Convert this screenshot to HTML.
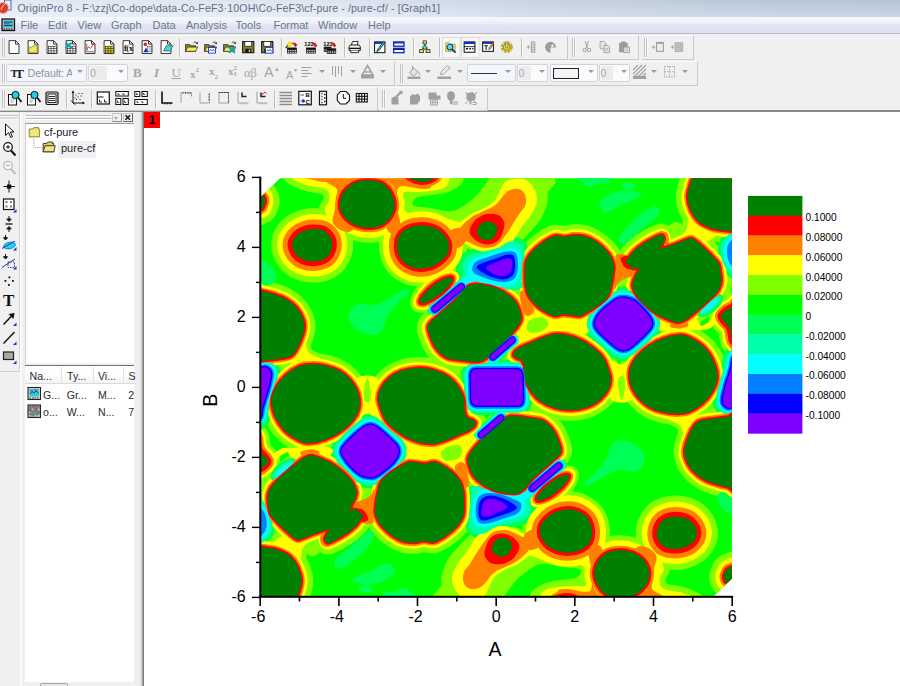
<!DOCTYPE html>
<html><head><meta charset="utf-8"><title>OriginPro 8</title>
<style>
html,body{margin:0;padding:0}
body{width:900px;height:686px;overflow:hidden;background:#fff;position:relative;font-family:"Liberation Sans",sans-serif}
</style></head><body>
<div style="position:absolute;left:0;top:0;width:900px;height:17px;background:linear-gradient(to right,#e2e8f3 0%,#dde4f0 38%,#c6d3e2 60%,#b9c9da 80%,#b3c5d7 100%)"></div>
<div style="position:absolute;left:0;top:0;width:900px;height:17px;background:linear-gradient(to bottom,rgba(255,255,255,0) 0%,rgba(255,255,255,0.3) 100%)"></div>
<div style="position:absolute;left:0;top:17px;width:900px;height:16px;background:linear-gradient(to bottom,#f6f8fc 0%,#eef1f9 35%,#dfe3f3 55%,#dde1f2 100%)"></div>
<div style="position:absolute;left:0;top:33px;width:900px;height:1px;background:#b4b9c8"></div>
<div style="position:absolute;left:0;top:34px;width:900px;height:76px;background:#f0f0f0"></div>
<div style="position:absolute;left:0;top:110px;width:900px;height:1.5px;background:#8a8a8a"></div>
<div style="position:absolute;left:0;top:111.5px;width:144px;height:575px;background:#f0f0f0"></div>
<div style="position:absolute;left:139.5px;top:111.5px;width:4.5px;height:575px;background:linear-gradient(to right,#ececec 0%,#c8c8c8 45%,#8c8c8c 75%,#6c6c6c 100%)"></div>
<div style="position:absolute;left:20px;top:111.5px;width:2px;height:575px;background:#fbfbfb"></div>
<div style="position:absolute;left:17.5px;top:0.8px;height:14px;line-height:14px;font-family:'Liberation Sans',sans-serif;font-size:10.6px;color:#5f6e86;white-space:nowrap;letter-spacing:0.13px" id="ttl">OriginPro 8 - F:\zzj\Co-dope\data-Co-FeF3·10OH\Co-FeF3\cf-pure - /pure-cf/ - [Graph1]</div>
<div class="mn" style="position:absolute;left:20.5px;top:19px;height:13px;line-height:13px;font-family:'Liberation Sans',sans-serif;font-size:11px;color:#6a7789;white-space:nowrap">File</div>
<div class="mn" style="position:absolute;left:48.0px;top:19px;height:13px;line-height:13px;font-family:'Liberation Sans',sans-serif;font-size:11px;color:#6a7789;white-space:nowrap">Edit</div>
<div class="mn" style="position:absolute;left:77.5px;top:19px;height:13px;line-height:13px;font-family:'Liberation Sans',sans-serif;font-size:11px;color:#6a7789;white-space:nowrap">View</div>
<div class="mn" style="position:absolute;left:111.0px;top:19px;height:13px;line-height:13px;font-family:'Liberation Sans',sans-serif;font-size:11px;color:#6a7789;white-space:nowrap">Graph</div>
<div class="mn" style="position:absolute;left:152.5px;top:19px;height:13px;line-height:13px;font-family:'Liberation Sans',sans-serif;font-size:11px;color:#6a7789;white-space:nowrap">Data</div>
<div class="mn" style="position:absolute;left:186.0px;top:19px;height:13px;line-height:13px;font-family:'Liberation Sans',sans-serif;font-size:11px;color:#6a7789;white-space:nowrap">Analysis</div>
<div class="mn" style="position:absolute;left:235.5px;top:19px;height:13px;line-height:13px;font-family:'Liberation Sans',sans-serif;font-size:11px;color:#6a7789;white-space:nowrap">Tools</div>
<div class="mn" style="position:absolute;left:273.5px;top:19px;height:13px;line-height:13px;font-family:'Liberation Sans',sans-serif;font-size:11px;color:#6a7789;white-space:nowrap">Format</div>
<div class="mn" style="position:absolute;left:318.0px;top:19px;height:13px;line-height:13px;font-family:'Liberation Sans',sans-serif;font-size:11px;color:#6a7789;white-space:nowrap">Window</div>
<div class="mn" style="position:absolute;left:368.0px;top:19px;height:13px;line-height:13px;font-family:'Liberation Sans',sans-serif;font-size:11px;color:#6a7789;white-space:nowrap">Help</div>
<div style="position:absolute;left:0.0px;top:35.0px;width:567.5px;height:24.5px;box-sizing:border-box;border-right:1px solid #c9c9c9;border-bottom:1px solid #c9c9c9;border-top:1px solid #fafafa"></div>
<div style="position:absolute;left:569.0px;top:35.0px;width:70.0px;height:24.5px;box-sizing:border-box;border-right:1px solid #c9c9c9;border-bottom:1px solid #c9c9c9;border-top:1px solid #fafafa"></div>
<div style="position:absolute;left:641.5px;top:35.0px;width:52.0px;height:24.5px;box-sizing:border-box;border-right:1px solid #c9c9c9;border-bottom:1px solid #c9c9c9;border-top:1px solid #fafafa"></div>
<div style="position:absolute;left:2.0px;top:38.0px;width:1px;height:19.0px;background:#c0c0c0;box-shadow:2px 0 0 #c0c0c0,1px 0 0 #fafafa,3px 0 0 #fafafa"></div>
<div style="position:absolute;left:571.5px;top:38.0px;width:1px;height:19.0px;background:#c0c0c0;box-shadow:2px 0 0 #c0c0c0,1px 0 0 #fafafa,3px 0 0 #fafafa"></div>
<div style="position:absolute;left:644.0px;top:38.0px;width:1px;height:19.0px;background:#c0c0c0;box-shadow:2px 0 0 #c0c0c0,1px 0 0 #fafafa,3px 0 0 #fafafa"></div>
<div style="position:absolute;left:0.0px;top:60.5px;width:395.0px;height:25.0px;box-sizing:border-box;border-right:1px solid #c9c9c9;border-bottom:1px solid #c9c9c9;border-top:1px solid #fafafa"></div>
<div style="position:absolute;left:397.0px;top:60.5px;width:300.5px;height:25.0px;box-sizing:border-box;border-right:1px solid #c9c9c9;border-bottom:1px solid #c9c9c9;border-top:1px solid #fafafa"></div>
<div style="position:absolute;left:2.0px;top:63.5px;width:1px;height:19.0px;background:#c0c0c0;box-shadow:2px 0 0 #c0c0c0,1px 0 0 #fafafa,3px 0 0 #fafafa"></div>
<div style="position:absolute;left:399.5px;top:63.5px;width:1px;height:19.0px;background:#c0c0c0;box-shadow:2px 0 0 #c0c0c0,1px 0 0 #fafafa,3px 0 0 #fafafa"></div>
<div style="position:absolute;left:0.0px;top:86.5px;width:377.5px;height:24.0px;box-sizing:border-box;border-right:1px solid #c9c9c9;border-bottom:1px solid #c9c9c9;border-top:1px solid #fafafa"></div>
<div style="position:absolute;left:379.0px;top:86.5px;width:108.5px;height:24.0px;box-sizing:border-box;border-right:1px solid #c9c9c9;border-bottom:1px solid #c9c9c9;border-top:1px solid #fafafa"></div>
<div style="position:absolute;left:2.0px;top:89.5px;width:1px;height:18.0px;background:#c0c0c0;box-shadow:2px 0 0 #c0c0c0,1px 0 0 #fafafa,3px 0 0 #fafafa"></div>
<div style="position:absolute;left:381.5px;top:89.5px;width:1px;height:18.0px;background:#c0c0c0;box-shadow:2px 0 0 #c0c0c0,1px 0 0 #fafafa,3px 0 0 #fafafa"></div>
<div style="position:absolute;left:178.5px;top:38.0px;width:1px;height:19px;background:#bdbdbd;box-shadow:1px 0 0 #fbfbfb"></div>
<div style="position:absolute;left:280.5px;top:38.0px;width:1px;height:19px;background:#bdbdbd;box-shadow:1px 0 0 #fbfbfb"></div>
<div style="position:absolute;left:343.7px;top:38.0px;width:1px;height:19px;background:#bdbdbd;box-shadow:1px 0 0 #fbfbfb"></div>
<div style="position:absolute;left:368.7px;top:38.0px;width:1px;height:19px;background:#bdbdbd;box-shadow:1px 0 0 #fbfbfb"></div>
<div style="position:absolute;left:413.3px;top:38.0px;width:1px;height:19px;background:#bdbdbd;box-shadow:1px 0 0 #fbfbfb"></div>
<div style="position:absolute;left:438.7px;top:38.0px;width:1px;height:19px;background:#bdbdbd;box-shadow:1px 0 0 #fbfbfb"></div>
<div style="position:absolute;left:521.0px;top:38.0px;width:1px;height:19px;background:#bdbdbd;box-shadow:1px 0 0 #fbfbfb"></div>
<div style="position:absolute;left:65.5px;top:89.5px;width:1px;height:18px;background:#bdbdbd;box-shadow:1px 0 0 #fbfbfb"></div>
<div style="position:absolute;left:91.0px;top:89.5px;width:1px;height:18px;background:#bdbdbd;box-shadow:1px 0 0 #fbfbfb"></div>
<div style="position:absolute;left:154.7px;top:89.5px;width:1px;height:18px;background:#bdbdbd;box-shadow:1px 0 0 #fbfbfb"></div>
<div style="position:absolute;left:274.0px;top:89.5px;width:1px;height:18px;background:#bdbdbd;box-shadow:1px 0 0 #fbfbfb"></div>
<div style="position:absolute;left:6.0px;top:64.0px;width:80.5px;height:18.0px;box-sizing:border-box;border:1px solid #d0d3da;border-radius:2px;background:#f3f6fc"></div>
<div style="position:absolute;left:77.0px;top:70.4px;width:0;height:0;border-left:3px solid transparent;border-right:3px solid transparent;border-top:3.5px solid #9a9a9a"></div>
<div style="position:absolute;left:27.5px;top:66px;width:44px;overflow:hidden;height:14px;line-height:14px;font-family:'Liberation Sans',sans-serif;font-size:10.6px;color:#8893a5;white-space:nowrap">Default: A</div>
<div style="position:absolute;left:10.5px;top:65.5px;height:14px;line-height:14px;font-family:'Liberation Serif',serif;font-weight:bold;font-size:11px;color:#222;letter-spacing:-2.5px">T<span style="font-size:13px;position:relative;top:1.5px">T</span></div>
<div style="position:absolute;left:88.0px;top:64.0px;width:39.5px;height:18.0px;box-sizing:border-box;border:1px solid #d0d3da;border-radius:2px;background:#fbfbfd"></div>
<div style="position:absolute;left:118.0px;top:70.4px;width:0;height:0;border-left:3px solid transparent;border-right:3px solid transparent;border-top:3.5px solid #9a9a9a"></div>
<div style="position:absolute;left:90px;top:66px;height:14px;line-height:14px;font-family:'Liberation Sans',sans-serif;font-size:10.6px;color:#a9a9a9;background:#ececec;width:17px">0</div>
<div style="position:absolute;left:467.0px;top:64.0px;width:48.5px;height:18.0px;box-sizing:border-box;border:1px solid #d0d3da;border-radius:2px;background:#f3f6fc"></div>
<div style="position:absolute;left:505.0px;top:70.4px;width:0;height:0;border-left:3px solid transparent;border-right:3px solid transparent;border-top:3.5px solid #9a9a9a"></div>
<div style="position:absolute;left:471px;top:73px;width:26px;height:1.3px;background:#333"></div>
<div style="position:absolute;left:516.5px;top:64.0px;width:31.5px;height:18.0px;box-sizing:border-box;border:1px solid #d0d3da;border-radius:2px;background:#fbfbfd"></div>
<div style="position:absolute;left:538.7px;top:70.4px;width:0;height:0;border-left:3px solid transparent;border-right:3px solid transparent;border-top:3.5px solid #9a9a9a"></div>
<div style="position:absolute;left:518.5px;top:66px;height:14px;line-height:14px;font-family:'Liberation Sans',sans-serif;font-size:10.6px;color:#a9a9a9;background:#ececec;width:12px">0</div>
<div style="position:absolute;left:549.5px;top:64.0px;width:48.0px;height:18.0px;box-sizing:border-box;border:1px solid #d0d3da;border-radius:2px;background:#fbfbfd"></div>
<div style="position:absolute;left:587.8px;top:70.4px;width:0;height:0;border-left:3px solid transparent;border-right:3px solid transparent;border-top:3.5px solid #9a9a9a"></div>
<div style="position:absolute;left:553px;top:67.5px;width:25.5px;height:11px;box-sizing:border-box;border:1.6px solid #222;background:#f4f4f4"></div>
<div style="position:absolute;left:598.5px;top:64.0px;width:31.5px;height:18.0px;box-sizing:border-box;border:1px solid #d0d3da;border-radius:2px;background:#fbfbfd"></div>
<div style="position:absolute;left:620.7px;top:70.4px;width:0;height:0;border-left:3px solid transparent;border-right:3px solid transparent;border-top:3.5px solid #9a9a9a"></div>
<div style="position:absolute;left:600.5px;top:66px;height:14px;line-height:14px;font-family:'Liberation Sans',sans-serif;font-size:10.6px;color:#a9a9a9;background:#ececec;width:12px">0</div>
<div style="position:absolute;left:318.7px;top:70.4px;width:0;height:0;border-left:3px solid transparent;border-right:3px solid transparent;border-top:3.5px solid #9a9a9a"></div>
<div style="position:absolute;left:349.5px;top:70.4px;width:0;height:0;border-left:3px solid transparent;border-right:3px solid transparent;border-top:3.5px solid #9a9a9a"></div>
<div style="position:absolute;left:380.0px;top:70.4px;width:0;height:0;border-left:3px solid transparent;border-right:3px solid transparent;border-top:3.5px solid #9a9a9a"></div>
<div style="position:absolute;left:425.0px;top:70.4px;width:0;height:0;border-left:3px solid transparent;border-right:3px solid transparent;border-top:3.5px solid #9a9a9a"></div>
<div style="position:absolute;left:456.5px;top:70.4px;width:0;height:0;border-left:3px solid transparent;border-right:3px solid transparent;border-top:3.5px solid #9a9a9a"></div>
<div style="position:absolute;left:651.0px;top:70.4px;width:0;height:0;border-left:3px solid transparent;border-right:3px solid transparent;border-top:3.5px solid #9a9a9a"></div>
<div style="position:absolute;left:681.7px;top:70.4px;width:0;height:0;border-left:3px solid transparent;border-right:3px solid transparent;border-top:3.5px solid #9a9a9a"></div>
<div style="position:absolute;left:133.0px;top:64.5px;height:16px;line-height:16px;font-family:'Liberation Serif',serif;font-size:13.0px;color:#a6a6a6;white-space:nowrap;font-weight:bold">B</div>
<div style="position:absolute;left:154.0px;top:64.5px;height:16px;line-height:16px;font-family:'Liberation Serif',serif;font-size:13.0px;color:#a6a6a6;white-space:nowrap;font-weight:bold;font-style:italic">I</div>
<div style="position:absolute;left:171.5px;top:64.5px;height:16px;line-height:16px;font-family:'Liberation Serif',serif;font-size:13.0px;color:#a6a6a6;white-space:nowrap;text-decoration:underline">U</div>
<div style="position:absolute;left:190.0px;top:62.5px;height:16px;line-height:16px;font-family:'Liberation Serif',serif;font-size:11.0px;color:#a6a6a6;white-space:nowrap;font-weight:bold">x<sup style="font-size:7px;position:relative;top:-1px">2</sup></div>
<div style="position:absolute;left:209.0px;top:62.5px;height:16px;line-height:16px;font-family:'Liberation Serif',serif;font-size:11.0px;color:#a6a6a6;white-space:nowrap;font-weight:bold">x<sub style="font-size:7px;position:relative;top:1px">2</sub></div>
<div style="position:absolute;left:228.0px;top:62.5px;height:16px;line-height:16px;font-family:'Liberation Serif',serif;font-size:11.0px;color:#a6a6a6;white-space:nowrap;font-weight:bold">x<span style="display:inline-block;font-size:6.5px;line-height:6px;vertical-align:middle;position:relative;top:-1px">2<br>1</span></div>
<div style="position:absolute;left:244.0px;top:65.0px;height:16px;line-height:16px;font-family:'Liberation Serif',serif;font-size:12.5px;color:#a6a6a6;white-space:nowrap;">αβ</div>
<div style="position:absolute;left:264.0px;top:63.5px;height:16px;line-height:16px;font-family:'Liberation Sans',serif;font-size:14.5px;color:#a6a6a6;white-space:nowrap;">A</div>
<div style="position:absolute;left:274.5px;top:61.0px;height:16px;line-height:16px;font-family:'Liberation Sans',serif;font-size:7.0px;color:#a6a6a6;white-space:nowrap;">▴</div>
<div style="position:absolute;left:286.0px;top:66.5px;height:16px;line-height:16px;font-family:'Liberation Sans',serif;font-size:11.0px;color:#a6a6a6;white-space:nowrap;">A</div>
<div style="position:absolute;left:293.5px;top:62.0px;height:16px;line-height:16px;font-family:'Liberation Sans',serif;font-size:6.0px;color:#a6a6a6;white-space:nowrap;">▾</div>
<div style="position:absolute;left:0;top:112px;width:20px;height:260px;box-sizing:border-box;border-right:1px solid #fdfdfd;border-bottom:1px solid #cfcfcf;background:#f0f0f0"></div>
<div style="position:absolute;left:19px;top:112px;width:1px;height:260px;background:#d2d2d2"></div>
<div style="position:absolute;left:0;top:115px;width:19px;height:1px;background:#c4c4c4;box-shadow:0 1px 0 #fff,0 2.500px 0 #c4c4c4,0 3.500px 0 #fff"></div>
<div style="position:absolute;left:26px;top:115px;width:85px;height:1px;background:#bdbdbd;box-shadow:0 1px 0 #fff,0 3px 0 #bdbdbd,0 4px 0 #fff"></div>
<div style="position:absolute;left:112px;top:113px;width:9.500px;height:9px;box-sizing:border-box;border:1px solid #c6c6c6;border-right-color:#8a8a8a;border-bottom-color:#8a8a8a;background:#f0f0f0"></div>
<div style="position:absolute;left:114.200px;top:116.500px;width:0;height:0;border-left:2.500px solid transparent;border-right:2.500px solid transparent;border-top:3px solid #aaa"></div>
<div style="position:absolute;left:123px;top:113px;width:9.500px;height:9px;box-sizing:border-box;border:1px solid #c6c6c6;border-right-color:#666;border-bottom-color:#666;background:#f0f0f0"></div>
<svg style="position:absolute;left:123px;top:113px" width="10" height="9"><path d="M2.500 2.200L7 6.800M7 2.200L2.500 6.800" stroke="#111" stroke-width="1.500"/></svg>
<div style="position:absolute;left:24.500px;top:122.500px;width:109.500px;height:240px;background:#fff;border-top:1px solid #9a9a9a;border-left:1px solid #cfcfcf;box-sizing:border-box"></div>
<div style="position:absolute;left:58px;top:141px;width:37.500px;height:16.500px;background:#efefef"></div>
<div style="position:absolute;left:44px;top:124.800px;height:14px;line-height:14px;font-family:'Liberation Sans',sans-serif;font-size:11px;color:#1c1c30;white-space:nowrap">cf-pure</div>
<div style="position:absolute;left:61px;top:140.800px;height:14px;line-height:14px;font-family:'Liberation Sans',sans-serif;font-size:11px;color:#1c1c30;white-space:nowrap">pure-cf</div>
<svg style="position:absolute;left:24.5px;top:121.8px" width="40" height="40" viewBox="0 0 43 43">
<path d="M4.500 7.500H8.500L9.500 6H14.500V7.500H15.500V16H4.500Z" fill="#e6e070" stroke="#7a7420" stroke-width=".9"/><path d="M5.500 8.500H14.500V15H5.500Z" fill="#ece87c"/>
<path d="M9.500 18V27.500H18" stroke="#888" fill="none" stroke-width="1" stroke-dasharray="1 1.200"/>
<path d="M19.500 23H23.500L24.500 21.500H29.500V23H31V32H19.500Z" fill="#d8d060" stroke="#333" stroke-width="1"/><path d="M21.500 25.500H32.500L31 32H19.500Z" fill="#ece87c" stroke="#333" stroke-width="1"/>
</svg>
<div style="position:absolute;left:24.500px;top:364.600px;width:109.500px;height:1.700px;background:#6e6e6e"></div>
<div style="position:absolute;left:24.500px;top:366.300px;width:109.500px;height:320px;background:#fff"></div>
<div style="position:absolute;left:24.500px;top:366.300px;width:109.500px;height:17.700px;background:linear-gradient(to bottom,#fff 0%,#fff 45%,#f3f4f6 100%);border-bottom:1px solid #d8dade;box-sizing:border-box"></div>
<div style="position:absolute;left:61.3px;top:366.500px;width:1px;height:17px;background:#dfe2e8"></div>
<div style="position:absolute;left:92.5px;top:366.500px;width:1px;height:17px;background:#dfe2e8"></div>
<div style="position:absolute;left:123.3px;top:366.500px;width:1px;height:17px;background:#dfe2e8"></div>
<div style="position:absolute;height:14px;line-height:14px;font-family:'Liberation Sans',sans-serif;font-size:10.600px;color:#2a2a33;white-space:nowrap;left:29.5px;top:369px">Na...</div>
<div style="position:absolute;height:14px;line-height:14px;font-family:'Liberation Sans',sans-serif;font-size:10.600px;color:#2a2a33;white-space:nowrap;left:67.0px;top:369px">Ty...</div>
<div style="position:absolute;height:14px;line-height:14px;font-family:'Liberation Sans',sans-serif;font-size:10.600px;color:#2a2a33;white-space:nowrap;left:98.0px;top:369px">Vi...</div>
<div style="position:absolute;height:14px;line-height:14px;font-family:'Liberation Sans',sans-serif;font-size:10.600px;color:#2a2a33;white-space:nowrap;left:128.5px;top:369px">S</div>
<div style="position:absolute;height:14px;line-height:14px;font-family:'Liberation Sans',sans-serif;font-size:10.600px;color:#2a2a33;white-space:nowrap;left:43.0px;top:387.500px;">G...</div>
<div style="position:absolute;height:14px;line-height:14px;font-family:'Liberation Sans',sans-serif;font-size:10.600px;color:#2a2a33;white-space:nowrap;left:66.7px;top:387.500px;">Gr...</div>
<div style="position:absolute;height:14px;line-height:14px;font-family:'Liberation Sans',sans-serif;font-size:10.600px;color:#2a2a33;white-space:nowrap;left:98.0px;top:387.500px;">M...</div>
<div style="position:absolute;height:14px;line-height:14px;font-family:'Liberation Sans',sans-serif;font-size:10.600px;color:#2a2a33;white-space:nowrap;left:128.3px;top:387.500px;width:5.700px;overflow:hidden">2</div>
<div style="position:absolute;height:14px;line-height:14px;font-family:'Liberation Sans',sans-serif;font-size:10.600px;color:#2a2a33;white-space:nowrap;left:43.0px;top:404.800px;">o...</div>
<div style="position:absolute;height:14px;line-height:14px;font-family:'Liberation Sans',sans-serif;font-size:10.600px;color:#2a2a33;white-space:nowrap;left:66.7px;top:404.800px;">W...</div>
<div style="position:absolute;height:14px;line-height:14px;font-family:'Liberation Sans',sans-serif;font-size:10.600px;color:#2a2a33;white-space:nowrap;left:98.0px;top:404.800px;">N...</div>
<div style="position:absolute;height:14px;line-height:14px;font-family:'Liberation Sans',sans-serif;font-size:10.600px;color:#2a2a33;white-space:nowrap;left:128.3px;top:404.800px;width:5.700px;overflow:hidden">7</div>
<svg style="position:absolute;left:27px;top:386px" width="16" height="34">
<rect x="1" y="1.500" width="12.500" height="12" fill="#d8d8d8" stroke="#222" stroke-width="1.100"/><rect x="2.500" y="3" width="9.500" height="7.500" fill="#30c8d8"/><path d="M3 8l2-2.500 2 1.500 2-2 2.500 2" stroke="#104080" fill="none" stroke-width=".9"/><path d="M3 5h2M7 4h3" stroke="#d02020" stroke-width=".8"/><path d="M2.500 12h9.500" stroke="#222" stroke-width="1.200" stroke-dasharray="1.500 1"/>
<rect x="1" y="19" width="12.500" height="12.500" fill="#c8c8c8" stroke="#222" stroke-width="1.100"/><path d="M4 19V31.500M7 19V31.500M10 19V31.500M1 22H13.500M1 25H13.500M1 28H13.500" stroke="#445" stroke-width=".7"/><path d="M2 20.500h1.500M5 20.500h1.500M8 20.500h1.500M11 20.500h1.500" stroke="#e02020" stroke-width="1.500"/><path d="M5 26.500h1.500M8 26.500h1.500M5 29.500h1.500" stroke="#20a040" stroke-width="1.300"/><path d="M2 23.500h1.500M8 23.500h1.500M11 26.500h1.500" stroke="#2040d0" stroke-width="1.300"/>
</svg>
<div style="position:absolute;left:24.500px;top:682px;width:109.500px;height:4px;background:#f0f0f0"></div>
<div style="position:absolute;left:39.5px;top:683px;width:28px;height:4px;box-sizing:border-box;border:1px solid #a8a8a8;border-bottom:none;border-radius:2px 2px 0 0;background:#e6e6e6"></div>
<div style="position:absolute;left:144px;top:111.800px;width:16.400px;height:16.400px;background:#ff0000"></div>
<div style="position:absolute;left:144px;top:112.500px;width:16.400px;height:15px;line-height:15px;text-align:center;font-family:'Liberation Sans',sans-serif;font-weight:bold;font-size:12px;color:#000">1</div>
<svg style="position:absolute;left:0;top:0" width="20" height="34">
<rect x="4.500" y="0" width="6.500" height="10" fill="#e8ecf6" stroke="#5060c0" stroke-width="1"/>
<circle cx="3" cy="8" r="5.500" fill="#d84020" stroke="#f0b0a0" stroke-width="1"/><path d="M1 9.500C2.500 5.500 4 5 5.500 3.500" stroke="#fff" fill="none" stroke-width="1"/>
<rect x="2" y="19" width="12.500" height="11.500" fill="#c0c4cc" stroke="#111" stroke-width="1.300"/><rect x="3.500" y="20.500" width="9.500" height="7" fill="#30c0d0"/><path d="M4 22h8.500M4 25.500h8.500" stroke="#104080" stroke-width="1"/><path d="M4 23.700h5" stroke="#e02020" stroke-width=".9"/><path d="M3.500 29h9.500" stroke="#111" stroke-width="1.200" stroke-dasharray="1.500 1"/>
</svg>
<svg style="position:absolute;left:0;top:0" width="900" height="686" viewBox="0 0 900 686"><g transform="translate(7.8 40.2) scale(0.86)"><path d="M1.5 .5H9L13 4.5V15.5H1.5Z" fill="#fff" stroke="#1a1a1a" stroke-width="1"/><path d="M9 .5V4.5H13" fill="none" stroke="#1a1a1a" stroke-width="1"/></g>
<g transform="translate(26.8 40.2) scale(0.86)"><path d="M1.5 .5H9L13 4.5V15.5H1.5Z" fill="#fff" stroke="#1a1a1a" stroke-width="1"/><path d="M9 .5V4.5H13" fill="none" stroke="#1a1a1a" stroke-width="1"/><path d="M2.5 8H6L7 6.5H12V14.5H2.5Z" fill="#f0e860" stroke="#8a8420" stroke-width=".8"/></g>
<g transform="translate(45.8 40.2) scale(0.86)"><path d="M1.5 .5H9L13 4.5V15.5H1.5Z" fill="#fff" stroke="#1a1a1a" stroke-width="1"/><path d="M9 .5V4.5H13" fill="none" stroke="#1a1a1a" stroke-width="1"/><rect x="3" y="7" width="9.5" height="8" fill="#fff" stroke="#1a1a1a" stroke-width="0.7"/><path d="M6.16667 7V15" stroke="#1a1a1a" stroke-width="0.7"/><path d="M9.33333 7V15" stroke="#1a1a1a" stroke-width="0.7"/><path d="M3 9.66667H12.5" stroke="#1a1a1a" stroke-width="0.7"/><path d="M3 12.3333H12.5" stroke="#1a1a1a" stroke-width="0.7"/></g>
<g transform="translate(64.8 40.2) scale(0.86)"><path d="M1.5 .5H9L13 4.5V15.5H1.5Z" fill="#fff" stroke="#1a1a1a" stroke-width="1"/><path d="M9 .5V4.5H13" fill="none" stroke="#1a1a1a" stroke-width="1"/><rect x="3" y="7" width="9.5" height="8" fill="#fff" stroke="#1a1a1a" stroke-width="0.7"/><path d="M6.16667 7V15" stroke="#1a1a1a" stroke-width="0.7"/><path d="M9.33333 7V15" stroke="#1a1a1a" stroke-width="0.7"/><path d="M3 9.66667H12.5" stroke="#1a1a1a" stroke-width="0.7"/><path d="M3 12.3333H12.5" stroke="#1a1a1a" stroke-width="0.7"/><path d="M1 3L8 9M8 3L1 9" stroke="#18a0a0" stroke-width="2.4"/></g>
<g transform="translate(83.8 40.2) scale(0.86)"><path d="M1.5 .5H9L13 4.5V15.5H1.5Z" fill="#fff" stroke="#1a1a1a" stroke-width="1"/><path d="M9 .5V4.5H13" fill="none" stroke="#1a1a1a" stroke-width="1"/><path d="M3.5 4V13.5H12" stroke="#333" fill="none" stroke-width=".8"/><path d="M4 11C6 3 7 13 9 8S11 5 12 6" stroke="#e01010" fill="none" stroke-width="1.1"/></g>
<g transform="translate(102.8 40.2) scale(0.86)"><path d="M1.5 .5H9L13 4.5V15.5H1.5Z" fill="#fff" stroke="#1a1a1a" stroke-width="1"/><path d="M9 .5V4.5H13" fill="none" stroke="#1a1a1a" stroke-width="1"/><rect x="3" y="7" width="9.5" height="8" fill="#f0e000" stroke="#1a1a1a" stroke-width="0.7"/><path d="M6.16667 7V15" stroke="#1a1a1a" stroke-width="0.7"/><path d="M9.33333 7V15" stroke="#1a1a1a" stroke-width="0.7"/><path d="M3 9.66667H12.5" stroke="#1a1a1a" stroke-width="0.7"/><path d="M3 12.3333H12.5" stroke="#1a1a1a" stroke-width="0.7"/></g>
<g transform="translate(121.8 40.2) scale(0.86)"><path d="M1.5 .5H9L13 4.5V15.5H1.5Z" fill="#fff" stroke="#1a1a1a" stroke-width="1"/><path d="M9 .5V4.5H13" fill="none" stroke="#1a1a1a" stroke-width="1"/><text x="2.5" y="13" font-family="Liberation Serif" font-weight="bold" font-size="9.5" fill="#000">f<tspan dx="-.5">(x</tspan></text></g>
<g transform="translate(140.8 40.2) scale(0.86)"><path d="M1.5 .5H9L13 4.5V15.5H1.5Z" fill="#fff" stroke="#1a1a1a" stroke-width="1"/><path d="M9 .5V4.5H13" fill="none" stroke="#1a1a1a" stroke-width="1"/><rect x="3.5" y="3" width="3.5" height="3.5" fill="#f01010"/><path d="M3 14L6 8.5L9 14Z" fill="#1030e0"/><rect x="8" y="7" width="4" height="6" fill="#ddd" stroke="#555" stroke-width=".6"/></g>
<g transform="translate(159.8 40.2) scale(0.86)"><path d="M1.5 .5H9L13 4.5V15.5H1.5Z" fill="#fff" stroke="#1a1a1a" stroke-width="1"/><path d="M9 .5V4.5H13" fill="none" stroke="#1a1a1a" stroke-width="1"/><path d="M4.5 12.5L7.5 6.5H15L12 12.5Z" fill="#50d8d8" stroke="#107070" stroke-width="1"/></g>
<g transform="translate(184.8 40.2) scale(0.86)"><path d="M.8 5H6L7 6.5H12.5V13H.8Z" fill="#8a8420" stroke="#222" stroke-width=".8"/><path d="M.8 13L3.2 8H15L12.5 13Z" fill="#f0e860" stroke="#222" stroke-width=".8"/><path d="M10 3.5C11.5 1.5 14 1.5 14.8 4M14.8 4l-2-.3M14.8 4l.4-1.8" stroke="#222" fill="none" stroke-width=".9"/></g>
<g transform="translate(203.8 40.2) scale(0.86)"><path d="M.8 5H6L7 6.5H12.5V13H.8Z" fill="#8a8420" stroke="#222" stroke-width=".8"/><path d="M.8 13L3.2 8H15L12.5 13Z" fill="#f0e860" stroke="#222" stroke-width=".8"/><path d="M10 3.5C11.5 1.5 14 1.5 14.8 4M14.8 4l-2-.3M14.8 4l.4-1.8" stroke="#222" fill="none" stroke-width=".9"/><rect x="5.5" y="8.5" width="8" height="6.5" fill="#fff" stroke="#1038d0" stroke-width="1"/><path d="M6.5 13l1.5-2 1.5 1.5 1.5-2 1.5 2.5" stroke="#1038d0" fill="none" stroke-width=".9"/></g>
<g transform="translate(222.8 40.2) scale(0.86)"><path d="M.8 5H6L7 6.5H12.5V13H.8Z" fill="#8a8420" stroke="#222" stroke-width=".8"/><path d="M.8 13L3.2 8H15L12.5 13Z" fill="#f0e860" stroke="#222" stroke-width=".8"/><path d="M10 3.5C11.5 1.5 14 1.5 14.8 4M14.8 4l-2-.3M14.8 4l.4-1.8" stroke="#222" fill="none" stroke-width=".9"/><path d="M7 8L14 14.5M14 8L7 14.5" stroke="#18a0a0" stroke-width="2.4"/></g>
<g transform="translate(241.8 40.2) scale(0.86)"><path d="M1 1.5H14V14.5H1Z" fill="#8a8420" stroke="#111" stroke-width="1.2"/><rect x="3.5" y="1.5" width="8" height="5.5" fill="#fff" stroke="#111" stroke-width=".8"/><rect x="4" y="10" width="7" height="4.5" fill="#111"/><rect x="8" y="11" width="1.8" height="2.5" fill="#ddd"/></g>
<g transform="translate(260.8 40.2) scale(0.86)"><path d="M1 1.5H14V14.5H1Z" fill="#8a8420" stroke="#111" stroke-width="1.2"/><rect x="3.5" y="1.5" width="8" height="5.5" fill="#fff" stroke="#111" stroke-width=".8"/><rect x="4" y="10" width="7" height="4.5" fill="#111"/><rect x="8" y="11" width="1.8" height="2.5" fill="#ddd"/><rect x="5.5" y="8.5" width="8.5" height="6.5" fill="#fff" stroke="#1038d0" stroke-width="1"/><path d="M6.5 13l1.5-2 1.5 1.5 1.5-2 1.5 2.5" stroke="#1038d0" fill="none" stroke-width=".9"/></g>
<g transform="translate(284.8 40.2) scale(0.86)"><rect x="3" y="9" width="10.5" height="6" fill="#fff" stroke="#1a1a1a" stroke-width="0.9"/><path d="M5.625 9V15" stroke="#1a1a1a" stroke-width="0.9"/><path d="M8.25 9V15" stroke="#1a1a1a" stroke-width="0.9"/><path d="M10.875 9V15" stroke="#1a1a1a" stroke-width="0.9"/><path d="M3 11H13.5" stroke="#1a1a1a" stroke-width="0.9"/><path d="M3 13H13.5" stroke="#1a1a1a" stroke-width="0.9"/><rect x="3" y="9" width="10.5" height="2" fill="#111"/><path d="M1 9L5 5" stroke="#333" stroke-width="1.6"/><path d="M5 1l1 2.5 2.5-1-1.5 2.2 2 1.3-2.6.3.2 2.4-1.6-1.8-1.8 1.4.6-2.3L1.500 5l2.200-.8Z" fill="#f8f000" stroke="#c0a000" stroke-width=".3"/><path d="M8 3.500H12.500V6.500M12.500 7.500l-1.800-2.200h3.600Z" stroke="#e01010" fill="#e01010" stroke-width="1"/></g>
<g transform="translate(304.3 40.2) scale(0.86)"><rect x="2.5" y="9" width="10.5" height="6" fill="#fff" stroke="#1a1a1a" stroke-width="0.9"/><path d="M5.125 9V15" stroke="#1a1a1a" stroke-width="0.9"/><path d="M7.75 9V15" stroke="#1a1a1a" stroke-width="0.9"/><path d="M10.375 9V15" stroke="#1a1a1a" stroke-width="0.9"/><path d="M2.5 11H13" stroke="#1a1a1a" stroke-width="0.9"/><path d="M2.5 13H13" stroke="#1a1a1a" stroke-width="0.9"/><rect x="2.5" y="9" width="10.5" height="2" fill="#111"/><text x="0" y="6.500" font-family="Liberation Sans" font-weight="bold" font-size="6.500" fill="#000">123</text><path d="M9 3.500H13V6.500M13 8l-1.800-2.300h3.600Z" stroke="#e01010" fill="#e01010" stroke-width="1"/></g>
<g transform="translate(323.3 40.2) scale(0.86)"><rect x="1" y="8" width="8" height="5" fill="#fff" stroke="#1a1a1a" stroke-width="0.9"/><path d="M3 8V13" stroke="#1a1a1a" stroke-width="0.9"/><path d="M5 8V13" stroke="#1a1a1a" stroke-width="0.9"/><path d="M7 8V13" stroke="#1a1a1a" stroke-width="0.9"/><path d="M1 9.66667H9" stroke="#1a1a1a" stroke-width="0.9"/><path d="M1 11.3333H9" stroke="#1a1a1a" stroke-width="0.9"/><rect x="1" y="8" width="8" height="2" fill="#111"/><rect x="4.5" y="10" width="10" height="5.5" fill="#fff" stroke="#1a1a1a" stroke-width="0.9"/><path d="M7 10V15.5" stroke="#1a1a1a" stroke-width="0.9"/><path d="M9.5 10V15.5" stroke="#1a1a1a" stroke-width="0.9"/><path d="M12 10V15.5" stroke="#1a1a1a" stroke-width="0.9"/><path d="M4.5 11.8333H14.5" stroke="#1a1a1a" stroke-width="0.9"/><path d="M4.5 13.6667H14.5" stroke="#1a1a1a" stroke-width="0.9"/><rect x="4.5" y="10" width="10" height="2" fill="#111"/><text x="0" y="6.500" font-family="Liberation Sans" font-weight="bold" font-size="6.500" fill="#000">123</text><path d="M9 3.500H13V6.500M13 8l-1.800-2.300h3.600Z" stroke="#e01010" fill="#e01010" stroke-width="1"/></g>
<g transform="translate(347.8 40.2) scale(0.86)"><path d="M4 6L5.500 1.500H12L11 6" fill="#fff" stroke="#111" stroke-width="1"/><path d="M1.500 7.500L3 5.500H13L14.500 7.500V12H1.500Z" fill="#eee" stroke="#111" stroke-width="1.1"/><path d="M1.500 9.500H14.500" stroke="#111" stroke-width="1.500"/><path d="M3.500 12v2.500H12.500V12" fill="#fff" stroke="#111" stroke-width="1"/><rect x="10.500" y="10.600" width="2" height="1" fill="#e0d000"/></g>
<g transform="translate(373.3 40.2) scale(0.86)"><rect x="1.500" y="2" width="12" height="12.500" fill="#fff" stroke="#111" stroke-width="1.200"/><rect x="1.500" y="2" width="9" height="2.300" fill="#1030c0"/><path d="M4 13.500L5.500 10L12 1.500L13.500 2.800L7 11.500Z" fill="#20c0d0" stroke="#111" stroke-width=".8"/></g>
<g transform="translate(392.8 40.2) scale(0.86)"><rect x="1" y="2" width="12" height="5" fill="#fff" stroke="#1030c0" stroke-width="1.600"/><rect x="1" y="9.500" width="12" height="5" fill="#fff" stroke="#1030c0" stroke-width="1.600"/><path d="M1 3H13M1 10.500H13" stroke="#10208a" stroke-width="1.500"/></g>
<g transform="translate(418.8 40.2) scale(0.86)"><path d="M7 4V7M7 7L3.500 11M7 7L10.500 11" stroke="#111" stroke-width="1"/><rect x="5" y=".8" width="4" height="3.500" fill="#f0e040" stroke="#111" stroke-width=".8"/><path d="M7 5.500L9.800 8.300L7 11.100L4.200 8.300Z" fill="#40d8e0" stroke="#111" stroke-width=".8"/><rect x="1" y="11" width="4.500" height="3.500" fill="#f0e040" stroke="#111" stroke-width=".8"/><rect x="8.500" y="11" width="4.500" height="3.500" fill="#f0e040" stroke="#111" stroke-width=".8"/></g>
<rect x="442.5" y="37.500" width="17.500" height="20" fill="#f8f8f8" stroke="#d8d8d8" stroke-width=".8"/><rect x="461.5" y="37.500" width="17.500" height="20" fill="#f8f8f8" stroke="#d8d8d8" stroke-width=".8"/>
<g transform="translate(444.8 40.2) scale(0.86)"><path d="M1 3H5L6 4.500H12V13H1Z" fill="#f0e030" stroke="#a09000" stroke-width=".7"/><circle cx="6" cy="8" r="3.300" fill="#50e0f0" stroke="#1030c0" stroke-width="1.200"/><path d="M8.500 10.500L12.500 14.500" stroke="#1020a0" stroke-width="1.800"/></g>
<g transform="translate(463.3 40.2) scale(0.86)"><rect x="1" y="2" width="12.500" height="12" fill="#fff" stroke="#111" stroke-width="1.200"/><rect x="1" y="2" width="12.500" height="2.500" fill="#1030c0"/><path d="M1 7.500H13.500" stroke="#111" stroke-width="1"/><path d="M3 10h2.500M7 10h2M10.500 10h1.500" stroke="#111" stroke-width="1.800"/></g>
<g transform="translate(481.8 40.2) scale(0.86)"><rect x="1" y="2" width="12.500" height="11" fill="#fff" stroke="#111" stroke-width="1.200"/><rect x="1" y="2" width="12.500" height="2.300" fill="#1030c0"/><path d="M3 6.500h4M5 6.500v5" stroke="#111" stroke-width="1.200"/><path d="M8 11L8.800 8.500L12.500 3L13.800 4L10 9.800Z" fill="#f0d020" stroke="#111" stroke-width=".6"/><circle cx="13" cy="3" r="1.300" fill="#e02020"/></g>
<g transform="translate(500.3 40.2) scale(0.86)"><circle cx="7.500" cy="8" r="5" fill="none" stroke="#c8b400" stroke-width="3.200" stroke-dasharray="2.600 1.330"/><circle cx="7.500" cy="8" r="4" fill="#e8d820" stroke="#504800" stroke-width=".6"/><rect x="6.300" y="3" width="2.400" height="6" rx="1" fill="#eee" stroke="#444" stroke-width=".7"/><circle cx="7.500" cy="8" r="6.600" fill="none" stroke="#605800" stroke-width=".5" stroke-dasharray="2 1.500"/></g>
<g transform="translate(525.8 40.2) scale(0.86)"><path d="M1 8H5M3 6V10" stroke="#9c9c9c" stroke-width="1"/><rect x="6.500" y="2" width="4" height="12" fill="#ddd" stroke="#9c9c9c" stroke-width="1"/><path d="M6.500 5H10.500M6.500 8H10.500M6.500 11H10.500" stroke="#9c9c9c" stroke-width=".8"/></g>
<g transform="translate(544.3 40.2) scale(0.86)"><path d="M7 8.500H13.500A6.300 6.300 0 1 0 7.500 14.500Z" fill="#9c9c9c"/><circle cx="9.500" cy="6.500" r="1.500" fill="#f0f0f0"/></g>
<g transform="translate(580.8 40.2) scale(0.86)"><path d="M5 1L8 9.500M9 1L6 9.500" stroke="#9c9c9c" stroke-width="1.100"/><circle cx="4.500" cy="11.500" r="2" fill="none" stroke="#9c9c9c" stroke-width="1.100"/><circle cx="9.500" cy="11.500" r="2" fill="none" stroke="#9c9c9c" stroke-width="1.100"/></g>
<g transform="translate(598.8 40.2) scale(0.86)"><path d="M1.500 1.500H6L8 3.500V10H1.500Z" fill="#e8e8e8" stroke="#9c9c9c" stroke-width="1"/><path d="M6 6H10.500L12.500 8V14.500H6Z" fill="#e8e8e8" stroke="#9c9c9c" stroke-width="1"/><path d="M7.500 9.500h3.500M7.500 11.500h3.500" stroke="#9c9c9c" stroke-width=".8"/></g>
<g transform="translate(617.8 40.2) scale(0.86)"><rect x="1.500" y="3" width="10" height="11" rx="1" fill="#9c9c9c"/><rect x="4" y="1.500" width="5" height="3" fill="#9c9c9c"/><rect x="7" y="8" width="6.500" height="6.500" fill="#e8e8e8" stroke="#9c9c9c" stroke-width="1"/><path d="M8.500 10.500h3.500M8.500 12.500h3.500" stroke="#9c9c9c" stroke-width=".7"/></g>
<g transform="translate(651.3 40.2) scale(0.86)"><path d="M.5 8H4.500M2.500 6V10" stroke="#9c9c9c" stroke-width="1"/><rect x="6" y="3" width="8" height="10" fill="#ececec" stroke="#9c9c9c" stroke-width="1.200"/><path d="M6 3H14" stroke="#9c9c9c" stroke-width="2"/></g>
<g transform="translate(670.3 40.2) scale(0.86)"><path d="M.5 8H4.500M2.500 6V10" stroke="#9c9c9c" stroke-width="1"/><rect x="5.5" y="3" width="9" height="10" fill="#ececec" stroke="#9c9c9c" stroke-width="0.9"/><path d="M7.75 3V13" stroke="#9c9c9c" stroke-width="0.9"/><path d="M10 3V13" stroke="#9c9c9c" stroke-width="0.9"/><path d="M12.25 3V13" stroke="#9c9c9c" stroke-width="0.9"/><path d="M5.5 5.5H14.5" stroke="#9c9c9c" stroke-width="0.9"/><path d="M5.5 8H14.5" stroke="#9c9c9c" stroke-width="0.9"/><path d="M5.5 10.5H14.5" stroke="#9c9c9c" stroke-width="0.9"/></g>
<g transform="translate(301.5 65.0)"><path d="M0 2.500H10M0 5.500H7M0 8.500H10M0 11.500H6" stroke="#a0a0a0" stroke-width="1"/></g>
<g transform="translate(332.0 65.0)"><path d="M.5 1V10M3.500 1V12M6.500 1V9M9.500 1V11" stroke="#a0a0a0" stroke-width="1"/></g>
<g transform="translate(361.0 65.0)"><path d="M6.500 .5L12 10H1Z" fill="none" stroke="#a0a0a0" stroke-width="1.500"/><path d="M3.500 7H9.500" stroke="#a0a0a0" stroke-width="1.500"/><rect x="0" y="10" width="13" height="3.500" fill="#a0a0a0"/></g>
<g transform="translate(407.5 65.0)"><path d="M2 8L6 3L11 7L6 11Z" fill="#e4e4e4" stroke="#a0a0a0" stroke-width="1"/><path d="M5 1V5" stroke="#a0a0a0" stroke-width="1.200"/><path d="M11.500 7.500c1 1.500 1 2.500 0 3" stroke="#a0a0a0" fill="none" stroke-width="1"/><rect x="0" y="11.500" width="13" height="2.500" fill="#a0a0a0"/></g>
<g transform="translate(437.5 65.0)"><path d="M3 9.500L4 6.500L10 .8L12.500 3L6 9Z" fill="#eee" stroke="#a0a0a0" stroke-width="1"/><rect x="0" y="11.500" width="13.500" height="2.500" fill="#a0a0a0"/></g>
<g transform="translate(633.0 65.0)"><path d="M0 5L5 0M0 9L9 0M1 12L13 0M5 12L13 4M9 12L13 8" stroke="#a0a0a0" stroke-width="1.100"/><rect x="0" y="11" width="13" height="3" fill="#a0a0a0"/></g>
<g transform="translate(664.0 65.0)"><rect x=".5" y="1.500" width="10" height="10.500" fill="none" stroke="#a0a0a0" stroke-width=".9" stroke-dasharray="1.500 1"/><path d="M5.500 1.500V12M.5 6.700H10.500" stroke="#a0a0a0" stroke-width=".8" stroke-dasharray="1.500 1"/></g>
<g transform="translate(7.5 90.5)"><rect x="1" y="4" width="8" height="10.500" fill="#fff" stroke="#111" stroke-width="1"/><path d="M3 7.500h4M3 9.500h4M3 11.500h3" stroke="#777" stroke-width=".7"/><circle cx="8" cy="4.500" r="3.600" fill="#20d0e0" stroke="#111" stroke-width="1"/><path d="M10.500 7L14 11.500" stroke="#111" stroke-width="1.800"/></g>
<g transform="translate(26.5 90.5)"><rect x="1" y="4" width="8" height="10.500" fill="#fff" stroke="#111" stroke-width="1"/><path d="M3 7.500h4M3 9.500h4M3 11.500h3" stroke="#777" stroke-width=".7"/><circle cx="8" cy="4.500" r="3.600" fill="#20d0e0" stroke="#111" stroke-width="1"/><path d="M10.500 7L14 11.500" stroke="#111" stroke-width="1.800"/></g>
<g transform="translate(45.0 90.5)"><rect x="1" y="1.500" width="12" height="12.500" rx="1.500" fill="#ddd" stroke="#111" stroke-width="1.200"/><rect x="3" y="3.500" width="8" height="8.500" fill="#fff" stroke="#111" stroke-width=".9"/><path d="M4 6H10M4 8H10M4 10H10" stroke="#111" stroke-width=".9"/></g>
<g transform="translate(70.0 90.5)"><path d="M3 1V12.500H14" stroke="#111" fill="none" stroke-width="1"/><path d="M3 0l-1.500 2.500h3ZM15 12.500l-2.500-1.500v3Z" fill="#111"/><path d="M1 10L3 12.500L5.500 14.500" stroke="#111" fill="none" stroke-width=".8"/><path d="M5.500 4.500h1M8.500 3h1M7.500 6.500h1M10.500 5.500h1M6 9h1M9.500 9h1M11.500 3h1M4.500 7.500h1" stroke="#111" stroke-width="1.100"/></g>
<g transform="translate(96.5 90.5)"><rect x=".8" y="1.500" width="12" height="12" fill="#fff" stroke="#111" stroke-width="1.200"/><path d="M.8 6.500H7" stroke="#111" stroke-width="1"/><path d="M3 9v2.500h2.500" stroke="#111" fill="none" stroke-width=".9"/><path d="M8 9v2.500h2.500" stroke="#111" fill="none" stroke-width=".9"/></g>
<g transform="translate(115.0 90.5)"><rect x=".8" y="1" width="12.500" height="4.500" fill="#fff" stroke="#111" stroke-width="1"/><rect x=".8" y="8" width="5" height="6" fill="#fff" stroke="#111" stroke-width="1"/><rect x="8" y="8" width="5.300" height="6" fill="#fff" stroke="#111" stroke-width="1"/><path d="M3 2.500v1.500h1.500M8 2.500v1.500h1.500M2.500 10v2h1.500M9.500 10v2h1.500" stroke="#111" fill="none" stroke-width=".8"/></g>
<g transform="translate(134.0 90.5)"><rect x=".8" y="1" width="5" height="5" fill="#fff" stroke="#111" stroke-width="1"/><rect x="8" y="1" width="5.300" height="5" fill="#fff" stroke="#111" stroke-width="1"/><rect x=".8" y="9" width="12.500" height="5" fill="#fff" stroke="#111" stroke-width="1"/><path d="M2.500 2.500v1.500h1.500M9.500 2.500v1.500h1.500M3 10.500v1.500h1.500M8 10.500v1.500h1.500" stroke="#111" fill="none" stroke-width=".8"/></g>
<g transform="translate(161.0 90.5)"><path d="M1 1V12.500H11.500" stroke="#111" fill="none" stroke-width="1.6"/><path d="M4 12.500v1.500M6.500 12.500v1.500M9 12.500v1.500" stroke="#111" stroke-width=".8"/></g>
<g transform="translate(180.0 90.5)"><path d="M1 12.500V2H11.500V6" stroke="#a0a0a0" fill="none" stroke-width="1"/><path d="M3 2v1.500M5.500 2v1.500M8 2v1.500M10 2v1.500" stroke="#333" stroke-width=".8"/></g>
<g transform="translate(199.0 90.5)"><path d="M1 2V12.500H10.500V2" stroke="#a0a0a0" fill="none" stroke-width="1"/><path d="M10.500 4h-1.500M10.500 6.500h-1.500M10.500 9h-1.500" stroke="#555" stroke-width=".8"/></g>
<g transform="translate(218.0 90.5)"><rect x="1" y="2" width="9.500" height="10.500" fill="none" stroke="#a0a0a0" stroke-width="1"/><path d="M1 2H10.500" stroke="#333" stroke-width="1" stroke-dasharray="1.500 1"/><path d="M10.500 2V12.500" stroke="#555" stroke-width="1" stroke-dasharray="1.500 1"/></g>
<g transform="translate(237.0 90.5)"><path d="M1 1V12.500H11.500" stroke="#a0a0a0" fill="none" stroke-width="1"/><path d="M4 12.500v1.500M6.500 12.500v1.500M9 12.500v1.500" stroke="#a0a0a0" stroke-width=".8"/><path d="M5 2V6H9.500" stroke="#222" fill="none" stroke-width="1.500"/></g>
<g transform="translate(256.0 90.5)"><path d="M1 1V12.500H11.500" stroke="#a0a0a0" fill="none" stroke-width="1"/><path d="M4 12.500v1.500M6.500 12.500v1.500M9 12.500v1.500" stroke="#a0a0a0" stroke-width=".8"/><path d="M5 2V6H9.500" stroke="#222" fill="none" stroke-width="1.500"/><path d="M6 4L9 1.500L10.500 3" stroke="#e02020" fill="none" stroke-width="1"/></g>
<g transform="translate(279.5 90.5)"><path d="M0 2H12.500M0 5H12.500M0 8H12.500M0 11H12.500M0 14H12.500" stroke="#8c8c8c" stroke-width="1.300"/></g>
<g transform="translate(298.0 90.5)"><rect x=".8" y=".8" width="12.500" height="13.500" fill="#fff" stroke="#111" stroke-width="1.200"/><path d="M2.500 4.500H6" stroke="#555" stroke-width="1"/><path d="M2.500 10.500H5.500M7 10.500l-2.200-1.500v3Z" stroke="#1030e0" fill="#1030e0" stroke-width=".9"/><text x="7.500" y="6.800" font-family="Liberation Sans" font-weight="bold" font-size="6" fill="#000">B</text><text x="7.500" y="13" font-family="Liberation Sans" font-weight="bold" font-size="6" fill="#000">C</text></g>
<g transform="translate(318.5 90.5)"><rect x="1" y=".8" width="7" height="13.500" fill="#fff" stroke="#111" stroke-width="1.200"/><path d="M3 3h1M3 6h1M3 9h1M3 12h1M5.500 4h1.500M5.500 7.500h1.500M5.500 11h1.500" stroke="#111" stroke-width="1.300"/></g>
<g transform="translate(336.5 90.5)"><path d="M4 1H9.500L13 4.500V10L9.500 13.500H4L.8 10V4.500Z" fill="#fff" stroke="#111" stroke-width="1.100"/><path d="M6.800 3.500V7.800H9.500" stroke="#111" fill="none" stroke-width="1"/></g>
<g transform="translate(355.5 90.5)"><rect x="0.8" y="3" width="11" height="8.5" fill="#fff" stroke="#111" stroke-width="1.1"/><path d="M3.55 3V11.5" stroke="#111" stroke-width="1.1"/><path d="M6.3 3V11.5" stroke="#111" stroke-width="1.1"/><path d="M9.05 3V11.5" stroke="#111" stroke-width="1.1"/><path d="M0.8 5.83333H11.8" stroke="#111" stroke-width="1.1"/><path d="M0.8 8.66667H11.8" stroke="#111" stroke-width="1.1"/></g>
<g transform="translate(390.5 90.5)"><path d="M1 14V7.500L5 5.500L8 7V14Z" fill="#9f9f9f"/><path d="M6 6L10.500 1.500" stroke="#9f9f9f" stroke-width="2.200"/><circle cx="10.500" cy="2" r="1.800" fill="#9f9f9f"/></g>
<g transform="translate(409.0 90.5)"><path d="M1 14V6.500L3.500 3.500L6 4.500L8.500 3L11 5.500V10L8 14Z" fill="#9f9f9f"/></g>
<g transform="translate(427.5 90.5)"><rect x="1" y="2" width="8" height="7" fill="#9f9f9f"/><rect x="5" y="5" width="8" height="4" fill="#9f9f9f"/><rect x="3" y="9.5" width="7" height="5" fill="#e8e8e8" stroke="#9f9f9f" stroke-width="0.8"/><path d="M5.33333 9.5V14.5" stroke="#9f9f9f" stroke-width="0.8"/><path d="M7.66667 9.5V14.5" stroke="#9f9f9f" stroke-width="0.8"/><path d="M3 12H10" stroke="#9f9f9f" stroke-width="0.8"/></g>
<g transform="translate(446.0 90.5)"><ellipse cx="5" cy="5.500" rx="4" ry="4.800" fill="#9f9f9f"/><path d="M5 9V13.500" stroke="#9f9f9f" stroke-width="2"/><path d="M5.500 11.500H12M5.500 13.500H12" stroke="#9f9f9f" stroke-width="1"/></g>
<g transform="translate(464.5 90.5)"><path d="M2 3L8 1.500L11 4V9L6 11L2 9Z" fill="#9f9f9f"/><path d="M6 10V14" stroke="#9f9f9f" stroke-width="1.800"/><path d="M.8 1.500L12.500 13.500M12.500 1.500L.8 13.500" stroke="#9f9f9f" stroke-width="1"/><path d="M8 12H12M8 14H12" stroke="#9f9f9f" stroke-width=".9"/></g>
<g transform="translate(2.0 122.5)"><path d="M3.500 1.500V13L6.500 10.200L8.800 15L10.500 14.200L8.300 9.500H12Z" fill="#fff" stroke="#111" stroke-width="1"/></g>
<g transform="translate(2.0 141.0)"><circle cx="6" cy="6" r="4.300" fill="#fff" stroke="#111" stroke-width="1.200"/><path d="M4 6H8M6 4V8" stroke="#111" stroke-width="1"/><path d="M9 9.500L13.500 14.500" stroke="#111" stroke-width="2"/></g>
<g transform="translate(2.0 159.5)"><circle cx="6" cy="6" r="4.300" fill="#f4f4f4" stroke="#b4b4b4" stroke-width="1.100"/><path d="M4 6H8" stroke="#b4b4b4" stroke-width="1"/><path d="M9 9.500L13.500 14.500" stroke="#b4b4b4" stroke-width="1.800"/></g>
<g transform="translate(2.0 178.5)"><path d="M1.500 8H13M7 2V14" stroke="#111" stroke-width="1"/><rect x="5" y="6" width="4.200" height="4.200" fill="#111"/></g>
<g transform="translate(2.0 197.0)"><rect x="1.500" y="2" width="10.500" height="10.500" fill="#fff" stroke="#111" stroke-width="1.200"/><path d="M3.500 4h2v2h-2ZM8 4h2v2H8ZM3.500 8.500h2v2h-2ZM8 8.500h2v2H8Z" fill="#777"/><path d="M14.500 15.500v-3.500l-3.500 3.500Z" fill="#1030e0"/></g>
<g transform="translate(2.0 216.0)"><path d="M7 0V4M7 5.500l-2.200-2.500h4.400ZM7 16V12M7 10.500l-2.200 2.500h4.400Z" stroke="#111" fill="#111" stroke-width="1"/><path d="M3.500 8H10.500" stroke="#111" stroke-width="1.300"/></g>
<g transform="translate(2.0 235.0)"><path d="M3.500 0V3.500M3.500 5l-2-2.300h4Z" stroke="#111" fill="#111" stroke-width="1"/><ellipse cx="7.500" cy="10.500" rx="6" ry="3.200" fill="#20d8e8" stroke="#1070c0" stroke-width=".8" transform="rotate(-12 7.500 10.500)"/><path d="M0 13.500L13 6" stroke="#1030e0" stroke-width="1"/><path d="M14.500 15.500v-3.500l-3.500 3.500Z" fill="#1030e0"/></g>
<g transform="translate(2.0 254.0)"><path d="M3.500 0V3.500M3.500 5l-2-2.300h4Z" stroke="#111" fill="#111" stroke-width="1"/><path d="M0 13.500L13 5" stroke="#1030e0" stroke-width="1"/><rect x="6" y="8" width="6.500" height="5.500" fill="none" stroke="#444" stroke-width="1" stroke-dasharray="1.500 1"/><path d="M14.500 15.500v-3.500l-3.500 3.500Z" fill="#1030e0"/></g>
<g transform="translate(2.0 273.0)"><path d="M6.500 3.500h1.800v1.800h-1.800ZM2.500 7h1.800v1.800h-1.800ZM10 7h1.800v1.800H10ZM6 11h1.800v1.800H6Z" fill="#111"/></g>
<g transform="translate(2.0 291.5)"><text x="1" y="14" font-family="Liberation Serif" font-weight="bold" font-size="17" fill="#111">T</text></g>
<g transform="translate(2.0 310.5)"><path d="M1.500 14L11.500 3.500" stroke="#111" stroke-width="1.500"/><path d="M12.500 2.500L6.500 3.500L11.500 8.500Z" fill="#111"/><path d="M14.500 15.500v-3.500l-3.500 3.500Z" fill="#1030e0"/></g>
<g transform="translate(2.0 329.5)"><path d="M1.500 14L12.500 2.500" stroke="#111" stroke-width="1.400"/><path d="M14.500 15.500v-3.500l-3.500 3.500Z" fill="#1030e0"/></g>
<g transform="translate(2.0 348.5)"><rect x="1.500" y="3.500" width="10" height="7.500" fill="#a8a8a8" stroke="#222" stroke-width="1.200"/><path d="M14.500 15.500v-3.500l-3.500 3.500Z" fill="#1030e0"/></g></svg>
<svg id="plot" width="900" height="686" viewBox="0 0 900 686" style="position:absolute;left:0;top:0">
<defs><clipPath id="cp"><path d="M261.0 197.0 L280.0 178.3 L731.9 178.3 L731.9 578.6 L714.0 596.0 L261.0 596.0 Z"/></clipPath></defs>
<style>.tk{font:16px "Liberation Sans",sans-serif;fill:#000}.ttl{font:19.5px "Liberation Sans",sans-serif;fill:#000}.lg{font:10.2px "Liberation Sans",sans-serif;fill:#000}</style>
<g clip-path="url(#cp)"><rect x="255" y="170" width="490" height="440" fill="#00ff00"/>
<g><path d="M368.3 180.3C372.5 180.5 377.9 180.9 381.7 182.8C385.4 184.8 388.7 188.2 390.8 192.0C393.0 195.8 394.7 201.2 394.7 205.3C394.7 209.5 393.0 213.7 390.8 217.0C388.7 220.3 385.1 223.5 381.7 225.3C378.2 227.1 374.2 227.8 370.0 227.8C365.8 227.9 360.7 227.2 356.7 225.7C352.6 224.1 348.6 221.6 345.8 218.7C343.1 215.7 340.7 211.7 340.0 207.8C339.3 203.9 340.3 198.8 341.7 195.3C343.1 191.9 345.8 189.2 348.3 187.0C350.8 184.8 353.3 183.1 356.7 182.0C360.0 180.9 364.2 180.2 368.3 180.3Z" fill="#80ff00" stroke="#80ff00" stroke-width="30.0" stroke-linejoin="round"/><path d="M301.7 175.3C295.0 176.3 313.6 179.9 318.3 181.2C323.1 182.4 326.9 181.6 330.0 182.8C333.1 184.1 335.3 186.6 336.7 188.7C338.1 190.8 336.4 195.6 338.3 195.3C340.3 195.1 345.0 190.3 348.3 187.0C351.7 183.7 366.1 177.3 358.3 175.3C350.6 173.4 308.3 174.4 301.7 175.3Z" fill="#80ff00" stroke="#80ff00" stroke-width="24.0" stroke-linejoin="round"/><path d="M290.8 175.3C285.3 176.9 299.9 182.4 305.0 184.5C310.1 186.6 317.8 186.6 321.7 187.8C325.6 189.1 327.1 189.9 328.3 192.0C329.6 194.1 329.7 197.4 329.2 200.3C328.6 203.2 324.9 206.2 325.0 209.5C325.1 212.8 328.1 218.2 330.0 220.3C331.9 222.4 335.3 229.5 336.7 222.0C338.1 214.5 346.0 183.1 338.3 175.3C330.7 167.6 296.4 173.8 290.8 175.3Z" fill="#80ff00" stroke="#80ff00" stroke-width="12.0" stroke-linejoin="round"/><path d="M314.2 229.1C317.2 229.2 321.4 229.3 324.2 230.8C327.0 232.3 329.6 235.5 330.9 238.0C332.2 240.5 332.4 243.2 332.2 245.8C332.0 248.4 331.1 251.4 329.8 253.6C328.5 255.8 326.8 257.8 324.2 259.1C321.6 260.4 317.7 261.5 314.2 261.6C310.7 261.7 306.2 261.0 303.1 259.7C300.0 258.4 297.1 255.9 295.3 253.6C293.5 251.3 292.5 248.2 292.2 245.8C291.9 243.4 292.6 241.1 293.7 239.1C294.8 237.1 296.6 235.1 298.7 233.6C300.8 232.1 303.8 230.8 306.4 230.0C309.0 229.2 311.2 229.0 314.2 229.1Z" fill="#80ff00" stroke="#80ff00" stroke-width="42.0" stroke-linejoin="round"/><path d="M250.0 193.7C251.9 190.8 259.0 193.9 261.3 194.5C263.7 195.1 263.5 195.8 264.2 197.0C264.8 198.2 265.4 200.1 265.3 201.7C265.2 203.2 264.3 204.9 263.7 206.2C263.0 207.5 263.6 208.5 261.3 209.5C259.1 210.5 251.9 214.6 250.0 212.0C248.1 209.4 248.1 196.6 250.0 193.7Z" fill="#80ff00" stroke="#80ff00" stroke-width="29.0" stroke-linejoin="round"/><path d="M423.0 225.3C428.0 225.6 434.0 227.2 438.0 229.5C442.0 231.8 445.2 236.1 447.0 239.0C448.8 241.9 449.1 244.3 449.0 247.0C448.9 249.7 449.0 252.2 446.7 255.3C444.4 258.4 439.4 263.1 435.0 265.3C430.6 267.5 424.5 268.7 420.0 268.7C415.5 268.7 411.3 267.3 408.0 265.5C404.7 263.7 401.8 261.1 400.0 258.0C398.2 254.9 397.2 250.7 397.0 247.0C396.8 243.3 397.2 239.2 399.0 236.0C400.8 232.8 404.0 229.8 408.0 228.0C412.0 226.2 418.0 225.1 423.0 225.3Z" fill="#80ff00" stroke="#80ff00" stroke-width="36.0" stroke-linejoin="round"/><path d="M395.0 188.7C395.0 182.3 370.3 177.6 395.0 175.3C419.7 173.1 517.9 172.3 543.3 175.3C568.8 178.4 546.9 188.7 547.5 193.7C548.1 198.7 547.9 200.9 546.7 205.3C545.4 209.8 542.8 215.9 540.0 220.3C537.2 224.8 533.3 228.4 530.0 232.0C526.7 235.6 523.6 238.9 520.0 242.0C516.4 245.1 512.5 248.4 508.3 250.3C504.2 252.3 500.0 253.4 495.0 253.7C490.0 253.9 483.3 253.1 478.3 252.0C473.3 250.9 468.9 249.2 465.0 247.0C461.1 244.8 457.2 242.8 455.0 238.7C452.8 234.5 454.4 225.3 451.7 222.0C448.9 218.7 443.3 219.5 438.3 218.7C433.3 217.8 427.2 217.0 421.7 217.0C416.1 217.0 409.4 219.2 405.0 218.7C400.6 218.1 396.7 218.7 395.0 213.7C393.3 208.7 395.0 195.1 395.0 188.7Z" fill="#80ff00"/><path d="M408.3 172.0C403.8 172.8 407.2 175.6 408.3 177.0C409.4 178.4 412.8 179.8 415.0 180.7C417.2 181.5 419.2 182.0 421.7 182.0C424.2 182.0 427.6 181.5 430.0 180.7C432.4 179.8 434.9 178.4 435.8 177.0C436.8 175.6 440.4 172.8 435.8 172.0C431.2 171.2 412.9 171.2 408.3 172.0Z" fill="#80ff00" stroke="#80ff00" stroke-width="28.0" stroke-linejoin="round"/><path d="M555.0 235.8C551.4 236.6 547.2 239.3 543.3 242.0C539.4 244.7 534.6 248.7 531.7 252.0C528.8 255.3 526.9 258.1 525.8 262.0C524.7 265.9 525.0 271.3 525.0 275.3C525.0 279.3 525.0 282.6 525.5 286.0C526.0 289.4 526.4 292.7 528.3 296.0C530.2 299.3 533.6 303.2 536.7 306.0C539.8 308.8 543.7 311.0 546.7 312.7C549.8 314.4 552.2 315.7 555.0 316.0C557.8 316.3 560.5 314.4 563.3 314.3C566.1 314.2 568.9 314.9 571.7 315.2C574.5 315.5 577.2 316.6 580.0 316.0C582.8 315.4 585.0 313.8 588.3 311.8C591.6 309.9 596.7 306.9 600.0 304.3C603.3 301.7 606.4 299.2 608.3 296.0C610.2 292.8 610.7 288.4 611.5 285.0C612.3 281.6 612.8 278.7 613.2 275.5C613.6 272.3 614.3 268.9 614.0 266.0C613.7 263.1 612.7 260.5 611.5 258.0C610.3 255.5 609.2 253.7 606.7 251.0C604.2 248.3 600.3 244.5 596.7 242.0C593.1 239.5 588.9 237.3 585.0 236.2C581.1 235.1 576.6 235.2 573.3 235.3C570.0 235.4 568.0 236.9 565.0 237.0C562.0 237.1 558.6 235.0 555.0 235.8Z" fill="#80ff00" stroke="#80ff00" stroke-width="22.0" stroke-linejoin="round"/><path d="M625.5 262.0C625.5 262.0 631.0 254.1 634.0 251.0C637.0 247.9 639.8 246.0 643.3 243.7C646.8 241.4 651.9 238.5 655.0 237.0C658.1 235.5 660.1 234.2 661.7 234.5C663.3 234.8 664.5 236.9 664.5 238.7C664.5 240.4 662.9 243.3 662.0 245.0C661.1 246.7 659.2 249.0 659.2 249.0C659.2 249.0 666.8 247.0 671.7 245.3C676.7 243.6 685.4 239.7 688.9 238.6C692.4 237.5 691.5 238.2 693.0 238.8C694.5 239.5 695.7 240.6 698.0 242.5C700.3 244.4 704.1 247.9 706.7 250.4C709.3 252.9 711.8 255.3 713.8 257.6C715.8 259.9 717.9 261.6 719.0 264.0C720.1 266.4 720.1 269.2 720.5 272.0C720.9 274.8 721.5 278.0 721.3 280.7C721.1 283.4 720.5 285.8 719.5 288.0C718.5 290.2 717.4 291.8 715.5 294.0C713.6 296.2 711.7 297.9 708.3 301.0C704.9 304.1 698.9 309.5 695.0 312.7C691.1 315.9 687.8 318.5 685.0 320.2C682.2 321.9 680.5 322.6 678.3 322.7C676.1 322.8 675.0 322.2 671.7 321.0C668.4 319.8 662.5 317.6 658.3 315.2C654.1 312.8 650.3 310.0 646.7 306.8C643.1 303.6 639.1 299.5 636.7 296.0C634.3 292.5 632.9 288.9 632.5 286.0C632.1 283.1 633.4 281.0 634.2 278.7C635.0 276.4 636.5 273.9 637.5 272.0C638.5 270.1 640.0 267.3 640.0 267.3C640.0 267.3 635.7 269.6 633.3 268.7C630.9 267.8 625.5 262.0 625.5 262.0Z" fill="#80ff00" stroke="#80ff00" stroke-width="22.0" stroke-linejoin="round"/><path d="M696.7 165.0C696.7 165.0 691.5 180.0 690.0 185.3C688.5 190.6 687.4 192.8 687.5 197.0C687.6 201.2 689.0 206.3 690.8 210.3C692.6 214.3 695.1 218.3 698.3 221.2C701.5 224.1 706.1 226.3 710.0 227.8C713.9 229.3 718.0 229.7 721.7 230.3C725.4 230.9 727.3 231.0 732.0 231.2C736.7 231.4 750.0 231.5 750.0 231.5C750.0 231.5 750.0 165.0 750.0 165.0C750.0 165.0 696.7 165.0 696.7 165.0Z" fill="#80ff00" stroke="#80ff00" stroke-width="23.4" stroke-linejoin="round"/><path d="M688.3 217.0C689.4 215.9 690.3 219.8 693.3 222.0C696.4 224.2 702.8 228.4 706.7 230.3C710.6 232.3 716.7 231.7 716.7 233.7C716.7 235.6 709.4 241.3 706.7 242.0C703.9 242.7 702.6 238.7 700.0 237.8C697.4 237.0 694.2 236.9 690.8 237.0C687.5 237.1 680.7 240.1 680.0 238.7C679.3 237.3 685.3 232.3 686.7 228.7C688.1 225.1 687.2 218.1 688.3 217.0Z" fill="#80ff00" stroke="#80ff00" stroke-width="10.0" stroke-linejoin="round"/><path d="M666.7 228.7C668.2 225.9 672.2 222.6 675.0 222.0C677.8 221.4 681.4 223.1 683.3 225.3C685.3 227.6 688.3 232.3 686.7 235.3C685.0 238.4 677.2 242.0 673.3 243.7C669.4 245.3 664.6 246.2 663.3 245.3C662.1 244.5 665.3 241.4 665.8 238.7C666.4 235.9 665.1 231.4 666.7 228.7Z" fill="#80ff00"/><path d="M250.0 290.2C251.9 278.4 257.7 290.4 261.3 291.0C264.9 291.6 267.7 292.2 271.7 293.5C275.6 294.8 280.8 296.1 285.0 298.5C289.2 300.9 293.6 304.2 296.7 307.7C299.7 311.1 302.1 315.7 303.3 319.3C304.6 322.9 304.7 325.4 304.2 329.3C303.6 333.2 301.8 338.5 300.0 342.7C298.2 346.8 295.6 351.8 293.3 354.3C291.1 356.8 289.7 356.8 286.7 357.7C283.6 358.5 279.2 358.8 275.0 359.3C270.8 359.9 265.5 360.6 261.3 361.0C257.2 361.4 251.9 373.6 250.0 361.8C248.1 350.0 248.1 302.0 250.0 290.2Z" fill="#80ff00" stroke="#80ff00" stroke-width="22.0" stroke-linejoin="round"/><path d="M288.3 357.7C289.2 355.7 295.6 354.9 298.3 352.7C301.1 350.4 303.2 344.3 305.0 344.3C306.8 344.3 306.4 350.0 309.2 352.7C311.9 355.3 322.4 358.6 321.7 360.2C321.0 361.7 309.7 361.1 305.0 361.8C300.3 362.5 296.1 365.0 293.3 364.3C290.6 363.6 287.5 359.6 288.3 357.7Z" fill="#80ff00" stroke="#80ff00" stroke-width="8.0" stroke-linejoin="round"/><path d="M271.7 400.0C272.0 395.0 274.2 390.3 276.7 386.0C279.2 381.7 282.8 377.6 286.7 374.3C290.6 371.0 295.6 367.7 300.0 366.0C304.4 364.3 308.9 364.3 313.3 364.3C317.8 364.3 322.2 364.9 326.7 366.0C331.1 367.1 336.1 368.8 340.0 371.0C343.9 373.2 347.2 376.2 350.0 379.3C352.8 382.4 355.1 385.9 356.7 389.3C358.3 392.8 359.2 396.6 359.5 400.0C359.8 403.4 359.9 406.5 358.7 410.0C357.5 413.5 355.6 417.3 352.5 421.0C349.4 424.7 344.6 429.1 340.0 432.2C335.4 435.3 330.0 437.9 325.0 439.7C320.0 441.5 314.2 442.8 310.0 443.0C305.8 443.2 304.2 443.0 300.0 441.0C295.8 439.0 289.2 435.2 285.0 431.0C280.8 426.8 277.2 421.2 275.0 416.0C272.8 410.8 271.4 405.0 271.7 400.0Z" fill="#80ff00" stroke="#80ff00" stroke-width="22.0" stroke-linejoin="round"/><path d="M470.0 285.0C476.1 282.7 485.8 285.2 491.7 286.5C497.5 287.8 501.1 290.2 505.0 292.7C508.9 295.1 512.4 297.7 515.0 301.0C517.6 304.3 519.4 309.3 520.3 312.7C521.3 316.0 521.9 317.9 520.8 321.0C519.8 324.1 517.4 327.1 514.2 331.0C511.0 334.9 506.0 340.0 501.7 344.3C497.4 348.6 492.2 353.9 488.3 356.8C484.4 359.8 483.1 361.3 478.3 361.8C473.6 362.4 465.3 360.9 460.0 360.2C454.7 359.5 450.6 359.5 446.7 357.7C442.8 355.9 439.4 352.9 436.7 349.3C433.9 345.7 431.4 340.0 430.0 336.0C428.6 332.0 426.9 328.6 428.3 325.2C429.7 321.7 433.9 319.3 438.3 315.2C442.8 311.0 449.7 305.2 455.0 300.2C460.3 295.1 463.9 287.3 470.0 285.0Z" fill="#80ff00" stroke="#80ff00" stroke-width="22.0" stroke-linejoin="round"/><ellipse cx="436.2" cy="290.2" rx="30.5" ry="16.0" transform="rotate(-37.9 436.2 290.2)" fill="#80ff00"/><path d="M525.0 379.0C524.0 375.0 524.8 369.1 524.2 366.0C523.7 362.9 523.0 361.8 521.7 360.5C520.4 359.2 517.9 359.1 516.5 358.3C515.1 357.5 513.3 355.5 513.3 355.5C513.3 355.5 513.4 352.8 514.5 351.5C515.6 350.2 517.8 348.8 520.0 347.5C522.2 346.2 525.2 345.2 528.0 344.0C530.8 342.8 534.0 341.2 537.0 340.0C540.0 338.8 543.0 337.5 546.0 336.5C549.0 335.5 551.3 334.4 555.0 334.2C558.7 334.0 563.8 334.2 568.3 335.2C572.8 336.2 577.5 338.1 581.7 340.2C585.9 342.3 589.7 344.8 593.3 347.7C596.9 350.6 600.8 354.1 603.3 357.7C605.8 361.3 607.0 365.7 608.3 369.3C609.5 372.9 610.8 376.0 610.8 379.3C610.8 382.6 610.1 385.9 608.3 389.3C606.5 392.8 603.4 397.1 600.0 400.0C596.6 402.9 592.7 405.3 588.0 407.0C583.3 408.7 577.5 409.8 572.0 410.0C566.5 410.2 560.3 409.5 555.0 408.0C549.7 406.5 544.2 404.0 540.0 401.0C535.8 398.0 532.5 393.7 530.0 390.0C527.5 386.3 526.0 383.0 525.0 379.0Z" fill="#80ff00" stroke="#80ff00" stroke-width="22.0" stroke-linejoin="round"/><path d="M738.3 304.3C737.3 298.4 734.4 305.7 732.2 306.8C729.9 307.9 726.9 309.5 725.0 311.0C723.1 312.5 721.1 314.3 720.8 316.0C720.6 317.7 722.1 319.3 723.3 321.0C724.6 322.7 727.1 324.1 728.3 326.0C729.6 327.9 730.2 330.2 730.8 332.7C731.5 335.2 730.9 339.3 732.2 341.0C733.4 342.7 737.3 348.8 738.3 342.7C739.4 336.6 739.4 310.3 738.3 304.3Z" fill="#80ff00" stroke="#80ff00" stroke-width="24.0" stroke-linejoin="round"/></g><g transform="rotate(180 494.5 389.0)"><path d="M368.3 180.3C372.5 180.5 377.9 180.9 381.7 182.8C385.4 184.8 388.7 188.2 390.8 192.0C393.0 195.8 394.7 201.2 394.7 205.3C394.7 209.5 393.0 213.7 390.8 217.0C388.7 220.3 385.1 223.5 381.7 225.3C378.2 227.1 374.2 227.8 370.0 227.8C365.8 227.9 360.7 227.2 356.7 225.7C352.6 224.1 348.6 221.6 345.8 218.7C343.1 215.7 340.7 211.7 340.0 207.8C339.3 203.9 340.3 198.8 341.7 195.3C343.1 191.9 345.8 189.2 348.3 187.0C350.8 184.8 353.3 183.1 356.7 182.0C360.0 180.9 364.2 180.2 368.3 180.3Z" fill="#80ff00" stroke="#80ff00" stroke-width="30.0" stroke-linejoin="round"/><path d="M301.7 175.3C295.0 176.3 313.6 179.9 318.3 181.2C323.1 182.4 326.9 181.6 330.0 182.8C333.1 184.1 335.3 186.6 336.7 188.7C338.1 190.8 336.4 195.6 338.3 195.3C340.3 195.1 345.0 190.3 348.3 187.0C351.7 183.7 366.1 177.3 358.3 175.3C350.6 173.4 308.3 174.4 301.7 175.3Z" fill="#80ff00" stroke="#80ff00" stroke-width="24.0" stroke-linejoin="round"/><path d="M290.8 175.3C285.3 176.9 299.9 182.4 305.0 184.5C310.1 186.6 317.8 186.6 321.7 187.8C325.6 189.1 327.1 189.9 328.3 192.0C329.6 194.1 329.7 197.4 329.2 200.3C328.6 203.2 324.9 206.2 325.0 209.5C325.1 212.8 328.1 218.2 330.0 220.3C331.9 222.4 335.3 229.5 336.7 222.0C338.1 214.5 346.0 183.1 338.3 175.3C330.7 167.6 296.4 173.8 290.8 175.3Z" fill="#80ff00" stroke="#80ff00" stroke-width="12.0" stroke-linejoin="round"/><path d="M314.2 229.1C317.2 229.2 321.4 229.3 324.2 230.8C327.0 232.3 329.6 235.5 330.9 238.0C332.2 240.5 332.4 243.2 332.2 245.8C332.0 248.4 331.1 251.4 329.8 253.6C328.5 255.8 326.8 257.8 324.2 259.1C321.6 260.4 317.7 261.5 314.2 261.6C310.7 261.7 306.2 261.0 303.1 259.7C300.0 258.4 297.1 255.9 295.3 253.6C293.5 251.3 292.5 248.2 292.2 245.8C291.9 243.4 292.6 241.1 293.7 239.1C294.8 237.1 296.6 235.1 298.7 233.6C300.8 232.1 303.8 230.8 306.4 230.0C309.0 229.2 311.2 229.0 314.2 229.1Z" fill="#80ff00" stroke="#80ff00" stroke-width="42.0" stroke-linejoin="round"/><path d="M250.0 193.7C251.9 190.8 259.0 193.9 261.3 194.5C263.7 195.1 263.5 195.8 264.2 197.0C264.8 198.2 265.4 200.1 265.3 201.7C265.2 203.2 264.3 204.9 263.7 206.2C263.0 207.5 263.6 208.5 261.3 209.5C259.1 210.5 251.9 214.6 250.0 212.0C248.1 209.4 248.1 196.6 250.0 193.7Z" fill="#80ff00" stroke="#80ff00" stroke-width="29.0" stroke-linejoin="round"/><path d="M423.0 225.3C428.0 225.6 434.0 227.2 438.0 229.5C442.0 231.8 445.2 236.1 447.0 239.0C448.8 241.9 449.1 244.3 449.0 247.0C448.9 249.7 449.0 252.2 446.7 255.3C444.4 258.4 439.4 263.1 435.0 265.3C430.6 267.5 424.5 268.7 420.0 268.7C415.5 268.7 411.3 267.3 408.0 265.5C404.7 263.7 401.8 261.1 400.0 258.0C398.2 254.9 397.2 250.7 397.0 247.0C396.8 243.3 397.2 239.2 399.0 236.0C400.8 232.8 404.0 229.8 408.0 228.0C412.0 226.2 418.0 225.1 423.0 225.3Z" fill="#80ff00" stroke="#80ff00" stroke-width="36.0" stroke-linejoin="round"/><path d="M395.0 188.7C395.0 182.3 370.3 177.6 395.0 175.3C419.7 173.1 517.9 172.3 543.3 175.3C568.8 178.4 546.9 188.7 547.5 193.7C548.1 198.7 547.9 200.9 546.7 205.3C545.4 209.8 542.8 215.9 540.0 220.3C537.2 224.8 533.3 228.4 530.0 232.0C526.7 235.6 523.6 238.9 520.0 242.0C516.4 245.1 512.5 248.4 508.3 250.3C504.2 252.3 500.0 253.4 495.0 253.7C490.0 253.9 483.3 253.1 478.3 252.0C473.3 250.9 468.9 249.2 465.0 247.0C461.1 244.8 457.2 242.8 455.0 238.7C452.8 234.5 454.4 225.3 451.7 222.0C448.9 218.7 443.3 219.5 438.3 218.7C433.3 217.8 427.2 217.0 421.7 217.0C416.1 217.0 409.4 219.2 405.0 218.7C400.6 218.1 396.7 218.7 395.0 213.7C393.3 208.7 395.0 195.1 395.0 188.7Z" fill="#80ff00"/><path d="M408.3 172.0C403.8 172.8 407.2 175.6 408.3 177.0C409.4 178.4 412.8 179.8 415.0 180.7C417.2 181.5 419.2 182.0 421.7 182.0C424.2 182.0 427.6 181.5 430.0 180.7C432.4 179.8 434.9 178.4 435.8 177.0C436.8 175.6 440.4 172.8 435.8 172.0C431.2 171.2 412.9 171.2 408.3 172.0Z" fill="#80ff00" stroke="#80ff00" stroke-width="28.0" stroke-linejoin="round"/><path d="M555.0 235.8C551.4 236.6 547.2 239.3 543.3 242.0C539.4 244.7 534.6 248.7 531.7 252.0C528.8 255.3 526.9 258.1 525.8 262.0C524.7 265.9 525.0 271.3 525.0 275.3C525.0 279.3 525.0 282.6 525.5 286.0C526.0 289.4 526.4 292.7 528.3 296.0C530.2 299.3 533.6 303.2 536.7 306.0C539.8 308.8 543.7 311.0 546.7 312.7C549.8 314.4 552.2 315.7 555.0 316.0C557.8 316.3 560.5 314.4 563.3 314.3C566.1 314.2 568.9 314.9 571.7 315.2C574.5 315.5 577.2 316.6 580.0 316.0C582.8 315.4 585.0 313.8 588.3 311.8C591.6 309.9 596.7 306.9 600.0 304.3C603.3 301.7 606.4 299.2 608.3 296.0C610.2 292.8 610.7 288.4 611.5 285.0C612.3 281.6 612.8 278.7 613.2 275.5C613.6 272.3 614.3 268.9 614.0 266.0C613.7 263.1 612.7 260.5 611.5 258.0C610.3 255.5 609.2 253.7 606.7 251.0C604.2 248.3 600.3 244.5 596.7 242.0C593.1 239.5 588.9 237.3 585.0 236.2C581.1 235.1 576.6 235.2 573.3 235.3C570.0 235.4 568.0 236.9 565.0 237.0C562.0 237.1 558.6 235.0 555.0 235.8Z" fill="#80ff00" stroke="#80ff00" stroke-width="22.0" stroke-linejoin="round"/><path d="M625.5 262.0C625.5 262.0 631.0 254.1 634.0 251.0C637.0 247.9 639.8 246.0 643.3 243.7C646.8 241.4 651.9 238.5 655.0 237.0C658.1 235.5 660.1 234.2 661.7 234.5C663.3 234.8 664.5 236.9 664.5 238.7C664.5 240.4 662.9 243.3 662.0 245.0C661.1 246.7 659.2 249.0 659.2 249.0C659.2 249.0 666.8 247.0 671.7 245.3C676.7 243.6 685.4 239.7 688.9 238.6C692.4 237.5 691.5 238.2 693.0 238.8C694.5 239.5 695.7 240.6 698.0 242.5C700.3 244.4 704.1 247.9 706.7 250.4C709.3 252.9 711.8 255.3 713.8 257.6C715.8 259.9 717.9 261.6 719.0 264.0C720.1 266.4 720.1 269.2 720.5 272.0C720.9 274.8 721.5 278.0 721.3 280.7C721.1 283.4 720.5 285.8 719.5 288.0C718.5 290.2 717.4 291.8 715.5 294.0C713.6 296.2 711.7 297.9 708.3 301.0C704.9 304.1 698.9 309.5 695.0 312.7C691.1 315.9 687.8 318.5 685.0 320.2C682.2 321.9 680.5 322.6 678.3 322.7C676.1 322.8 675.0 322.2 671.7 321.0C668.4 319.8 662.5 317.6 658.3 315.2C654.1 312.8 650.3 310.0 646.7 306.8C643.1 303.6 639.1 299.5 636.7 296.0C634.3 292.5 632.9 288.9 632.5 286.0C632.1 283.1 633.4 281.0 634.2 278.7C635.0 276.4 636.5 273.9 637.5 272.0C638.5 270.1 640.0 267.3 640.0 267.3C640.0 267.3 635.7 269.6 633.3 268.7C630.9 267.8 625.5 262.0 625.5 262.0Z" fill="#80ff00" stroke="#80ff00" stroke-width="22.0" stroke-linejoin="round"/><path d="M696.7 165.0C696.7 165.0 691.5 180.0 690.0 185.3C688.5 190.6 687.4 192.8 687.5 197.0C687.6 201.2 689.0 206.3 690.8 210.3C692.6 214.3 695.1 218.3 698.3 221.2C701.5 224.1 706.1 226.3 710.0 227.8C713.9 229.3 718.0 229.7 721.7 230.3C725.4 230.9 727.3 231.0 732.0 231.2C736.7 231.4 750.0 231.5 750.0 231.5C750.0 231.5 750.0 165.0 750.0 165.0C750.0 165.0 696.7 165.0 696.7 165.0Z" fill="#80ff00" stroke="#80ff00" stroke-width="23.4" stroke-linejoin="round"/><path d="M688.3 217.0C689.4 215.9 690.3 219.8 693.3 222.0C696.4 224.2 702.8 228.4 706.7 230.3C710.6 232.3 716.7 231.7 716.7 233.7C716.7 235.6 709.4 241.3 706.7 242.0C703.9 242.7 702.6 238.7 700.0 237.8C697.4 237.0 694.2 236.9 690.8 237.0C687.5 237.1 680.7 240.1 680.0 238.7C679.3 237.3 685.3 232.3 686.7 228.7C688.1 225.1 687.2 218.1 688.3 217.0Z" fill="#80ff00" stroke="#80ff00" stroke-width="10.0" stroke-linejoin="round"/><path d="M666.7 228.7C668.2 225.9 672.2 222.6 675.0 222.0C677.8 221.4 681.4 223.1 683.3 225.3C685.3 227.6 688.3 232.3 686.7 235.3C685.0 238.4 677.2 242.0 673.3 243.7C669.4 245.3 664.6 246.2 663.3 245.3C662.1 244.5 665.3 241.4 665.8 238.7C666.4 235.9 665.1 231.4 666.7 228.7Z" fill="#80ff00"/><path d="M250.0 290.2C251.9 278.4 257.7 290.4 261.3 291.0C264.9 291.6 267.7 292.2 271.7 293.5C275.6 294.8 280.8 296.1 285.0 298.5C289.2 300.9 293.6 304.2 296.7 307.7C299.7 311.1 302.1 315.7 303.3 319.3C304.6 322.9 304.7 325.4 304.2 329.3C303.6 333.2 301.8 338.5 300.0 342.7C298.2 346.8 295.6 351.8 293.3 354.3C291.1 356.8 289.7 356.8 286.7 357.7C283.6 358.5 279.2 358.8 275.0 359.3C270.8 359.9 265.5 360.6 261.3 361.0C257.2 361.4 251.9 373.6 250.0 361.8C248.1 350.0 248.1 302.0 250.0 290.2Z" fill="#80ff00" stroke="#80ff00" stroke-width="22.0" stroke-linejoin="round"/><path d="M288.3 357.7C289.2 355.7 295.6 354.9 298.3 352.7C301.1 350.4 303.2 344.3 305.0 344.3C306.8 344.3 306.4 350.0 309.2 352.7C311.9 355.3 322.4 358.6 321.7 360.2C321.0 361.7 309.7 361.1 305.0 361.8C300.3 362.5 296.1 365.0 293.3 364.3C290.6 363.6 287.5 359.6 288.3 357.7Z" fill="#80ff00" stroke="#80ff00" stroke-width="8.0" stroke-linejoin="round"/><path d="M271.7 400.0C272.0 395.0 274.2 390.3 276.7 386.0C279.2 381.7 282.8 377.6 286.7 374.3C290.6 371.0 295.6 367.7 300.0 366.0C304.4 364.3 308.9 364.3 313.3 364.3C317.8 364.3 322.2 364.9 326.7 366.0C331.1 367.1 336.1 368.8 340.0 371.0C343.9 373.2 347.2 376.2 350.0 379.3C352.8 382.4 355.1 385.9 356.7 389.3C358.3 392.8 359.2 396.6 359.5 400.0C359.8 403.4 359.9 406.5 358.7 410.0C357.5 413.5 355.6 417.3 352.5 421.0C349.4 424.7 344.6 429.1 340.0 432.2C335.4 435.3 330.0 437.9 325.0 439.7C320.0 441.5 314.2 442.8 310.0 443.0C305.8 443.2 304.2 443.0 300.0 441.0C295.8 439.0 289.2 435.2 285.0 431.0C280.8 426.8 277.2 421.2 275.0 416.0C272.8 410.8 271.4 405.0 271.7 400.0Z" fill="#80ff00" stroke="#80ff00" stroke-width="22.0" stroke-linejoin="round"/><path d="M470.0 285.0C476.1 282.7 485.8 285.2 491.7 286.5C497.5 287.8 501.1 290.2 505.0 292.7C508.9 295.1 512.4 297.7 515.0 301.0C517.6 304.3 519.4 309.3 520.3 312.7C521.3 316.0 521.9 317.9 520.8 321.0C519.8 324.1 517.4 327.1 514.2 331.0C511.0 334.9 506.0 340.0 501.7 344.3C497.4 348.6 492.2 353.9 488.3 356.8C484.4 359.8 483.1 361.3 478.3 361.8C473.6 362.4 465.3 360.9 460.0 360.2C454.7 359.5 450.6 359.5 446.7 357.7C442.8 355.9 439.4 352.9 436.7 349.3C433.9 345.7 431.4 340.0 430.0 336.0C428.6 332.0 426.9 328.6 428.3 325.2C429.7 321.7 433.9 319.3 438.3 315.2C442.8 311.0 449.7 305.2 455.0 300.2C460.3 295.1 463.9 287.3 470.0 285.0Z" fill="#80ff00" stroke="#80ff00" stroke-width="22.0" stroke-linejoin="round"/><ellipse cx="436.2" cy="290.2" rx="30.5" ry="16.0" transform="rotate(-37.9 436.2 290.2)" fill="#80ff00"/><path d="M525.0 379.0C524.0 375.0 524.8 369.1 524.2 366.0C523.7 362.9 523.0 361.8 521.7 360.5C520.4 359.2 517.9 359.1 516.5 358.3C515.1 357.5 513.3 355.5 513.3 355.5C513.3 355.5 513.4 352.8 514.5 351.5C515.6 350.2 517.8 348.8 520.0 347.5C522.2 346.2 525.2 345.2 528.0 344.0C530.8 342.8 534.0 341.2 537.0 340.0C540.0 338.8 543.0 337.5 546.0 336.5C549.0 335.5 551.3 334.4 555.0 334.2C558.7 334.0 563.8 334.2 568.3 335.2C572.8 336.2 577.5 338.1 581.7 340.2C585.9 342.3 589.7 344.8 593.3 347.7C596.9 350.6 600.8 354.1 603.3 357.7C605.8 361.3 607.0 365.7 608.3 369.3C609.5 372.9 610.8 376.0 610.8 379.3C610.8 382.6 610.1 385.9 608.3 389.3C606.5 392.8 603.4 397.1 600.0 400.0C596.6 402.9 592.7 405.3 588.0 407.0C583.3 408.7 577.5 409.8 572.0 410.0C566.5 410.2 560.3 409.5 555.0 408.0C549.7 406.5 544.2 404.0 540.0 401.0C535.8 398.0 532.5 393.7 530.0 390.0C527.5 386.3 526.0 383.0 525.0 379.0Z" fill="#80ff00" stroke="#80ff00" stroke-width="22.0" stroke-linejoin="round"/><path d="M738.3 304.3C737.3 298.4 734.4 305.7 732.2 306.8C729.9 307.9 726.9 309.5 725.0 311.0C723.1 312.5 721.1 314.3 720.8 316.0C720.6 317.7 722.1 319.3 723.3 321.0C724.6 322.7 727.1 324.1 728.3 326.0C729.6 327.9 730.2 330.2 730.8 332.7C731.5 335.2 730.9 339.3 732.2 341.0C733.4 342.7 737.3 348.8 738.3 342.7C739.4 336.6 739.4 310.3 738.3 304.3Z" fill="#80ff00" stroke="#80ff00" stroke-width="24.0" stroke-linejoin="round"/></g>
<g><path d="M258.3 262.0C260.0 258.1 265.6 262.0 268.3 263.7C271.1 265.3 273.8 269.5 275.0 272.0C276.2 274.5 276.4 276.7 275.8 278.7C275.3 280.6 274.6 282.3 271.7 283.7C268.8 285.1 260.6 290.6 258.3 287.0C256.1 283.4 256.7 265.9 258.3 262.0Z" fill="#00ff55"/><path d="M736.7 238.7C735.4 234.4 730.8 240.9 729.2 242.8C727.6 244.8 727.1 247.4 727.0 250.3C726.9 253.2 727.3 257.4 728.3 260.3C729.4 263.2 731.9 266.4 733.3 267.8C734.7 269.2 736.1 273.5 736.7 268.7C737.2 263.8 737.9 243.0 736.7 238.7Z" fill="#00ff55" stroke="#00ff55" stroke-width="18.0" stroke-linejoin="round"/><path d="M434.7 309.2 L461.3 286.8" stroke="#00ff55" stroke-width="15.6" stroke-linecap="round" fill="none"/><path d="M492.7 357.0 L512.3 340.0" stroke="#00ff55" stroke-width="15.4" stroke-linecap="round" fill="none"/><path d="M475.5 369.5L517 369.5Q521 369.7 521.3 374L522.3 399.5Q522.3 405.5 518 405.5L477 405.5Q471.5 405.3 471.3 399.5L470.8 375Q471 369.7 475.5 369.5Z" fill="#00ff55" stroke="#00ff55" stroke-width="19.0" stroke-linejoin="round"/><path d="M623.3 297.7C625.8 297.9 629.7 297.9 633.3 300.2C636.9 302.4 641.9 307.5 645.0 311.0C648.1 314.5 650.7 318.2 651.7 321.0C652.6 323.8 652.5 324.9 650.8 327.7C649.2 330.4 645.1 334.3 641.7 337.7C638.2 341.0 633.1 345.6 630.0 347.7C626.9 349.8 625.6 350.2 623.3 350.2C621.1 350.2 619.7 349.8 616.7 347.7C613.6 345.6 608.3 340.7 605.0 337.7C601.7 334.6 598.3 332.0 596.7 329.3C595.0 326.7 594.4 324.6 595.0 321.8C595.6 319.1 597.2 315.9 600.0 312.7C602.8 309.5 608.6 305.0 611.7 302.7C614.7 300.3 616.4 299.3 618.3 298.5C620.3 297.7 620.8 297.4 623.3 297.7Z" fill="#00ff55" stroke="#00ff55" stroke-width="22.0" stroke-linejoin="round"/><path d="M456.7 262.0C457.5 257.8 458.6 255.9 461.7 253.7C464.7 251.4 470.0 249.9 475.0 248.7C480.0 247.4 486.7 247.8 491.7 246.2C496.7 244.5 500.6 240.1 505.0 238.7C509.4 237.3 514.7 237.0 518.3 237.8C521.9 238.7 525.1 240.8 526.7 243.7C528.2 246.6 527.5 250.6 527.5 255.3C527.5 260.1 527.4 266.4 526.7 272.0C526.0 277.6 534.2 285.9 523.3 288.7C512.5 291.4 472.8 290.3 461.7 288.7C450.6 287.0 457.5 283.1 456.7 278.7C455.8 274.2 455.8 266.2 456.7 262.0Z" fill="#00ff55"/><path d="M471.1 261.6C472.4 261.9 476.3 266.6 477.8 269.3C479.3 272.1 481.1 276.0 480.0 278.2C478.9 280.4 474.1 281.6 471.1 282.7C468.1 283.8 464.4 284.0 462.2 284.9C460.0 285.8 459.3 287.7 457.8 288.2C456.3 288.8 452.6 289.5 453.3 288.2C454.1 286.9 459.6 282.9 462.2 280.4C464.8 278.0 467.6 276.0 468.9 273.8C470.2 271.6 469.6 269.1 470.0 267.1C470.4 265.1 469.8 261.2 471.1 261.6Z" fill="#00ff55" stroke="#00ff55" stroke-width="10.0" stroke-linejoin="round"/><path d="M251.7 366.8C253.3 358.5 258.8 367.5 261.3 367.7C263.8 367.8 265.1 366.8 266.7 367.7C268.2 368.5 270.3 370.4 270.8 372.7C271.4 374.9 270.6 377.7 270.0 381.0C269.4 384.3 268.0 389.3 267.0 392.7C266.0 396.0 265.0 398.2 264.2 401.0C263.3 403.8 262.7 406.6 262.0 409.3C261.3 412.1 261.7 416.3 260.0 417.7C258.3 419.1 253.1 426.1 251.7 417.7C250.3 409.2 250.1 375.2 251.7 366.8Z" fill="#00ff55" stroke="#00ff55" stroke-width="20.0" stroke-linejoin="round"/><path d="M600.0 201.2C601.7 199.1 605.8 195.5 610.0 193.7C614.2 191.9 620.8 190.6 625.0 190.3C629.2 190.1 632.2 191.3 635.0 192.0C637.8 192.7 641.9 193.1 641.7 194.5C641.4 195.9 636.9 198.5 633.3 200.3C629.7 202.1 623.9 203.5 620.0 205.3C616.1 207.1 612.8 210.2 610.0 211.2C607.2 212.1 605.1 212.0 603.3 211.2C601.6 210.3 600.2 207.8 599.7 206.2C599.1 204.5 598.3 203.2 600.0 201.2Z" fill="#00ff55"/><path d="M619.2 238.7C620.0 236.3 622.4 232.0 625.0 228.7C627.6 225.3 631.4 221.9 635.0 218.7C638.6 215.5 643.3 211.6 646.7 209.5C650.0 207.4 652.9 206.2 655.0 206.2C657.1 206.2 658.9 207.7 659.2 209.5C659.4 211.3 659.0 214.1 656.7 217.0C654.3 219.9 648.9 223.7 645.0 227.0C641.1 230.3 636.7 234.2 633.3 237.0C630.0 239.8 627.2 242.7 625.0 243.7C622.8 244.6 621.0 243.7 620.0 242.8C619.0 242.0 618.3 241.0 619.2 238.7Z" fill="#00ff55"/><path d="M621.7 184.5C622.2 183.4 624.7 182.0 626.7 182.0C628.6 182.0 631.9 183.5 633.3 184.5C634.7 185.5 635.6 186.9 635.0 187.8C634.4 188.8 631.9 189.9 630.0 190.0C628.1 190.1 624.7 189.2 623.3 188.3C621.9 187.4 621.1 185.6 621.7 184.5Z" fill="#00ff55"/><path d="M576.7 175.3C580.8 173.8 604.7 173.9 610.0 175.3C615.3 176.7 610.0 182.4 608.3 183.7C606.7 184.9 602.9 182.3 600.0 182.8C597.1 183.4 593.3 186.7 590.8 187.0C588.3 187.3 587.4 186.4 585.0 184.5C582.6 182.6 572.5 176.9 576.7 175.3Z" fill="#00ff55"/><path d="M349.2 314.3C349.7 312.0 351.2 308.6 353.3 306.8C355.4 305.0 358.6 303.8 361.7 303.5C364.7 303.2 368.3 305.3 371.7 305.2C375.0 305.0 378.1 304.2 381.7 302.7C385.3 301.1 389.4 298.2 393.3 296.0C397.2 293.8 402.2 290.2 405.0 289.3C407.8 288.5 410.0 289.9 410.0 291.0C410.0 292.1 407.5 293.5 405.0 296.0C402.5 298.5 398.1 302.4 395.0 306.0C391.9 309.6 388.6 314.1 386.7 317.7C384.7 321.3 385.0 324.9 383.3 327.7C381.7 330.4 379.7 333.4 376.7 334.3C373.6 335.3 368.6 334.6 365.0 333.5C361.4 332.4 357.5 329.8 355.0 327.7C352.5 325.6 351.0 323.2 350.0 321.0C349.0 318.8 348.6 316.7 349.2 314.3Z" fill="#00ff55"/></g><g transform="rotate(180 496.8 387.5)"><path d="M258.3 262.0C260.0 258.1 265.6 262.0 268.3 263.7C271.1 265.3 273.8 269.5 275.0 272.0C276.2 274.5 276.4 276.7 275.8 278.7C275.3 280.6 274.6 282.3 271.7 283.7C268.8 285.1 260.6 290.6 258.3 287.0C256.1 283.4 256.7 265.9 258.3 262.0Z" fill="#00ff55"/><path d="M736.7 238.7C735.4 234.4 730.8 240.9 729.2 242.8C727.6 244.8 727.1 247.4 727.0 250.3C726.9 253.2 727.3 257.4 728.3 260.3C729.4 263.2 731.9 266.4 733.3 267.8C734.7 269.2 736.1 273.5 736.7 268.7C737.2 263.8 737.9 243.0 736.7 238.7Z" fill="#00ff55" stroke="#00ff55" stroke-width="18.0" stroke-linejoin="round"/><path d="M434.7 309.2 L461.3 286.8" stroke="#00ff55" stroke-width="15.6" stroke-linecap="round" fill="none"/><path d="M492.7 357.0 L512.3 340.0" stroke="#00ff55" stroke-width="15.4" stroke-linecap="round" fill="none"/><path d="M475.5 369.5L517 369.5Q521 369.7 521.3 374L522.3 399.5Q522.3 405.5 518 405.5L477 405.5Q471.5 405.3 471.3 399.5L470.8 375Q471 369.7 475.5 369.5Z" fill="#00ff55" stroke="#00ff55" stroke-width="19.0" stroke-linejoin="round"/><path d="M623.3 297.7C625.8 297.9 629.7 297.9 633.3 300.2C636.9 302.4 641.9 307.5 645.0 311.0C648.1 314.5 650.7 318.2 651.7 321.0C652.6 323.8 652.5 324.9 650.8 327.7C649.2 330.4 645.1 334.3 641.7 337.7C638.2 341.0 633.1 345.6 630.0 347.7C626.9 349.8 625.6 350.2 623.3 350.2C621.1 350.2 619.7 349.8 616.7 347.7C613.6 345.6 608.3 340.7 605.0 337.7C601.7 334.6 598.3 332.0 596.7 329.3C595.0 326.7 594.4 324.6 595.0 321.8C595.6 319.1 597.2 315.9 600.0 312.7C602.8 309.5 608.6 305.0 611.7 302.7C614.7 300.3 616.4 299.3 618.3 298.5C620.3 297.7 620.8 297.4 623.3 297.7Z" fill="#00ff55" stroke="#00ff55" stroke-width="22.0" stroke-linejoin="round"/><path d="M456.7 262.0C457.5 257.8 458.6 255.9 461.7 253.7C464.7 251.4 470.0 249.9 475.0 248.7C480.0 247.4 486.7 247.8 491.7 246.2C496.7 244.5 500.6 240.1 505.0 238.7C509.4 237.3 514.7 237.0 518.3 237.8C521.9 238.7 525.1 240.8 526.7 243.7C528.2 246.6 527.5 250.6 527.5 255.3C527.5 260.1 527.4 266.4 526.7 272.0C526.0 277.6 534.2 285.9 523.3 288.7C512.5 291.4 472.8 290.3 461.7 288.7C450.6 287.0 457.5 283.1 456.7 278.7C455.8 274.2 455.8 266.2 456.7 262.0Z" fill="#00ff55"/><path d="M471.1 261.6C472.4 261.9 476.3 266.6 477.8 269.3C479.3 272.1 481.1 276.0 480.0 278.2C478.9 280.4 474.1 281.6 471.1 282.7C468.1 283.8 464.4 284.0 462.2 284.9C460.0 285.8 459.3 287.7 457.8 288.2C456.3 288.8 452.6 289.5 453.3 288.2C454.1 286.9 459.6 282.9 462.2 280.4C464.8 278.0 467.6 276.0 468.9 273.8C470.2 271.6 469.6 269.1 470.0 267.1C470.4 265.1 469.8 261.2 471.1 261.6Z" fill="#00ff55" stroke="#00ff55" stroke-width="10.0" stroke-linejoin="round"/><path d="M251.7 366.8C253.3 358.5 258.8 367.5 261.3 367.7C263.8 367.8 265.1 366.8 266.7 367.7C268.2 368.5 270.3 370.4 270.8 372.7C271.4 374.9 270.6 377.7 270.0 381.0C269.4 384.3 268.0 389.3 267.0 392.7C266.0 396.0 265.0 398.2 264.2 401.0C263.3 403.8 262.7 406.6 262.0 409.3C261.3 412.1 261.7 416.3 260.0 417.7C258.3 419.1 253.1 426.1 251.7 417.7C250.3 409.2 250.1 375.2 251.7 366.8Z" fill="#00ff55" stroke="#00ff55" stroke-width="20.0" stroke-linejoin="round"/><path d="M600.0 201.2C601.7 199.1 605.8 195.5 610.0 193.7C614.2 191.9 620.8 190.6 625.0 190.3C629.2 190.1 632.2 191.3 635.0 192.0C637.8 192.7 641.9 193.1 641.7 194.5C641.4 195.9 636.9 198.5 633.3 200.3C629.7 202.1 623.9 203.5 620.0 205.3C616.1 207.1 612.8 210.2 610.0 211.2C607.2 212.1 605.1 212.0 603.3 211.2C601.6 210.3 600.2 207.8 599.7 206.2C599.1 204.5 598.3 203.2 600.0 201.2Z" fill="#00ff55"/><path d="M619.2 238.7C620.0 236.3 622.4 232.0 625.0 228.7C627.6 225.3 631.4 221.9 635.0 218.7C638.6 215.5 643.3 211.6 646.7 209.5C650.0 207.4 652.9 206.2 655.0 206.2C657.1 206.2 658.9 207.7 659.2 209.5C659.4 211.3 659.0 214.1 656.7 217.0C654.3 219.9 648.9 223.7 645.0 227.0C641.1 230.3 636.7 234.2 633.3 237.0C630.0 239.8 627.2 242.7 625.0 243.7C622.8 244.6 621.0 243.7 620.0 242.8C619.0 242.0 618.3 241.0 619.2 238.7Z" fill="#00ff55"/><path d="M621.7 184.5C622.2 183.4 624.7 182.0 626.7 182.0C628.6 182.0 631.9 183.5 633.3 184.5C634.7 185.5 635.6 186.9 635.0 187.8C634.4 188.8 631.9 189.9 630.0 190.0C628.1 190.1 624.7 189.2 623.3 188.3C621.9 187.4 621.1 185.6 621.7 184.5Z" fill="#00ff55"/><path d="M576.7 175.3C580.8 173.8 604.7 173.9 610.0 175.3C615.3 176.7 610.0 182.4 608.3 183.7C606.7 184.9 602.9 182.3 600.0 182.8C597.1 183.4 593.3 186.7 590.8 187.0C588.3 187.3 587.4 186.4 585.0 184.5C582.6 182.6 572.5 176.9 576.7 175.3Z" fill="#00ff55"/><path d="M349.2 314.3C349.7 312.0 351.2 308.6 353.3 306.8C355.4 305.0 358.6 303.8 361.7 303.5C364.7 303.2 368.3 305.3 371.7 305.2C375.0 305.0 378.1 304.2 381.7 302.7C385.3 301.1 389.4 298.2 393.3 296.0C397.2 293.8 402.2 290.2 405.0 289.3C407.8 288.5 410.0 289.9 410.0 291.0C410.0 292.1 407.5 293.5 405.0 296.0C402.5 298.5 398.1 302.4 395.0 306.0C391.9 309.6 388.6 314.1 386.7 317.7C384.7 321.3 385.0 324.9 383.3 327.7C381.7 330.4 379.7 333.4 376.7 334.3C373.6 335.3 368.6 334.6 365.0 333.5C361.4 332.4 357.5 329.8 355.0 327.7C352.5 325.6 351.0 323.2 350.0 321.0C349.0 318.8 348.6 316.7 349.2 314.3Z" fill="#00ff55"/></g>
<g><path d="M412.5 202.8C413.1 201.3 414.3 198.4 418.3 197.0C422.4 195.6 431.4 195.5 436.7 194.5C441.9 193.5 445.8 193.0 450.0 191.2C454.2 189.4 458.9 186.3 461.7 183.7C464.4 181.0 462.1 176.7 466.7 175.3C471.2 173.9 486.4 173.4 489.2 175.3C491.9 177.3 485.7 183.4 483.3 187.0C481.0 190.6 478.6 193.7 475.0 197.0C471.4 200.3 465.8 204.6 461.7 207.0C457.5 209.4 455.6 211.0 450.0 211.2C444.4 211.3 434.2 208.7 428.3 207.8C422.5 207.0 417.6 207.0 415.0 206.2C412.4 205.3 411.9 204.4 412.5 202.8Z" fill="#00ff00"/></g><g transform="rotate(180 496.8 387.5)"><path d="M412.5 202.8C413.1 201.3 414.3 198.4 418.3 197.0C422.4 195.6 431.4 195.5 436.7 194.5C441.9 193.5 445.8 193.0 450.0 191.2C454.2 189.4 458.9 186.3 461.7 183.7C464.4 181.0 462.1 176.7 466.7 175.3C471.2 173.9 486.4 173.4 489.2 175.3C491.9 177.3 485.7 183.4 483.3 187.0C481.0 190.6 478.6 193.7 475.0 197.0C471.4 200.3 465.8 204.6 461.7 207.0C457.5 209.4 455.6 211.0 450.0 211.2C444.4 211.3 434.2 208.7 428.3 207.8C422.5 207.0 417.6 207.0 415.0 206.2C412.4 205.3 411.9 204.4 412.5 202.8Z" fill="#00ff00"/></g>
<g><path d="M368.3 180.3C372.5 180.5 377.9 180.9 381.7 182.8C385.4 184.8 388.7 188.2 390.8 192.0C393.0 195.8 394.7 201.2 394.7 205.3C394.7 209.5 393.0 213.7 390.8 217.0C388.7 220.3 385.1 223.5 381.7 225.3C378.2 227.1 374.2 227.8 370.0 227.8C365.8 227.9 360.7 227.2 356.7 225.7C352.6 224.1 348.6 221.6 345.8 218.7C343.1 215.7 340.7 211.7 340.0 207.8C339.3 203.9 340.3 198.8 341.7 195.3C343.1 191.9 345.8 189.2 348.3 187.0C350.8 184.8 353.3 183.1 356.7 182.0C360.0 180.9 364.2 180.2 368.3 180.3Z" fill="#ffff00" stroke="#ffff00" stroke-width="20.0" stroke-linejoin="round"/><path d="M301.7 175.3C295.0 176.3 313.6 179.9 318.3 181.2C323.1 182.4 326.9 181.6 330.0 182.8C333.1 184.1 335.3 186.6 336.7 188.7C338.1 190.8 336.4 195.6 338.3 195.3C340.3 195.1 345.0 190.3 348.3 187.0C351.7 183.7 366.1 177.3 358.3 175.3C350.6 173.4 308.3 174.4 301.7 175.3Z" fill="#ffff00" stroke="#ffff00" stroke-width="12.0" stroke-linejoin="round"/><path d="M290.8 175.3C285.3 176.9 299.9 182.4 305.0 184.5C310.1 186.6 317.8 186.6 321.7 187.8C325.6 189.1 327.1 189.9 328.3 192.0C329.6 194.1 329.7 197.4 329.2 200.3C328.6 203.2 324.9 206.2 325.0 209.5C325.1 212.8 328.1 218.2 330.0 220.3C331.9 222.4 335.3 229.5 336.7 222.0C338.1 214.5 346.0 183.1 338.3 175.3C330.7 167.6 296.4 173.8 290.8 175.3Z" fill="#ffff00"/><path d="M314.2 229.1C317.2 229.2 321.4 229.3 324.2 230.8C327.0 232.3 329.6 235.5 330.9 238.0C332.2 240.5 332.4 243.2 332.2 245.8C332.0 248.4 331.1 251.4 329.8 253.6C328.5 255.8 326.8 257.8 324.2 259.1C321.6 260.4 317.7 261.5 314.2 261.6C310.7 261.7 306.2 261.0 303.1 259.7C300.0 258.4 297.1 255.9 295.3 253.6C293.5 251.3 292.5 248.2 292.2 245.8C291.9 243.4 292.6 241.1 293.7 239.1C294.8 237.1 296.6 235.1 298.7 233.6C300.8 232.1 303.8 230.8 306.4 230.0C309.0 229.2 311.2 229.0 314.2 229.1Z" fill="#ffff00" stroke="#ffff00" stroke-width="30.0" stroke-linejoin="round"/><path d="M250.0 193.7C251.9 190.8 259.0 193.9 261.3 194.5C263.7 195.1 263.5 195.8 264.2 197.0C264.8 198.2 265.4 200.1 265.3 201.7C265.2 203.2 264.3 204.9 263.7 206.2C263.0 207.5 263.6 208.5 261.3 209.5C259.1 210.5 251.9 214.6 250.0 212.0C248.1 209.4 248.1 196.6 250.0 193.7Z" fill="#ffff00" stroke="#ffff00" stroke-width="16.8" stroke-linejoin="round"/><path d="M423.0 225.3C428.0 225.6 434.0 227.2 438.0 229.5C442.0 231.8 445.2 236.1 447.0 239.0C448.8 241.9 449.1 244.3 449.0 247.0C448.9 249.7 449.0 252.2 446.7 255.3C444.4 258.4 439.4 263.1 435.0 265.3C430.6 267.5 424.5 268.7 420.0 268.7C415.5 268.7 411.3 267.3 408.0 265.5C404.7 263.7 401.8 261.1 400.0 258.0C398.2 254.9 397.2 250.7 397.0 247.0C396.8 243.3 397.2 239.2 399.0 236.0C400.8 232.8 404.0 229.8 408.0 228.0C412.0 226.2 418.0 225.1 423.0 225.3Z" fill="#ffff00" stroke="#ffff00" stroke-width="28.0" stroke-linejoin="round"/><path d="M451.7 227.0C452.5 224.8 456.7 224.2 460.0 222.0C463.3 219.8 467.5 216.0 471.7 213.7C475.8 211.3 481.1 210.1 485.0 207.8C488.9 205.6 492.5 203.2 495.0 200.3C497.5 197.4 498.3 193.4 500.0 190.3C501.7 187.3 502.5 183.9 505.0 182.0C507.5 180.1 511.4 178.9 515.0 178.7C518.6 178.4 523.3 178.4 526.7 180.3C530.0 182.3 533.3 186.7 535.0 190.3C536.7 193.9 537.2 198.1 536.7 202.0C536.1 205.9 534.2 209.5 531.7 213.7C529.2 217.8 525.0 222.3 521.7 227.0C518.3 231.7 515.6 238.1 511.7 242.0C507.8 245.9 503.1 248.7 498.3 250.3C493.6 251.9 487.8 252.1 483.3 251.7C478.9 251.3 475.3 249.4 471.7 247.8C468.1 246.2 464.4 244.1 461.7 242.0C458.9 239.9 456.7 237.8 455.0 235.3C453.3 232.8 450.8 229.2 451.7 227.0Z" fill="#ffff00"/><path d="M395.6 178.1C397.0 177.6 400.7 183.9 405.6 185.3C410.4 186.8 419.1 186.8 424.4 187.0C429.8 187.2 434.8 187.1 437.8 186.4C440.7 185.8 441.3 184.5 442.2 183.1C443.1 181.7 442.1 178.9 443.3 178.1C444.5 177.3 448.7 177.1 449.4 178.1C450.2 179.1 449.0 182.5 447.8 184.2C446.6 186.0 445.7 187.5 442.2 188.7C438.7 189.9 431.5 190.9 426.7 191.4C421.9 192.0 417.1 191.8 413.3 192.0C409.5 192.2 405.6 191.1 403.9 192.6C402.1 194.0 402.8 198.0 402.8 200.9C402.8 203.8 402.1 207.5 403.9 209.8C405.6 212.1 409.5 213.9 413.3 214.8C417.1 215.6 422.2 214.5 426.7 214.8C431.1 215.1 435.9 215.6 440.0 216.4C444.1 217.3 447.6 218.5 451.1 219.8C454.6 221.1 460.0 221.8 461.1 224.2C462.2 226.6 460.2 234.2 457.8 234.2C455.4 234.2 451.3 226.6 446.7 224.2C442.0 221.8 435.0 220.3 430.0 219.8C425.0 219.2 421.3 220.5 416.7 220.9C412.0 221.3 405.6 222.7 402.2 222.0C398.9 221.3 397.4 220.1 396.7 216.4C395.9 212.7 397.8 204.4 397.8 199.8C397.8 195.1 397.0 192.3 396.7 188.7C396.3 185.1 394.1 178.7 395.6 178.1Z" fill="#ffff00"/><path d="M408.3 172.0C403.8 172.8 407.2 175.6 408.3 177.0C409.4 178.4 412.8 179.8 415.0 180.7C417.2 181.5 419.2 182.0 421.7 182.0C424.2 182.0 427.6 181.5 430.0 180.7C432.4 179.8 434.9 178.4 435.8 177.0C436.8 175.6 440.4 172.8 435.8 172.0C431.2 171.2 412.9 171.2 408.3 172.0Z" fill="#ffff00" stroke="#ffff00" stroke-width="18.0" stroke-linejoin="round"/><path d="M555.0 235.8C551.4 236.6 547.2 239.3 543.3 242.0C539.4 244.7 534.6 248.7 531.7 252.0C528.8 255.3 526.9 258.1 525.8 262.0C524.7 265.9 525.0 271.3 525.0 275.3C525.0 279.3 525.0 282.6 525.5 286.0C526.0 289.4 526.4 292.7 528.3 296.0C530.2 299.3 533.6 303.2 536.7 306.0C539.8 308.8 543.7 311.0 546.7 312.7C549.8 314.4 552.2 315.7 555.0 316.0C557.8 316.3 560.5 314.4 563.3 314.3C566.1 314.2 568.9 314.9 571.7 315.2C574.5 315.5 577.2 316.6 580.0 316.0C582.8 315.4 585.0 313.8 588.3 311.8C591.6 309.9 596.7 306.9 600.0 304.3C603.3 301.7 606.4 299.2 608.3 296.0C610.2 292.8 610.7 288.4 611.5 285.0C612.3 281.6 612.8 278.7 613.2 275.5C613.6 272.3 614.3 268.9 614.0 266.0C613.7 263.1 612.7 260.5 611.5 258.0C610.3 255.5 609.2 253.7 606.7 251.0C604.2 248.3 600.3 244.5 596.7 242.0C593.1 239.5 588.9 237.3 585.0 236.2C581.1 235.1 576.6 235.2 573.3 235.3C570.0 235.4 568.0 236.9 565.0 237.0C562.0 237.1 558.6 235.0 555.0 235.8Z" fill="#ffff00" stroke="#ffff00" stroke-width="12.0" stroke-linejoin="round"/><path d="M625.5 262.0C625.5 262.0 631.0 254.1 634.0 251.0C637.0 247.9 639.8 246.0 643.3 243.7C646.8 241.4 651.9 238.5 655.0 237.0C658.1 235.5 660.1 234.2 661.7 234.5C663.3 234.8 664.5 236.9 664.5 238.7C664.5 240.4 662.9 243.3 662.0 245.0C661.1 246.7 659.2 249.0 659.2 249.0C659.2 249.0 666.8 247.0 671.7 245.3C676.7 243.6 685.4 239.7 688.9 238.6C692.4 237.5 691.5 238.2 693.0 238.8C694.5 239.5 695.7 240.6 698.0 242.5C700.3 244.4 704.1 247.9 706.7 250.4C709.3 252.9 711.8 255.3 713.8 257.6C715.8 259.9 717.9 261.6 719.0 264.0C720.1 266.4 720.1 269.2 720.5 272.0C720.9 274.8 721.5 278.0 721.3 280.7C721.1 283.4 720.5 285.8 719.5 288.0C718.5 290.2 717.4 291.8 715.5 294.0C713.6 296.2 711.7 297.9 708.3 301.0C704.9 304.1 698.9 309.5 695.0 312.7C691.1 315.9 687.8 318.5 685.0 320.2C682.2 321.9 680.5 322.6 678.3 322.7C676.1 322.8 675.0 322.2 671.7 321.0C668.4 319.8 662.5 317.6 658.3 315.2C654.1 312.8 650.3 310.0 646.7 306.8C643.1 303.6 639.1 299.5 636.7 296.0C634.3 292.5 632.9 288.9 632.5 286.0C632.1 283.1 633.4 281.0 634.2 278.7C635.0 276.4 636.5 273.9 637.5 272.0C638.5 270.1 640.0 267.3 640.0 267.3C640.0 267.3 635.7 269.6 633.3 268.7C630.9 267.8 625.5 262.0 625.5 262.0Z" fill="#ffff00" stroke="#ffff00" stroke-width="12.0" stroke-linejoin="round"/><path d="M696.7 165.0C696.7 165.0 691.5 180.0 690.0 185.3C688.5 190.6 687.4 192.8 687.5 197.0C687.6 201.2 689.0 206.3 690.8 210.3C692.6 214.3 695.1 218.3 698.3 221.2C701.5 224.1 706.1 226.3 710.0 227.8C713.9 229.3 718.0 229.7 721.7 230.3C725.4 230.9 727.3 231.0 732.0 231.2C736.7 231.4 750.0 231.5 750.0 231.5C750.0 231.5 750.0 165.0 750.0 165.0C750.0 165.0 696.7 165.0 696.7 165.0Z" fill="#ffff00" stroke="#ffff00" stroke-width="12.4" stroke-linejoin="round"/><path d="M688.3 217.0C689.4 215.9 690.3 219.8 693.3 222.0C696.4 224.2 702.8 228.4 706.7 230.3C710.6 232.3 716.7 231.7 716.7 233.7C716.7 235.6 709.4 241.3 706.7 242.0C703.9 242.7 702.6 238.7 700.0 237.8C697.4 237.0 694.2 236.9 690.8 237.0C687.5 237.1 680.7 240.1 680.0 238.7C679.3 237.3 685.3 232.3 686.7 228.7C688.1 225.1 687.2 218.1 688.3 217.0Z" fill="#ffff00"/><path d="M250.0 290.2C251.9 278.4 257.7 290.4 261.3 291.0C264.9 291.6 267.7 292.2 271.7 293.5C275.6 294.8 280.8 296.1 285.0 298.5C289.2 300.9 293.6 304.2 296.7 307.7C299.7 311.1 302.1 315.7 303.3 319.3C304.6 322.9 304.7 325.4 304.2 329.3C303.6 333.2 301.8 338.5 300.0 342.7C298.2 346.8 295.6 351.8 293.3 354.3C291.1 356.8 289.7 356.8 286.7 357.7C283.6 358.5 279.2 358.8 275.0 359.3C270.8 359.9 265.5 360.6 261.3 361.0C257.2 361.4 251.9 373.6 250.0 361.8C248.1 350.0 248.1 302.0 250.0 290.2Z" fill="#ffff00" stroke="#ffff00" stroke-width="12.0" stroke-linejoin="round"/><path d="M288.3 357.7C289.2 355.7 295.6 354.9 298.3 352.7C301.1 350.4 303.2 344.3 305.0 344.3C306.8 344.3 306.4 350.0 309.2 352.7C311.9 355.3 322.4 358.6 321.7 360.2C321.0 361.7 309.7 361.1 305.0 361.8C300.3 362.5 296.1 365.0 293.3 364.3C290.6 363.6 287.5 359.6 288.3 357.7Z" fill="#ffff00"/><path d="M271.7 400.0C272.0 395.0 274.2 390.3 276.7 386.0C279.2 381.7 282.8 377.6 286.7 374.3C290.6 371.0 295.6 367.7 300.0 366.0C304.4 364.3 308.9 364.3 313.3 364.3C317.8 364.3 322.2 364.9 326.7 366.0C331.1 367.1 336.1 368.8 340.0 371.0C343.9 373.2 347.2 376.2 350.0 379.3C352.8 382.4 355.1 385.9 356.7 389.3C358.3 392.8 359.2 396.6 359.5 400.0C359.8 403.4 359.9 406.5 358.7 410.0C357.5 413.5 355.6 417.3 352.5 421.0C349.4 424.7 344.6 429.1 340.0 432.2C335.4 435.3 330.0 437.9 325.0 439.7C320.0 441.5 314.2 442.8 310.0 443.0C305.8 443.2 304.2 443.0 300.0 441.0C295.8 439.0 289.2 435.2 285.0 431.0C280.8 426.8 277.2 421.2 275.0 416.0C272.8 410.8 271.4 405.0 271.7 400.0Z" fill="#ffff00" stroke="#ffff00" stroke-width="12.0" stroke-linejoin="round"/><path d="M470.0 285.0C476.1 282.7 485.8 285.2 491.7 286.5C497.5 287.8 501.1 290.2 505.0 292.7C508.9 295.1 512.4 297.7 515.0 301.0C517.6 304.3 519.4 309.3 520.3 312.7C521.3 316.0 521.9 317.9 520.8 321.0C519.8 324.1 517.4 327.1 514.2 331.0C511.0 334.9 506.0 340.0 501.7 344.3C497.4 348.6 492.2 353.9 488.3 356.8C484.4 359.8 483.1 361.3 478.3 361.8C473.6 362.4 465.3 360.9 460.0 360.2C454.7 359.5 450.6 359.5 446.7 357.7C442.8 355.9 439.4 352.9 436.7 349.3C433.9 345.7 431.4 340.0 430.0 336.0C428.6 332.0 426.9 328.6 428.3 325.2C429.7 321.7 433.9 319.3 438.3 315.2C442.8 311.0 449.7 305.2 455.0 300.2C460.3 295.1 463.9 287.3 470.0 285.0Z" fill="#ffff00" stroke="#ffff00" stroke-width="12.0" stroke-linejoin="round"/><path d="M521.7 314.3C522.8 312.1 526.1 308.8 531.7 309.3C537.2 309.9 550.3 314.6 555.0 317.7C559.7 320.7 560.0 324.6 560.0 327.7C560.0 330.7 558.6 334.1 555.0 336.0C551.4 337.9 543.9 338.2 538.3 339.3C532.8 340.4 525.8 342.4 521.7 342.7C517.5 342.9 514.4 342.7 513.3 341.0C512.2 339.3 513.1 335.7 515.0 332.7C516.9 329.6 523.9 325.7 525.0 322.7C526.1 319.6 520.6 316.6 521.7 314.3Z" fill="#ffff00"/><ellipse cx="436.2" cy="290.2" rx="27.5" ry="13.0" transform="rotate(-37.9 436.2 290.2)" fill="#ffff00"/><path d="M525.0 379.0C524.0 375.0 524.8 369.1 524.2 366.0C523.7 362.9 523.0 361.8 521.7 360.5C520.4 359.2 517.9 359.1 516.5 358.3C515.1 357.5 513.3 355.5 513.3 355.5C513.3 355.5 513.4 352.8 514.5 351.5C515.6 350.2 517.8 348.8 520.0 347.5C522.2 346.2 525.2 345.2 528.0 344.0C530.8 342.8 534.0 341.2 537.0 340.0C540.0 338.8 543.0 337.5 546.0 336.5C549.0 335.5 551.3 334.4 555.0 334.2C558.7 334.0 563.8 334.2 568.3 335.2C572.8 336.2 577.5 338.1 581.7 340.2C585.9 342.3 589.7 344.8 593.3 347.7C596.9 350.6 600.8 354.1 603.3 357.7C605.8 361.3 607.0 365.7 608.3 369.3C609.5 372.9 610.8 376.0 610.8 379.3C610.8 382.6 610.1 385.9 608.3 389.3C606.5 392.8 603.4 397.1 600.0 400.0C596.6 402.9 592.7 405.3 588.0 407.0C583.3 408.7 577.5 409.8 572.0 410.0C566.5 410.2 560.3 409.5 555.0 408.0C549.7 406.5 544.2 404.0 540.0 401.0C535.8 398.0 532.5 393.7 530.0 390.0C527.5 386.3 526.0 383.0 525.0 379.0Z" fill="#ffff00" stroke="#ffff00" stroke-width="12.0" stroke-linejoin="round"/><path d="M555.0 316.0C556.7 313.8 561.4 317.1 565.0 317.7C568.6 318.2 572.8 319.3 576.7 319.3C580.6 319.3 585.6 316.3 588.3 317.7C591.1 319.1 594.7 324.6 593.3 327.7C591.9 330.7 584.2 335.2 580.0 336.0C575.8 336.8 572.5 333.5 568.3 332.7C564.2 331.8 557.2 333.8 555.0 331.0C552.8 328.2 553.3 318.2 555.0 316.0Z" fill="#ffff00"/><path d="M610.0 361.0C611.7 358.5 617.8 364.6 621.7 364.3C625.6 364.1 631.9 356.8 633.3 359.3C634.7 361.8 630.3 372.6 630.0 379.3C629.7 386.1 634.7 396.6 631.7 400.0C628.6 403.4 615.0 403.4 611.7 400.0C608.3 396.6 611.9 385.8 611.7 379.3C611.4 372.8 608.3 363.5 610.0 361.0Z" fill="#ffff00"/><path d="M663.3 319.3C666.9 318.6 673.3 325.4 678.3 325.2C683.3 324.9 689.7 317.2 693.3 317.7C696.9 318.1 702.5 325.3 700.0 327.7C697.5 330.0 685.6 331.6 678.3 331.8C671.1 332.1 659.2 331.4 656.7 329.3C654.2 327.2 659.7 320.0 663.3 319.3Z" fill="#ffff00"/><path d="M687.8 324.9C688.5 326.0 694.3 329.2 697.8 329.9C701.3 330.5 705.9 330.0 708.9 328.8C711.9 327.6 714.8 324.6 715.6 322.7C716.3 320.7 714.6 317.1 713.3 317.1C712.0 317.1 710.0 321.2 707.8 322.7C705.6 324.1 702.4 325.9 700.0 326.0C697.6 326.1 695.4 323.4 693.3 323.2C691.3 323.0 687.0 323.8 687.8 324.9Z" fill="#ffff00"/><path d="M738.3 304.3C737.3 298.4 734.4 305.7 732.2 306.8C729.9 307.9 726.9 309.5 725.0 311.0C723.1 312.5 721.1 314.3 720.8 316.0C720.6 317.7 722.1 319.3 723.3 321.0C724.6 322.7 727.1 324.1 728.3 326.0C729.6 327.9 730.2 330.2 730.8 332.7C731.5 335.2 730.9 339.3 732.2 341.0C733.4 342.7 737.3 348.8 738.3 342.7C739.4 336.6 739.4 310.3 738.3 304.3Z" fill="#ffff00" stroke="#ffff00" stroke-width="17.0" stroke-linejoin="round"/></g><g transform="rotate(180 494.5 389.0)"><path d="M368.3 180.3C372.5 180.5 377.9 180.9 381.7 182.8C385.4 184.8 388.7 188.2 390.8 192.0C393.0 195.8 394.7 201.2 394.7 205.3C394.7 209.5 393.0 213.7 390.8 217.0C388.7 220.3 385.1 223.5 381.7 225.3C378.2 227.1 374.2 227.8 370.0 227.8C365.8 227.9 360.7 227.2 356.7 225.7C352.6 224.1 348.6 221.6 345.8 218.7C343.1 215.7 340.7 211.7 340.0 207.8C339.3 203.9 340.3 198.8 341.7 195.3C343.1 191.9 345.8 189.2 348.3 187.0C350.8 184.8 353.3 183.1 356.7 182.0C360.0 180.9 364.2 180.2 368.3 180.3Z" fill="#ffff00" stroke="#ffff00" stroke-width="20.0" stroke-linejoin="round"/><path d="M301.7 175.3C295.0 176.3 313.6 179.9 318.3 181.2C323.1 182.4 326.9 181.6 330.0 182.8C333.1 184.1 335.3 186.6 336.7 188.7C338.1 190.8 336.4 195.6 338.3 195.3C340.3 195.1 345.0 190.3 348.3 187.0C351.7 183.7 366.1 177.3 358.3 175.3C350.6 173.4 308.3 174.4 301.7 175.3Z" fill="#ffff00" stroke="#ffff00" stroke-width="12.0" stroke-linejoin="round"/><path d="M290.8 175.3C285.3 176.9 299.9 182.4 305.0 184.5C310.1 186.6 317.8 186.6 321.7 187.8C325.6 189.1 327.1 189.9 328.3 192.0C329.6 194.1 329.7 197.4 329.2 200.3C328.6 203.2 324.9 206.2 325.0 209.5C325.1 212.8 328.1 218.2 330.0 220.3C331.9 222.4 335.3 229.5 336.7 222.0C338.1 214.5 346.0 183.1 338.3 175.3C330.7 167.6 296.4 173.8 290.8 175.3Z" fill="#ffff00"/><path d="M314.2 229.1C317.2 229.2 321.4 229.3 324.2 230.8C327.0 232.3 329.6 235.5 330.9 238.0C332.2 240.5 332.4 243.2 332.2 245.8C332.0 248.4 331.1 251.4 329.8 253.6C328.5 255.8 326.8 257.8 324.2 259.1C321.6 260.4 317.7 261.5 314.2 261.6C310.7 261.7 306.2 261.0 303.1 259.7C300.0 258.4 297.1 255.9 295.3 253.6C293.5 251.3 292.5 248.2 292.2 245.8C291.9 243.4 292.6 241.1 293.7 239.1C294.8 237.1 296.6 235.1 298.7 233.6C300.8 232.1 303.8 230.8 306.4 230.0C309.0 229.2 311.2 229.0 314.2 229.1Z" fill="#ffff00" stroke="#ffff00" stroke-width="30.0" stroke-linejoin="round"/><path d="M250.0 193.7C251.9 190.8 259.0 193.9 261.3 194.5C263.7 195.1 263.5 195.8 264.2 197.0C264.8 198.2 265.4 200.1 265.3 201.7C265.2 203.2 264.3 204.9 263.7 206.2C263.0 207.5 263.6 208.5 261.3 209.5C259.1 210.5 251.9 214.6 250.0 212.0C248.1 209.4 248.1 196.6 250.0 193.7Z" fill="#ffff00" stroke="#ffff00" stroke-width="16.8" stroke-linejoin="round"/><path d="M423.0 225.3C428.0 225.6 434.0 227.2 438.0 229.5C442.0 231.8 445.2 236.1 447.0 239.0C448.8 241.9 449.1 244.3 449.0 247.0C448.9 249.7 449.0 252.2 446.7 255.3C444.4 258.4 439.4 263.1 435.0 265.3C430.6 267.5 424.5 268.7 420.0 268.7C415.5 268.7 411.3 267.3 408.0 265.5C404.7 263.7 401.8 261.1 400.0 258.0C398.2 254.9 397.2 250.7 397.0 247.0C396.8 243.3 397.2 239.2 399.0 236.0C400.8 232.8 404.0 229.8 408.0 228.0C412.0 226.2 418.0 225.1 423.0 225.3Z" fill="#ffff00" stroke="#ffff00" stroke-width="28.0" stroke-linejoin="round"/><path d="M451.7 227.0C452.5 224.8 456.7 224.2 460.0 222.0C463.3 219.8 467.5 216.0 471.7 213.7C475.8 211.3 481.1 210.1 485.0 207.8C488.9 205.6 492.5 203.2 495.0 200.3C497.5 197.4 498.3 193.4 500.0 190.3C501.7 187.3 502.5 183.9 505.0 182.0C507.5 180.1 511.4 178.9 515.0 178.7C518.6 178.4 523.3 178.4 526.7 180.3C530.0 182.3 533.3 186.7 535.0 190.3C536.7 193.9 537.2 198.1 536.7 202.0C536.1 205.9 534.2 209.5 531.7 213.7C529.2 217.8 525.0 222.3 521.7 227.0C518.3 231.7 515.6 238.1 511.7 242.0C507.8 245.9 503.1 248.7 498.3 250.3C493.6 251.9 487.8 252.1 483.3 251.7C478.9 251.3 475.3 249.4 471.7 247.8C468.1 246.2 464.4 244.1 461.7 242.0C458.9 239.9 456.7 237.8 455.0 235.3C453.3 232.8 450.8 229.2 451.7 227.0Z" fill="#ffff00"/><path d="M395.6 178.1C397.0 177.6 400.7 183.9 405.6 185.3C410.4 186.8 419.1 186.8 424.4 187.0C429.8 187.2 434.8 187.1 437.8 186.4C440.7 185.8 441.3 184.5 442.2 183.1C443.1 181.7 442.1 178.9 443.3 178.1C444.5 177.3 448.7 177.1 449.4 178.1C450.2 179.1 449.0 182.5 447.8 184.2C446.6 186.0 445.7 187.5 442.2 188.7C438.7 189.9 431.5 190.9 426.7 191.4C421.9 192.0 417.1 191.8 413.3 192.0C409.5 192.2 405.6 191.1 403.9 192.6C402.1 194.0 402.8 198.0 402.8 200.9C402.8 203.8 402.1 207.5 403.9 209.8C405.6 212.1 409.5 213.9 413.3 214.8C417.1 215.6 422.2 214.5 426.7 214.8C431.1 215.1 435.9 215.6 440.0 216.4C444.1 217.3 447.6 218.5 451.1 219.8C454.6 221.1 460.0 221.8 461.1 224.2C462.2 226.6 460.2 234.2 457.8 234.2C455.4 234.2 451.3 226.6 446.7 224.2C442.0 221.8 435.0 220.3 430.0 219.8C425.0 219.2 421.3 220.5 416.7 220.9C412.0 221.3 405.6 222.7 402.2 222.0C398.9 221.3 397.4 220.1 396.7 216.4C395.9 212.7 397.8 204.4 397.8 199.8C397.8 195.1 397.0 192.3 396.7 188.7C396.3 185.1 394.1 178.7 395.6 178.1Z" fill="#ffff00"/><path d="M408.3 172.0C403.8 172.8 407.2 175.6 408.3 177.0C409.4 178.4 412.8 179.8 415.0 180.7C417.2 181.5 419.2 182.0 421.7 182.0C424.2 182.0 427.6 181.5 430.0 180.7C432.4 179.8 434.9 178.4 435.8 177.0C436.8 175.6 440.4 172.8 435.8 172.0C431.2 171.2 412.9 171.2 408.3 172.0Z" fill="#ffff00" stroke="#ffff00" stroke-width="18.0" stroke-linejoin="round"/><path d="M555.0 235.8C551.4 236.6 547.2 239.3 543.3 242.0C539.4 244.7 534.6 248.7 531.7 252.0C528.8 255.3 526.9 258.1 525.8 262.0C524.7 265.9 525.0 271.3 525.0 275.3C525.0 279.3 525.0 282.6 525.5 286.0C526.0 289.4 526.4 292.7 528.3 296.0C530.2 299.3 533.6 303.2 536.7 306.0C539.8 308.8 543.7 311.0 546.7 312.7C549.8 314.4 552.2 315.7 555.0 316.0C557.8 316.3 560.5 314.4 563.3 314.3C566.1 314.2 568.9 314.9 571.7 315.2C574.5 315.5 577.2 316.6 580.0 316.0C582.8 315.4 585.0 313.8 588.3 311.8C591.6 309.9 596.7 306.9 600.0 304.3C603.3 301.7 606.4 299.2 608.3 296.0C610.2 292.8 610.7 288.4 611.5 285.0C612.3 281.6 612.8 278.7 613.2 275.5C613.6 272.3 614.3 268.9 614.0 266.0C613.7 263.1 612.7 260.5 611.5 258.0C610.3 255.5 609.2 253.7 606.7 251.0C604.2 248.3 600.3 244.5 596.7 242.0C593.1 239.5 588.9 237.3 585.0 236.2C581.1 235.1 576.6 235.2 573.3 235.3C570.0 235.4 568.0 236.9 565.0 237.0C562.0 237.1 558.6 235.0 555.0 235.8Z" fill="#ffff00" stroke="#ffff00" stroke-width="12.0" stroke-linejoin="round"/><path d="M625.5 262.0C625.5 262.0 631.0 254.1 634.0 251.0C637.0 247.9 639.8 246.0 643.3 243.7C646.8 241.4 651.9 238.5 655.0 237.0C658.1 235.5 660.1 234.2 661.7 234.5C663.3 234.8 664.5 236.9 664.5 238.7C664.5 240.4 662.9 243.3 662.0 245.0C661.1 246.7 659.2 249.0 659.2 249.0C659.2 249.0 666.8 247.0 671.7 245.3C676.7 243.6 685.4 239.7 688.9 238.6C692.4 237.5 691.5 238.2 693.0 238.8C694.5 239.5 695.7 240.6 698.0 242.5C700.3 244.4 704.1 247.9 706.7 250.4C709.3 252.9 711.8 255.3 713.8 257.6C715.8 259.9 717.9 261.6 719.0 264.0C720.1 266.4 720.1 269.2 720.5 272.0C720.9 274.8 721.5 278.0 721.3 280.7C721.1 283.4 720.5 285.8 719.5 288.0C718.5 290.2 717.4 291.8 715.5 294.0C713.6 296.2 711.7 297.9 708.3 301.0C704.9 304.1 698.9 309.5 695.0 312.7C691.1 315.9 687.8 318.5 685.0 320.2C682.2 321.9 680.5 322.6 678.3 322.7C676.1 322.8 675.0 322.2 671.7 321.0C668.4 319.8 662.5 317.6 658.3 315.2C654.1 312.8 650.3 310.0 646.7 306.8C643.1 303.6 639.1 299.5 636.7 296.0C634.3 292.5 632.9 288.9 632.5 286.0C632.1 283.1 633.4 281.0 634.2 278.7C635.0 276.4 636.5 273.9 637.5 272.0C638.5 270.1 640.0 267.3 640.0 267.3C640.0 267.3 635.7 269.6 633.3 268.7C630.9 267.8 625.5 262.0 625.5 262.0Z" fill="#ffff00" stroke="#ffff00" stroke-width="12.0" stroke-linejoin="round"/><path d="M696.7 165.0C696.7 165.0 691.5 180.0 690.0 185.3C688.5 190.6 687.4 192.8 687.5 197.0C687.6 201.2 689.0 206.3 690.8 210.3C692.6 214.3 695.1 218.3 698.3 221.2C701.5 224.1 706.1 226.3 710.0 227.8C713.9 229.3 718.0 229.7 721.7 230.3C725.4 230.9 727.3 231.0 732.0 231.2C736.7 231.4 750.0 231.5 750.0 231.5C750.0 231.5 750.0 165.0 750.0 165.0C750.0 165.0 696.7 165.0 696.7 165.0Z" fill="#ffff00" stroke="#ffff00" stroke-width="12.4" stroke-linejoin="round"/><path d="M688.3 217.0C689.4 215.9 690.3 219.8 693.3 222.0C696.4 224.2 702.8 228.4 706.7 230.3C710.6 232.3 716.7 231.7 716.7 233.7C716.7 235.6 709.4 241.3 706.7 242.0C703.9 242.7 702.6 238.7 700.0 237.8C697.4 237.0 694.2 236.9 690.8 237.0C687.5 237.1 680.7 240.1 680.0 238.7C679.3 237.3 685.3 232.3 686.7 228.7C688.1 225.1 687.2 218.1 688.3 217.0Z" fill="#ffff00"/><path d="M250.0 290.2C251.9 278.4 257.7 290.4 261.3 291.0C264.9 291.6 267.7 292.2 271.7 293.5C275.6 294.8 280.8 296.1 285.0 298.5C289.2 300.9 293.6 304.2 296.7 307.7C299.7 311.1 302.1 315.7 303.3 319.3C304.6 322.9 304.7 325.4 304.2 329.3C303.6 333.2 301.8 338.5 300.0 342.7C298.2 346.8 295.6 351.8 293.3 354.3C291.1 356.8 289.7 356.8 286.7 357.7C283.6 358.5 279.2 358.8 275.0 359.3C270.8 359.9 265.5 360.6 261.3 361.0C257.2 361.4 251.9 373.6 250.0 361.8C248.1 350.0 248.1 302.0 250.0 290.2Z" fill="#ffff00" stroke="#ffff00" stroke-width="12.0" stroke-linejoin="round"/><path d="M288.3 357.7C289.2 355.7 295.6 354.9 298.3 352.7C301.1 350.4 303.2 344.3 305.0 344.3C306.8 344.3 306.4 350.0 309.2 352.7C311.9 355.3 322.4 358.6 321.7 360.2C321.0 361.7 309.7 361.1 305.0 361.8C300.3 362.5 296.1 365.0 293.3 364.3C290.6 363.6 287.5 359.6 288.3 357.7Z" fill="#ffff00"/><path d="M271.7 400.0C272.0 395.0 274.2 390.3 276.7 386.0C279.2 381.7 282.8 377.6 286.7 374.3C290.6 371.0 295.6 367.7 300.0 366.0C304.4 364.3 308.9 364.3 313.3 364.3C317.8 364.3 322.2 364.9 326.7 366.0C331.1 367.1 336.1 368.8 340.0 371.0C343.9 373.2 347.2 376.2 350.0 379.3C352.8 382.4 355.1 385.9 356.7 389.3C358.3 392.8 359.2 396.6 359.5 400.0C359.8 403.4 359.9 406.5 358.7 410.0C357.5 413.5 355.6 417.3 352.5 421.0C349.4 424.7 344.6 429.1 340.0 432.2C335.4 435.3 330.0 437.9 325.0 439.7C320.0 441.5 314.2 442.8 310.0 443.0C305.8 443.2 304.2 443.0 300.0 441.0C295.8 439.0 289.2 435.2 285.0 431.0C280.8 426.8 277.2 421.2 275.0 416.0C272.8 410.8 271.4 405.0 271.7 400.0Z" fill="#ffff00" stroke="#ffff00" stroke-width="12.0" stroke-linejoin="round"/><path d="M470.0 285.0C476.1 282.7 485.8 285.2 491.7 286.5C497.5 287.8 501.1 290.2 505.0 292.7C508.9 295.1 512.4 297.7 515.0 301.0C517.6 304.3 519.4 309.3 520.3 312.7C521.3 316.0 521.9 317.9 520.8 321.0C519.8 324.1 517.4 327.1 514.2 331.0C511.0 334.9 506.0 340.0 501.7 344.3C497.4 348.6 492.2 353.9 488.3 356.8C484.4 359.8 483.1 361.3 478.3 361.8C473.6 362.4 465.3 360.9 460.0 360.2C454.7 359.5 450.6 359.5 446.7 357.7C442.8 355.9 439.4 352.9 436.7 349.3C433.9 345.7 431.4 340.0 430.0 336.0C428.6 332.0 426.9 328.6 428.3 325.2C429.7 321.7 433.9 319.3 438.3 315.2C442.8 311.0 449.7 305.2 455.0 300.2C460.3 295.1 463.9 287.3 470.0 285.0Z" fill="#ffff00" stroke="#ffff00" stroke-width="12.0" stroke-linejoin="round"/><path d="M521.7 314.3C522.8 312.1 526.1 308.8 531.7 309.3C537.2 309.9 550.3 314.6 555.0 317.7C559.7 320.7 560.0 324.6 560.0 327.7C560.0 330.7 558.6 334.1 555.0 336.0C551.4 337.9 543.9 338.2 538.3 339.3C532.8 340.4 525.8 342.4 521.7 342.7C517.5 342.9 514.4 342.7 513.3 341.0C512.2 339.3 513.1 335.7 515.0 332.7C516.9 329.6 523.9 325.7 525.0 322.7C526.1 319.6 520.6 316.6 521.7 314.3Z" fill="#ffff00"/><ellipse cx="436.2" cy="290.2" rx="27.5" ry="13.0" transform="rotate(-37.9 436.2 290.2)" fill="#ffff00"/><path d="M525.0 379.0C524.0 375.0 524.8 369.1 524.2 366.0C523.7 362.9 523.0 361.8 521.7 360.5C520.4 359.2 517.9 359.1 516.5 358.3C515.1 357.5 513.3 355.5 513.3 355.5C513.3 355.5 513.4 352.8 514.5 351.5C515.6 350.2 517.8 348.8 520.0 347.5C522.2 346.2 525.2 345.2 528.0 344.0C530.8 342.8 534.0 341.2 537.0 340.0C540.0 338.8 543.0 337.5 546.0 336.5C549.0 335.5 551.3 334.4 555.0 334.2C558.7 334.0 563.8 334.2 568.3 335.2C572.8 336.2 577.5 338.1 581.7 340.2C585.9 342.3 589.7 344.8 593.3 347.7C596.9 350.6 600.8 354.1 603.3 357.7C605.8 361.3 607.0 365.7 608.3 369.3C609.5 372.9 610.8 376.0 610.8 379.3C610.8 382.6 610.1 385.9 608.3 389.3C606.5 392.8 603.4 397.1 600.0 400.0C596.6 402.9 592.7 405.3 588.0 407.0C583.3 408.7 577.5 409.8 572.0 410.0C566.5 410.2 560.3 409.5 555.0 408.0C549.7 406.5 544.2 404.0 540.0 401.0C535.8 398.0 532.5 393.7 530.0 390.0C527.5 386.3 526.0 383.0 525.0 379.0Z" fill="#ffff00" stroke="#ffff00" stroke-width="12.0" stroke-linejoin="round"/><path d="M555.0 316.0C556.7 313.8 561.4 317.1 565.0 317.7C568.6 318.2 572.8 319.3 576.7 319.3C580.6 319.3 585.6 316.3 588.3 317.7C591.1 319.1 594.7 324.6 593.3 327.7C591.9 330.7 584.2 335.2 580.0 336.0C575.8 336.8 572.5 333.5 568.3 332.7C564.2 331.8 557.2 333.8 555.0 331.0C552.8 328.2 553.3 318.2 555.0 316.0Z" fill="#ffff00"/><path d="M610.0 361.0C611.7 358.5 617.8 364.6 621.7 364.3C625.6 364.1 631.9 356.8 633.3 359.3C634.7 361.8 630.3 372.6 630.0 379.3C629.7 386.1 634.7 396.6 631.7 400.0C628.6 403.4 615.0 403.4 611.7 400.0C608.3 396.6 611.9 385.8 611.7 379.3C611.4 372.8 608.3 363.5 610.0 361.0Z" fill="#ffff00"/><path d="M663.3 319.3C666.9 318.6 673.3 325.4 678.3 325.2C683.3 324.9 689.7 317.2 693.3 317.7C696.9 318.1 702.5 325.3 700.0 327.7C697.5 330.0 685.6 331.6 678.3 331.8C671.1 332.1 659.2 331.4 656.7 329.3C654.2 327.2 659.7 320.0 663.3 319.3Z" fill="#ffff00"/><path d="M687.8 324.9C688.5 326.0 694.3 329.2 697.8 329.9C701.3 330.5 705.9 330.0 708.9 328.8C711.9 327.6 714.8 324.6 715.6 322.7C716.3 320.7 714.6 317.1 713.3 317.1C712.0 317.1 710.0 321.2 707.8 322.7C705.6 324.1 702.4 325.9 700.0 326.0C697.6 326.1 695.4 323.4 693.3 323.2C691.3 323.0 687.0 323.8 687.8 324.9Z" fill="#ffff00"/><path d="M738.3 304.3C737.3 298.4 734.4 305.7 732.2 306.8C729.9 307.9 726.9 309.5 725.0 311.0C723.1 312.5 721.1 314.3 720.8 316.0C720.6 317.7 722.1 319.3 723.3 321.0C724.6 322.7 727.1 324.1 728.3 326.0C729.6 327.9 730.2 330.2 730.8 332.7C731.5 335.2 730.9 339.3 732.2 341.0C733.4 342.7 737.3 348.8 738.3 342.7C739.4 336.6 739.4 310.3 738.3 304.3Z" fill="#ffff00" stroke="#ffff00" stroke-width="17.0" stroke-linejoin="round"/></g>
<g><path d="M736.7 238.7C735.4 234.4 730.8 240.9 729.2 242.8C727.6 244.8 727.1 247.4 727.0 250.3C726.9 253.2 727.3 257.4 728.3 260.3C729.4 263.2 731.9 266.4 733.3 267.8C734.7 269.2 736.1 273.5 736.7 268.7C737.2 263.8 737.9 243.0 736.7 238.7Z" fill="#00ffaa" stroke="#00ffaa" stroke-width="12.0" stroke-linejoin="round"/><path d="M434.7 309.2 L461.3 286.8" stroke="#00ffaa" stroke-width="13.2" stroke-linecap="round" fill="none"/><path d="M492.7 357.0 L512.3 340.0" stroke="#00ffaa" stroke-width="13.0" stroke-linecap="round" fill="none"/><path d="M475.5 369.5L517 369.5Q521 369.7 521.3 374L522.3 399.5Q522.3 405.5 518 405.5L477 405.5Q471.5 405.3 471.3 399.5L470.8 375Q471 369.7 475.5 369.5Z" fill="#00ffaa" stroke="#00ffaa" stroke-width="14.0" stroke-linejoin="round"/><path d="M623.3 297.7C625.8 297.9 629.7 297.9 633.3 300.2C636.9 302.4 641.9 307.5 645.0 311.0C648.1 314.5 650.7 318.2 651.7 321.0C652.6 323.8 652.5 324.9 650.8 327.7C649.2 330.4 645.1 334.3 641.7 337.7C638.2 341.0 633.1 345.6 630.0 347.7C626.9 349.8 625.6 350.2 623.3 350.2C621.1 350.2 619.7 349.8 616.7 347.7C613.6 345.6 608.3 340.7 605.0 337.7C601.7 334.6 598.3 332.0 596.7 329.3C595.0 326.7 594.4 324.6 595.0 321.8C595.6 319.1 597.2 315.9 600.0 312.7C602.8 309.5 608.6 305.0 611.7 302.7C614.7 300.3 616.4 299.3 618.3 298.5C620.3 297.7 620.8 297.4 623.3 297.7Z" fill="#00ffaa" stroke="#00ffaa" stroke-width="16.0" stroke-linejoin="round"/><path d="M463.3 263.7C464.2 259.9 465.3 258.1 468.3 256.2C471.4 254.2 476.7 253.4 481.7 252.0C486.7 250.6 493.9 249.5 498.3 247.8C502.8 246.2 505.0 243.0 508.3 242.0C511.7 241.0 515.7 240.6 518.3 242.0C521.0 243.4 523.2 246.4 524.2 250.3C525.1 254.2 524.6 260.3 524.2 265.3C523.8 270.3 522.6 276.4 521.7 280.3C520.7 284.2 527.5 287.3 518.3 288.7C509.2 290.1 475.8 290.3 466.7 288.7C457.5 287.0 463.9 282.8 463.3 278.7C462.8 274.5 462.5 267.4 463.3 263.7Z" fill="#00ffaa"/><path d="M471.1 261.6C472.4 261.9 476.3 266.6 477.8 269.3C479.3 272.1 481.1 276.0 480.0 278.2C478.9 280.4 474.1 281.6 471.1 282.7C468.1 283.8 464.4 284.0 462.2 284.9C460.0 285.8 459.3 287.7 457.8 288.2C456.3 288.8 452.6 289.5 453.3 288.2C454.1 286.9 459.6 282.9 462.2 280.4C464.8 278.0 467.6 276.0 468.9 273.8C470.2 271.6 469.6 269.1 470.0 267.1C470.4 265.1 469.8 261.2 471.1 261.6Z" fill="#00ffaa" stroke="#00ffaa" stroke-width="5.0" stroke-linejoin="round"/><path d="M251.7 366.8C253.3 358.5 258.8 367.5 261.3 367.7C263.8 367.8 265.1 366.8 266.7 367.7C268.2 368.5 270.3 370.4 270.8 372.7C271.4 374.9 270.6 377.7 270.0 381.0C269.4 384.3 268.0 389.3 267.0 392.7C266.0 396.0 265.0 398.2 264.2 401.0C263.3 403.8 262.7 406.6 262.0 409.3C261.3 412.1 261.7 416.3 260.0 417.7C258.3 419.1 253.1 426.1 251.7 417.7C250.3 409.2 250.1 375.2 251.7 366.8Z" fill="#00ffaa" stroke="#00ffaa" stroke-width="14.0" stroke-linejoin="round"/></g><g transform="rotate(180 496.8 387.5)"><path d="M736.7 238.7C735.4 234.4 730.8 240.9 729.2 242.8C727.6 244.8 727.1 247.4 727.0 250.3C726.9 253.2 727.3 257.4 728.3 260.3C729.4 263.2 731.9 266.4 733.3 267.8C734.7 269.2 736.1 273.5 736.7 268.7C737.2 263.8 737.9 243.0 736.7 238.7Z" fill="#00ffaa" stroke="#00ffaa" stroke-width="12.0" stroke-linejoin="round"/><path d="M434.7 309.2 L461.3 286.8" stroke="#00ffaa" stroke-width="13.2" stroke-linecap="round" fill="none"/><path d="M492.7 357.0 L512.3 340.0" stroke="#00ffaa" stroke-width="13.0" stroke-linecap="round" fill="none"/><path d="M475.5 369.5L517 369.5Q521 369.7 521.3 374L522.3 399.5Q522.3 405.5 518 405.5L477 405.5Q471.5 405.3 471.3 399.5L470.8 375Q471 369.7 475.5 369.5Z" fill="#00ffaa" stroke="#00ffaa" stroke-width="14.0" stroke-linejoin="round"/><path d="M623.3 297.7C625.8 297.9 629.7 297.9 633.3 300.2C636.9 302.4 641.9 307.5 645.0 311.0C648.1 314.5 650.7 318.2 651.7 321.0C652.6 323.8 652.5 324.9 650.8 327.7C649.2 330.4 645.1 334.3 641.7 337.7C638.2 341.0 633.1 345.6 630.0 347.7C626.9 349.8 625.6 350.2 623.3 350.2C621.1 350.2 619.7 349.8 616.7 347.7C613.6 345.6 608.3 340.7 605.0 337.7C601.7 334.6 598.3 332.0 596.7 329.3C595.0 326.7 594.4 324.6 595.0 321.8C595.6 319.1 597.2 315.9 600.0 312.7C602.8 309.5 608.6 305.0 611.7 302.7C614.7 300.3 616.4 299.3 618.3 298.5C620.3 297.7 620.8 297.4 623.3 297.7Z" fill="#00ffaa" stroke="#00ffaa" stroke-width="16.0" stroke-linejoin="round"/><path d="M463.3 263.7C464.2 259.9 465.3 258.1 468.3 256.2C471.4 254.2 476.7 253.4 481.7 252.0C486.7 250.6 493.9 249.5 498.3 247.8C502.8 246.2 505.0 243.0 508.3 242.0C511.7 241.0 515.7 240.6 518.3 242.0C521.0 243.4 523.2 246.4 524.2 250.3C525.1 254.2 524.6 260.3 524.2 265.3C523.8 270.3 522.6 276.4 521.7 280.3C520.7 284.2 527.5 287.3 518.3 288.7C509.2 290.1 475.8 290.3 466.7 288.7C457.5 287.0 463.9 282.8 463.3 278.7C462.8 274.5 462.5 267.4 463.3 263.7Z" fill="#00ffaa"/><path d="M471.1 261.6C472.4 261.9 476.3 266.6 477.8 269.3C479.3 272.1 481.1 276.0 480.0 278.2C478.9 280.4 474.1 281.6 471.1 282.7C468.1 283.8 464.4 284.0 462.2 284.9C460.0 285.8 459.3 287.7 457.8 288.2C456.3 288.8 452.6 289.5 453.3 288.2C454.1 286.9 459.6 282.9 462.2 280.4C464.8 278.0 467.6 276.0 468.9 273.8C470.2 271.6 469.6 269.1 470.0 267.1C470.4 265.1 469.8 261.2 471.1 261.6Z" fill="#00ffaa" stroke="#00ffaa" stroke-width="5.0" stroke-linejoin="round"/><path d="M251.7 366.8C253.3 358.5 258.8 367.5 261.3 367.7C263.8 367.8 265.1 366.8 266.7 367.7C268.2 368.5 270.3 370.4 270.8 372.7C271.4 374.9 270.6 377.7 270.0 381.0C269.4 384.3 268.0 389.3 267.0 392.7C266.0 396.0 265.0 398.2 264.2 401.0C263.3 403.8 262.7 406.6 262.0 409.3C261.3 412.1 261.7 416.3 260.0 417.7C258.3 419.1 253.1 426.1 251.7 417.7C250.3 409.2 250.1 375.2 251.7 366.8Z" fill="#00ffaa" stroke="#00ffaa" stroke-width="14.0" stroke-linejoin="round"/></g>
<g><path d="M531.7 319.3C534.4 317.9 540.6 316.8 543.3 317.7C546.1 318.5 548.6 322.1 548.3 324.3C548.1 326.6 544.7 329.6 541.7 331.0C538.6 332.4 532.5 333.5 530.0 332.7C527.5 331.8 526.4 328.2 526.7 326.0C526.9 323.8 528.9 320.7 531.7 319.3Z" fill="#80ff00"/><path d="M618.3 379.3C618.8 376.6 620.6 376.0 621.7 376.0C622.8 376.0 624.6 376.6 625.0 379.3C625.4 382.1 624.7 389.2 624.2 392.7C623.6 396.1 622.5 400.0 621.7 400.0C620.8 400.0 619.7 396.1 619.2 392.7C618.6 389.2 617.9 382.1 618.3 379.3Z" fill="#80ff00"/></g><g transform="rotate(180 494.5 389.0)"><path d="M531.7 319.3C534.4 317.9 540.6 316.8 543.3 317.7C546.1 318.5 548.6 322.1 548.3 324.3C548.1 326.6 544.7 329.6 541.7 331.0C538.6 332.4 532.5 333.5 530.0 332.7C527.5 331.8 526.4 328.2 526.7 326.0C526.9 323.8 528.9 320.7 531.7 319.3Z" fill="#80ff00"/><path d="M618.3 379.3C618.8 376.6 620.6 376.0 621.7 376.0C622.8 376.0 624.6 376.6 625.0 379.3C625.4 382.1 624.7 389.2 624.2 392.7C623.6 396.1 622.5 400.0 621.7 400.0C620.8 400.0 619.7 396.1 619.2 392.7C618.6 389.2 617.9 382.1 618.3 379.3Z" fill="#80ff00"/></g>
<g><ellipse cx="710.3" cy="305.6" rx="15.8" ry="7.0" transform="rotate(-40.0 710.3 305.6)" fill="#00ff55"/></g><g transform="rotate(180 496.8 387.5)"><ellipse cx="710.3" cy="305.6" rx="15.8" ry="7.0" transform="rotate(-40.0 710.3 305.6)" fill="#00ff55"/></g>
<g><path d="M368.3 180.3C372.5 180.5 377.9 180.9 381.7 182.8C385.4 184.8 388.7 188.2 390.8 192.0C393.0 195.8 394.7 201.2 394.7 205.3C394.7 209.5 393.0 213.7 390.8 217.0C388.7 220.3 385.1 223.5 381.7 225.3C378.2 227.1 374.2 227.8 370.0 227.8C365.8 227.9 360.7 227.2 356.7 225.7C352.6 224.1 348.6 221.6 345.8 218.7C343.1 215.7 340.7 211.7 340.0 207.8C339.3 203.9 340.3 198.8 341.7 195.3C343.1 191.9 345.8 189.2 348.3 187.0C350.8 184.8 353.3 183.1 356.7 182.0C360.0 180.9 364.2 180.2 368.3 180.3Z" fill="#ff8000" stroke="#ff8000" stroke-width="9.0" stroke-linejoin="round"/><path d="M301.7 175.3C295.0 176.3 313.6 179.9 318.3 181.2C323.1 182.4 326.9 181.6 330.0 182.8C333.1 184.1 335.3 186.6 336.7 188.7C338.1 190.8 336.4 195.6 338.3 195.3C340.3 195.1 345.0 190.3 348.3 187.0C351.7 183.7 366.1 177.3 358.3 175.3C350.6 173.4 308.3 174.4 301.7 175.3Z" fill="#ff8000"/><path d="M326.7 182.0C324.9 182.3 335.1 185.9 336.7 188.7C338.2 191.4 336.2 195.1 335.8 198.7C335.5 202.3 335.2 206.6 334.7 210.3C334.1 214.1 331.9 218.1 332.5 221.2C333.1 224.2 335.7 226.9 338.3 228.7C341.0 230.5 345.6 232.3 348.3 232.0C351.1 231.7 355.6 228.9 355.0 227.0C354.4 225.1 347.6 223.5 345.0 220.3C342.4 217.1 339.9 212.0 339.2 207.8C338.5 203.7 339.4 198.8 340.8 195.3C342.2 191.9 349.9 189.2 347.5 187.0C345.1 184.8 328.5 181.7 326.7 182.0Z" fill="#ff8000"/><path d="M388.3 222.0C390.0 219.2 394.7 212.0 396.7 212.0C398.6 212.0 399.7 218.7 400.0 222.0C400.3 225.3 399.7 230.1 398.3 232.0C396.9 233.9 393.6 234.2 391.7 233.7C389.7 233.1 387.2 230.6 386.7 228.7C386.1 226.7 386.7 224.8 388.3 222.0Z" fill="#ff8000"/><path d="M314.2 229.1C317.2 229.2 321.4 229.3 324.2 230.8C327.0 232.3 329.6 235.5 330.9 238.0C332.2 240.5 332.4 243.2 332.2 245.8C332.0 248.4 331.1 251.4 329.8 253.6C328.5 255.8 326.8 257.8 324.2 259.1C321.6 260.4 317.7 261.5 314.2 261.6C310.7 261.7 306.2 261.0 303.1 259.7C300.0 258.4 297.1 255.9 295.3 253.6C293.5 251.3 292.5 248.2 292.2 245.8C291.9 243.4 292.6 241.1 293.7 239.1C294.8 237.1 296.6 235.1 298.7 233.6C300.8 232.1 303.8 230.8 306.4 230.0C309.0 229.2 311.2 229.0 314.2 229.1Z" fill="#ff8000" stroke="#ff8000" stroke-width="19.0" stroke-linejoin="round"/><path d="M250.0 193.7C251.9 190.8 259.0 193.9 261.3 194.5C263.7 195.1 263.5 195.8 264.2 197.0C264.8 198.2 265.4 200.1 265.3 201.7C265.2 203.2 264.3 204.9 263.7 206.2C263.0 207.5 263.6 208.5 261.3 209.5C259.1 210.5 251.9 214.6 250.0 212.0C248.1 209.4 248.1 196.6 250.0 193.7Z" fill="#ff8000" stroke="#ff8000" stroke-width="8.4" stroke-linejoin="round"/><path d="M423.0 225.3C428.0 225.6 434.0 227.2 438.0 229.5C442.0 231.8 445.2 236.1 447.0 239.0C448.8 241.9 449.1 244.3 449.0 247.0C448.9 249.7 449.0 252.2 446.7 255.3C444.4 258.4 439.4 263.1 435.0 265.3C430.6 267.5 424.5 268.7 420.0 268.7C415.5 268.7 411.3 267.3 408.0 265.5C404.7 263.7 401.8 261.1 400.0 258.0C398.2 254.9 397.2 250.7 397.0 247.0C396.8 243.3 397.2 239.2 399.0 236.0C400.8 232.8 404.0 229.8 408.0 228.0C412.0 226.2 418.0 225.1 423.0 225.3Z" fill="#ff8000" stroke="#ff8000" stroke-width="16.0" stroke-linejoin="round"/><path d="M450.0 231.0C452.2 229.0 458.2 227.2 461.0 228.0C463.8 228.8 466.8 233.0 467.0 236.0C467.2 239.0 464.5 244.0 462.0 246.0C459.5 248.0 454.3 249.0 452.0 248.0C449.7 247.0 448.3 242.8 448.0 240.0C447.7 237.2 447.8 233.0 450.0 231.0Z" fill="#ff8000"/><path d="M460.0 228.7C461.5 225.2 468.1 219.8 471.7 217.0C475.3 214.2 477.8 213.9 481.7 212.0C485.6 210.1 491.1 208.4 495.0 205.3C498.9 202.3 502.2 196.3 505.0 193.7C507.8 191.0 509.2 190.2 511.7 189.5C514.2 188.8 517.7 188.5 520.0 189.5C522.3 190.5 524.4 192.7 525.3 195.3C526.2 198.0 526.5 202.0 525.3 205.3C524.2 208.7 520.9 211.4 518.3 215.3C515.8 219.2 512.8 224.5 510.0 228.7C507.2 232.8 504.2 237.4 501.7 240.3C499.2 243.2 498.1 244.9 495.0 246.2C491.9 247.4 487.2 248.2 483.3 247.8C479.4 247.4 475.1 245.3 471.7 243.7C468.2 242.0 464.4 240.3 462.5 237.8C460.6 235.3 458.5 232.1 460.0 228.7Z" fill="#ff8000"/><path d="M378.9 177.1C382.2 176.4 402.2 176.2 407.8 177.1C413.3 178.0 410.0 181.4 412.2 182.7C414.4 184.0 418.1 184.6 421.1 184.9C424.1 185.2 428.5 183.8 430.0 184.3C431.5 184.9 431.9 187.5 430.0 188.2C428.1 189.0 422.6 189.1 418.9 188.8C415.2 188.5 411.1 186.8 407.8 186.6C404.4 186.3 400.7 185.9 398.9 187.1C397.0 188.3 397.5 193.8 396.7 193.8C395.8 193.8 395.4 189.1 393.9 187.1C392.4 185.1 390.3 183.2 387.8 181.6C385.3 179.9 375.6 177.9 378.9 177.1Z" fill="#ff8000"/><path d="M408.3 172.0C403.8 172.8 407.2 175.6 408.3 177.0C409.4 178.4 412.8 179.8 415.0 180.7C417.2 181.5 419.2 182.0 421.7 182.0C424.2 182.0 427.6 181.5 430.0 180.7C432.4 179.8 434.9 178.4 435.8 177.0C436.8 175.6 440.4 172.8 435.8 172.0C431.2 171.2 412.9 171.2 408.3 172.0Z" fill="#ff8000" stroke="#ff8000" stroke-width="11.0" stroke-linejoin="round"/><path d="M555.0 235.8C551.4 236.6 547.2 239.3 543.3 242.0C539.4 244.7 534.6 248.7 531.7 252.0C528.8 255.3 526.9 258.1 525.8 262.0C524.7 265.9 525.0 271.3 525.0 275.3C525.0 279.3 525.0 282.6 525.5 286.0C526.0 289.4 526.4 292.7 528.3 296.0C530.2 299.3 533.6 303.2 536.7 306.0C539.8 308.8 543.7 311.0 546.7 312.7C549.8 314.4 552.2 315.7 555.0 316.0C557.8 316.3 560.5 314.4 563.3 314.3C566.1 314.2 568.9 314.9 571.7 315.2C574.5 315.5 577.2 316.6 580.0 316.0C582.8 315.4 585.0 313.8 588.3 311.8C591.6 309.9 596.7 306.9 600.0 304.3C603.3 301.7 606.4 299.2 608.3 296.0C610.2 292.8 610.7 288.4 611.5 285.0C612.3 281.6 612.8 278.7 613.2 275.5C613.6 272.3 614.3 268.9 614.0 266.0C613.7 263.1 612.7 260.5 611.5 258.0C610.3 255.5 609.2 253.7 606.7 251.0C604.2 248.3 600.3 244.5 596.7 242.0C593.1 239.5 588.9 237.3 585.0 236.2C581.1 235.1 576.6 235.2 573.3 235.3C570.0 235.4 568.0 236.9 565.0 237.0C562.0 237.1 558.6 235.0 555.0 235.8Z" fill="#ff8000" stroke="#ff8000" stroke-width="6.4" stroke-linejoin="round"/><path d="M625.5 262.0C625.5 262.0 631.0 254.1 634.0 251.0C637.0 247.9 639.8 246.0 643.3 243.7C646.8 241.4 651.9 238.5 655.0 237.0C658.1 235.5 660.1 234.2 661.7 234.5C663.3 234.8 664.5 236.9 664.5 238.7C664.5 240.4 662.9 243.3 662.0 245.0C661.1 246.7 659.2 249.0 659.2 249.0C659.2 249.0 666.8 247.0 671.7 245.3C676.7 243.6 685.4 239.7 688.9 238.6C692.4 237.5 691.5 238.2 693.0 238.8C694.5 239.5 695.7 240.6 698.0 242.5C700.3 244.4 704.1 247.9 706.7 250.4C709.3 252.9 711.8 255.3 713.8 257.6C715.8 259.9 717.9 261.6 719.0 264.0C720.1 266.4 720.1 269.2 720.5 272.0C720.9 274.8 721.5 278.0 721.3 280.7C721.1 283.4 720.5 285.8 719.5 288.0C718.5 290.2 717.4 291.8 715.5 294.0C713.6 296.2 711.7 297.9 708.3 301.0C704.9 304.1 698.9 309.5 695.0 312.7C691.1 315.9 687.8 318.5 685.0 320.2C682.2 321.9 680.5 322.6 678.3 322.7C676.1 322.8 675.0 322.2 671.7 321.0C668.4 319.8 662.5 317.6 658.3 315.2C654.1 312.8 650.3 310.0 646.7 306.8C643.1 303.6 639.1 299.5 636.7 296.0C634.3 292.5 632.9 288.9 632.5 286.0C632.1 283.1 633.4 281.0 634.2 278.7C635.0 276.4 636.5 273.9 637.5 272.0C638.5 270.1 640.0 267.3 640.0 267.3C640.0 267.3 635.7 269.6 633.3 268.7C630.9 267.8 625.5 262.0 625.5 262.0Z" fill="#ff8000" stroke="#ff8000" stroke-width="6.4" stroke-linejoin="round"/><path d="M660.0 231.5C660.2 230.8 665.0 231.2 666.5 232.5C668.0 233.8 669.0 236.7 669.0 239.0C669.0 241.3 667.8 244.6 666.5 246.5C665.2 248.4 661.5 251.1 661.0 250.5C660.5 249.9 662.8 245.2 663.5 243.0C664.2 240.8 665.6 238.9 665.0 237.0C664.4 235.1 659.8 232.2 660.0 231.5Z" fill="#ff8000"/><path d="M616.0 255.0C617.7 253.8 624.5 253.8 626.0 255.0C627.5 256.2 624.8 259.8 625.0 262.0C625.2 264.2 625.5 266.8 627.0 268.0C628.5 269.2 632.0 269.2 634.0 269.5C636.0 269.8 639.0 269.1 639.0 270.0C639.0 270.9 635.8 273.8 634.0 275.0C632.2 276.2 630.0 276.7 628.0 277.5C626.0 278.3 623.8 278.9 622.0 280.0C620.2 281.1 618.7 282.5 617.5 284.0C616.3 285.5 615.7 289.7 615.0 289.0C614.3 288.3 613.5 283.2 613.5 280.0C613.5 276.8 614.6 273.0 615.0 270.0C615.4 267.0 615.8 264.5 616.0 262.0C616.2 259.5 614.3 256.2 616.0 255.0Z" fill="#ff8000"/><path d="M696.7 165.0C696.7 165.0 691.5 180.0 690.0 185.3C688.5 190.6 687.4 192.8 687.5 197.0C687.6 201.2 689.0 206.3 690.8 210.3C692.6 214.3 695.1 218.3 698.3 221.2C701.5 224.1 706.1 226.3 710.0 227.8C713.9 229.3 718.0 229.7 721.7 230.3C725.4 230.9 727.3 231.0 732.0 231.2C736.7 231.4 750.0 231.5 750.0 231.5C750.0 231.5 750.0 165.0 750.0 165.0C750.0 165.0 696.7 165.0 696.7 165.0Z" fill="#ff8000" stroke="#ff8000" stroke-width="6.6" stroke-linejoin="round"/><path d="M250.0 290.2C251.9 278.4 257.7 290.4 261.3 291.0C264.9 291.6 267.7 292.2 271.7 293.5C275.6 294.8 280.8 296.1 285.0 298.5C289.2 300.9 293.6 304.2 296.7 307.7C299.7 311.1 302.1 315.7 303.3 319.3C304.6 322.9 304.7 325.4 304.2 329.3C303.6 333.2 301.8 338.5 300.0 342.7C298.2 346.8 295.6 351.8 293.3 354.3C291.1 356.8 289.7 356.8 286.7 357.7C283.6 358.5 279.2 358.8 275.0 359.3C270.8 359.9 265.5 360.6 261.3 361.0C257.2 361.4 251.9 373.6 250.0 361.8C248.1 350.0 248.1 302.0 250.0 290.2Z" fill="#ff8000" stroke="#ff8000" stroke-width="6.8" stroke-linejoin="round"/><path d="M271.7 400.0C272.0 395.0 274.2 390.3 276.7 386.0C279.2 381.7 282.8 377.6 286.7 374.3C290.6 371.0 295.6 367.7 300.0 366.0C304.4 364.3 308.9 364.3 313.3 364.3C317.8 364.3 322.2 364.9 326.7 366.0C331.1 367.1 336.1 368.8 340.0 371.0C343.9 373.2 347.2 376.2 350.0 379.3C352.8 382.4 355.1 385.9 356.7 389.3C358.3 392.8 359.2 396.6 359.5 400.0C359.8 403.4 359.9 406.5 358.7 410.0C357.5 413.5 355.6 417.3 352.5 421.0C349.4 424.7 344.6 429.1 340.0 432.2C335.4 435.3 330.0 437.9 325.0 439.7C320.0 441.5 314.2 442.8 310.0 443.0C305.8 443.2 304.2 443.0 300.0 441.0C295.8 439.0 289.2 435.2 285.0 431.0C280.8 426.8 277.2 421.2 275.0 416.0C272.8 410.8 271.4 405.0 271.7 400.0Z" fill="#ff8000" stroke="#ff8000" stroke-width="6.4" stroke-linejoin="round"/><path d="M470.0 285.0C476.1 282.7 485.8 285.2 491.7 286.5C497.5 287.8 501.1 290.2 505.0 292.7C508.9 295.1 512.4 297.7 515.0 301.0C517.6 304.3 519.4 309.3 520.3 312.7C521.3 316.0 521.9 317.9 520.8 321.0C519.8 324.1 517.4 327.1 514.2 331.0C511.0 334.9 506.0 340.0 501.7 344.3C497.4 348.6 492.2 353.9 488.3 356.8C484.4 359.8 483.1 361.3 478.3 361.8C473.6 362.4 465.3 360.9 460.0 360.2C454.7 359.5 450.6 359.5 446.7 357.7C442.8 355.9 439.4 352.9 436.7 349.3C433.9 345.7 431.4 340.0 430.0 336.0C428.6 332.0 426.9 328.6 428.3 325.2C429.7 321.7 433.9 319.3 438.3 315.2C442.8 311.0 449.7 305.2 455.0 300.2C460.3 295.1 463.9 287.3 470.0 285.0Z" fill="#ff8000" stroke="#ff8000" stroke-width="6.4" stroke-linejoin="round"/><path d="M520.0 292.7C520.7 290.7 523.1 289.3 525.0 291.0C526.9 292.7 530.1 299.3 531.7 302.7C533.2 306.0 534.7 308.8 534.2 311.0C533.6 313.2 530.1 315.7 528.3 316.0C526.5 316.3 524.6 314.9 523.3 312.7C522.1 310.4 521.4 306.0 520.8 302.7C520.3 299.3 519.3 294.6 520.0 292.7Z" fill="#ff8000"/><ellipse cx="436.2" cy="290.2" rx="24.5" ry="10.0" transform="rotate(-37.9 436.2 290.2)" fill="#ff8000"/><path d="M525.0 379.0C524.0 375.0 524.8 369.1 524.2 366.0C523.7 362.9 523.0 361.8 521.7 360.5C520.4 359.2 517.9 359.1 516.5 358.3C515.1 357.5 513.3 355.5 513.3 355.5C513.3 355.5 513.4 352.8 514.5 351.5C515.6 350.2 517.8 348.8 520.0 347.5C522.2 346.2 525.2 345.2 528.0 344.0C530.8 342.8 534.0 341.2 537.0 340.0C540.0 338.8 543.0 337.5 546.0 336.5C549.0 335.5 551.3 334.4 555.0 334.2C558.7 334.0 563.8 334.2 568.3 335.2C572.8 336.2 577.5 338.1 581.7 340.2C585.9 342.3 589.7 344.8 593.3 347.7C596.9 350.6 600.8 354.1 603.3 357.7C605.8 361.3 607.0 365.7 608.3 369.3C609.5 372.9 610.8 376.0 610.8 379.3C610.8 382.6 610.1 385.9 608.3 389.3C606.5 392.8 603.4 397.1 600.0 400.0C596.6 402.9 592.7 405.3 588.0 407.0C583.3 408.7 577.5 409.8 572.0 410.0C566.5 410.2 560.3 409.5 555.0 408.0C549.7 406.5 544.2 404.0 540.0 401.0C535.8 398.0 532.5 393.7 530.0 390.0C527.5 386.3 526.0 383.0 525.0 379.0Z" fill="#ff8000" stroke="#ff8000" stroke-width="6.4" stroke-linejoin="round"/><path d="M671.7 321.8C673.1 321.3 676.1 323.6 678.3 323.5C680.6 323.4 683.3 320.6 685.0 321.0C686.7 321.4 689.4 324.8 688.3 326.0C687.2 327.2 681.4 328.4 678.3 328.5C675.3 328.6 671.1 327.9 670.0 326.8C668.9 325.7 670.3 322.4 671.7 321.8Z" fill="#ff8000"/><path d="M738.3 304.3C737.3 298.4 734.4 305.7 732.2 306.8C729.9 307.9 726.9 309.5 725.0 311.0C723.1 312.5 721.1 314.3 720.8 316.0C720.6 317.7 722.1 319.3 723.3 321.0C724.6 322.7 727.1 324.1 728.3 326.0C729.6 327.9 730.2 330.2 730.8 332.7C731.5 335.2 730.9 339.3 732.2 341.0C733.4 342.7 737.3 348.8 738.3 342.7C739.4 336.6 739.4 310.3 738.3 304.3Z" fill="#ff8000" stroke="#ff8000" stroke-width="11.6" stroke-linejoin="round"/></g><g transform="rotate(180 494.5 389.0)"><path d="M368.3 180.3C372.5 180.5 377.9 180.9 381.7 182.8C385.4 184.8 388.7 188.2 390.8 192.0C393.0 195.8 394.7 201.2 394.7 205.3C394.7 209.5 393.0 213.7 390.8 217.0C388.7 220.3 385.1 223.5 381.7 225.3C378.2 227.1 374.2 227.8 370.0 227.8C365.8 227.9 360.7 227.2 356.7 225.7C352.6 224.1 348.6 221.6 345.8 218.7C343.1 215.7 340.7 211.7 340.0 207.8C339.3 203.9 340.3 198.8 341.7 195.3C343.1 191.9 345.8 189.2 348.3 187.0C350.8 184.8 353.3 183.1 356.7 182.0C360.0 180.9 364.2 180.2 368.3 180.3Z" fill="#ff8000" stroke="#ff8000" stroke-width="9.0" stroke-linejoin="round"/><path d="M301.7 175.3C295.0 176.3 313.6 179.9 318.3 181.2C323.1 182.4 326.9 181.6 330.0 182.8C333.1 184.1 335.3 186.6 336.7 188.7C338.1 190.8 336.4 195.6 338.3 195.3C340.3 195.1 345.0 190.3 348.3 187.0C351.7 183.7 366.1 177.3 358.3 175.3C350.6 173.4 308.3 174.4 301.7 175.3Z" fill="#ff8000"/><path d="M326.7 182.0C324.9 182.3 335.1 185.9 336.7 188.7C338.2 191.4 336.2 195.1 335.8 198.7C335.5 202.3 335.2 206.6 334.7 210.3C334.1 214.1 331.9 218.1 332.5 221.2C333.1 224.2 335.7 226.9 338.3 228.7C341.0 230.5 345.6 232.3 348.3 232.0C351.1 231.7 355.6 228.9 355.0 227.0C354.4 225.1 347.6 223.5 345.0 220.3C342.4 217.1 339.9 212.0 339.2 207.8C338.5 203.7 339.4 198.8 340.8 195.3C342.2 191.9 349.9 189.2 347.5 187.0C345.1 184.8 328.5 181.7 326.7 182.0Z" fill="#ff8000"/><path d="M388.3 222.0C390.0 219.2 394.7 212.0 396.7 212.0C398.6 212.0 399.7 218.7 400.0 222.0C400.3 225.3 399.7 230.1 398.3 232.0C396.9 233.9 393.6 234.2 391.7 233.7C389.7 233.1 387.2 230.6 386.7 228.7C386.1 226.7 386.7 224.8 388.3 222.0Z" fill="#ff8000"/><path d="M314.2 229.1C317.2 229.2 321.4 229.3 324.2 230.8C327.0 232.3 329.6 235.5 330.9 238.0C332.2 240.5 332.4 243.2 332.2 245.8C332.0 248.4 331.1 251.4 329.8 253.6C328.5 255.8 326.8 257.8 324.2 259.1C321.6 260.4 317.7 261.5 314.2 261.6C310.7 261.7 306.2 261.0 303.1 259.7C300.0 258.4 297.1 255.9 295.3 253.6C293.5 251.3 292.5 248.2 292.2 245.8C291.9 243.4 292.6 241.1 293.7 239.1C294.8 237.1 296.6 235.1 298.7 233.6C300.8 232.1 303.8 230.8 306.4 230.0C309.0 229.2 311.2 229.0 314.2 229.1Z" fill="#ff8000" stroke="#ff8000" stroke-width="19.0" stroke-linejoin="round"/><path d="M250.0 193.7C251.9 190.8 259.0 193.9 261.3 194.5C263.7 195.1 263.5 195.8 264.2 197.0C264.8 198.2 265.4 200.1 265.3 201.7C265.2 203.2 264.3 204.9 263.7 206.2C263.0 207.5 263.6 208.5 261.3 209.5C259.1 210.5 251.9 214.6 250.0 212.0C248.1 209.4 248.1 196.6 250.0 193.7Z" fill="#ff8000" stroke="#ff8000" stroke-width="8.4" stroke-linejoin="round"/><path d="M423.0 225.3C428.0 225.6 434.0 227.2 438.0 229.5C442.0 231.8 445.2 236.1 447.0 239.0C448.8 241.9 449.1 244.3 449.0 247.0C448.9 249.7 449.0 252.2 446.7 255.3C444.4 258.4 439.4 263.1 435.0 265.3C430.6 267.5 424.5 268.7 420.0 268.7C415.5 268.7 411.3 267.3 408.0 265.5C404.7 263.7 401.8 261.1 400.0 258.0C398.2 254.9 397.2 250.7 397.0 247.0C396.8 243.3 397.2 239.2 399.0 236.0C400.8 232.8 404.0 229.8 408.0 228.0C412.0 226.2 418.0 225.1 423.0 225.3Z" fill="#ff8000" stroke="#ff8000" stroke-width="16.0" stroke-linejoin="round"/><path d="M450.0 231.0C452.2 229.0 458.2 227.2 461.0 228.0C463.8 228.8 466.8 233.0 467.0 236.0C467.2 239.0 464.5 244.0 462.0 246.0C459.5 248.0 454.3 249.0 452.0 248.0C449.7 247.0 448.3 242.8 448.0 240.0C447.7 237.2 447.8 233.0 450.0 231.0Z" fill="#ff8000"/><path d="M460.0 228.7C461.5 225.2 468.1 219.8 471.7 217.0C475.3 214.2 477.8 213.9 481.7 212.0C485.6 210.1 491.1 208.4 495.0 205.3C498.9 202.3 502.2 196.3 505.0 193.7C507.8 191.0 509.2 190.2 511.7 189.5C514.2 188.8 517.7 188.5 520.0 189.5C522.3 190.5 524.4 192.7 525.3 195.3C526.2 198.0 526.5 202.0 525.3 205.3C524.2 208.7 520.9 211.4 518.3 215.3C515.8 219.2 512.8 224.5 510.0 228.7C507.2 232.8 504.2 237.4 501.7 240.3C499.2 243.2 498.1 244.9 495.0 246.2C491.9 247.4 487.2 248.2 483.3 247.8C479.4 247.4 475.1 245.3 471.7 243.7C468.2 242.0 464.4 240.3 462.5 237.8C460.6 235.3 458.5 232.1 460.0 228.7Z" fill="#ff8000"/><path d="M378.9 177.1C382.2 176.4 402.2 176.2 407.8 177.1C413.3 178.0 410.0 181.4 412.2 182.7C414.4 184.0 418.1 184.6 421.1 184.9C424.1 185.2 428.5 183.8 430.0 184.3C431.5 184.9 431.9 187.5 430.0 188.2C428.1 189.0 422.6 189.1 418.9 188.8C415.2 188.5 411.1 186.8 407.8 186.6C404.4 186.3 400.7 185.9 398.9 187.1C397.0 188.3 397.5 193.8 396.7 193.8C395.8 193.8 395.4 189.1 393.9 187.1C392.4 185.1 390.3 183.2 387.8 181.6C385.3 179.9 375.6 177.9 378.9 177.1Z" fill="#ff8000"/><path d="M408.3 172.0C403.8 172.8 407.2 175.6 408.3 177.0C409.4 178.4 412.8 179.8 415.0 180.7C417.2 181.5 419.2 182.0 421.7 182.0C424.2 182.0 427.6 181.5 430.0 180.7C432.4 179.8 434.9 178.4 435.8 177.0C436.8 175.6 440.4 172.8 435.8 172.0C431.2 171.2 412.9 171.2 408.3 172.0Z" fill="#ff8000" stroke="#ff8000" stroke-width="11.0" stroke-linejoin="round"/><path d="M555.0 235.8C551.4 236.6 547.2 239.3 543.3 242.0C539.4 244.7 534.6 248.7 531.7 252.0C528.8 255.3 526.9 258.1 525.8 262.0C524.7 265.9 525.0 271.3 525.0 275.3C525.0 279.3 525.0 282.6 525.5 286.0C526.0 289.4 526.4 292.7 528.3 296.0C530.2 299.3 533.6 303.2 536.7 306.0C539.8 308.8 543.7 311.0 546.7 312.7C549.8 314.4 552.2 315.7 555.0 316.0C557.8 316.3 560.5 314.4 563.3 314.3C566.1 314.2 568.9 314.9 571.7 315.2C574.5 315.5 577.2 316.6 580.0 316.0C582.8 315.4 585.0 313.8 588.3 311.8C591.6 309.9 596.7 306.9 600.0 304.3C603.3 301.7 606.4 299.2 608.3 296.0C610.2 292.8 610.7 288.4 611.5 285.0C612.3 281.6 612.8 278.7 613.2 275.5C613.6 272.3 614.3 268.9 614.0 266.0C613.7 263.1 612.7 260.5 611.5 258.0C610.3 255.5 609.2 253.7 606.7 251.0C604.2 248.3 600.3 244.5 596.7 242.0C593.1 239.5 588.9 237.3 585.0 236.2C581.1 235.1 576.6 235.2 573.3 235.3C570.0 235.4 568.0 236.9 565.0 237.0C562.0 237.1 558.6 235.0 555.0 235.8Z" fill="#ff8000" stroke="#ff8000" stroke-width="6.4" stroke-linejoin="round"/><path d="M625.5 262.0C625.5 262.0 631.0 254.1 634.0 251.0C637.0 247.9 639.8 246.0 643.3 243.7C646.8 241.4 651.9 238.5 655.0 237.0C658.1 235.5 660.1 234.2 661.7 234.5C663.3 234.8 664.5 236.9 664.5 238.7C664.5 240.4 662.9 243.3 662.0 245.0C661.1 246.7 659.2 249.0 659.2 249.0C659.2 249.0 666.8 247.0 671.7 245.3C676.7 243.6 685.4 239.7 688.9 238.6C692.4 237.5 691.5 238.2 693.0 238.8C694.5 239.5 695.7 240.6 698.0 242.5C700.3 244.4 704.1 247.9 706.7 250.4C709.3 252.9 711.8 255.3 713.8 257.6C715.8 259.9 717.9 261.6 719.0 264.0C720.1 266.4 720.1 269.2 720.5 272.0C720.9 274.8 721.5 278.0 721.3 280.7C721.1 283.4 720.5 285.8 719.5 288.0C718.5 290.2 717.4 291.8 715.5 294.0C713.6 296.2 711.7 297.9 708.3 301.0C704.9 304.1 698.9 309.5 695.0 312.7C691.1 315.9 687.8 318.5 685.0 320.2C682.2 321.9 680.5 322.6 678.3 322.7C676.1 322.8 675.0 322.2 671.7 321.0C668.4 319.8 662.5 317.6 658.3 315.2C654.1 312.8 650.3 310.0 646.7 306.8C643.1 303.6 639.1 299.5 636.7 296.0C634.3 292.5 632.9 288.9 632.5 286.0C632.1 283.1 633.4 281.0 634.2 278.7C635.0 276.4 636.5 273.9 637.5 272.0C638.5 270.1 640.0 267.3 640.0 267.3C640.0 267.3 635.7 269.6 633.3 268.7C630.9 267.8 625.5 262.0 625.5 262.0Z" fill="#ff8000" stroke="#ff8000" stroke-width="6.4" stroke-linejoin="round"/><path d="M660.0 231.5C660.2 230.8 665.0 231.2 666.5 232.5C668.0 233.8 669.0 236.7 669.0 239.0C669.0 241.3 667.8 244.6 666.5 246.5C665.2 248.4 661.5 251.1 661.0 250.5C660.5 249.9 662.8 245.2 663.5 243.0C664.2 240.8 665.6 238.9 665.0 237.0C664.4 235.1 659.8 232.2 660.0 231.5Z" fill="#ff8000"/><path d="M616.0 255.0C617.7 253.8 624.5 253.8 626.0 255.0C627.5 256.2 624.8 259.8 625.0 262.0C625.2 264.2 625.5 266.8 627.0 268.0C628.5 269.2 632.0 269.2 634.0 269.5C636.0 269.8 639.0 269.1 639.0 270.0C639.0 270.9 635.8 273.8 634.0 275.0C632.2 276.2 630.0 276.7 628.0 277.5C626.0 278.3 623.8 278.9 622.0 280.0C620.2 281.1 618.7 282.5 617.5 284.0C616.3 285.5 615.7 289.7 615.0 289.0C614.3 288.3 613.5 283.2 613.5 280.0C613.5 276.8 614.6 273.0 615.0 270.0C615.4 267.0 615.8 264.5 616.0 262.0C616.2 259.5 614.3 256.2 616.0 255.0Z" fill="#ff8000"/><path d="M696.7 165.0C696.7 165.0 691.5 180.0 690.0 185.3C688.5 190.6 687.4 192.8 687.5 197.0C687.6 201.2 689.0 206.3 690.8 210.3C692.6 214.3 695.1 218.3 698.3 221.2C701.5 224.1 706.1 226.3 710.0 227.8C713.9 229.3 718.0 229.7 721.7 230.3C725.4 230.9 727.3 231.0 732.0 231.2C736.7 231.4 750.0 231.5 750.0 231.5C750.0 231.5 750.0 165.0 750.0 165.0C750.0 165.0 696.7 165.0 696.7 165.0Z" fill="#ff8000" stroke="#ff8000" stroke-width="6.6" stroke-linejoin="round"/><path d="M250.0 290.2C251.9 278.4 257.7 290.4 261.3 291.0C264.9 291.6 267.7 292.2 271.7 293.5C275.6 294.8 280.8 296.1 285.0 298.5C289.2 300.9 293.6 304.2 296.7 307.7C299.7 311.1 302.1 315.7 303.3 319.3C304.6 322.9 304.7 325.4 304.2 329.3C303.6 333.2 301.8 338.5 300.0 342.7C298.2 346.8 295.6 351.8 293.3 354.3C291.1 356.8 289.7 356.8 286.7 357.7C283.6 358.5 279.2 358.8 275.0 359.3C270.8 359.9 265.5 360.6 261.3 361.0C257.2 361.4 251.9 373.6 250.0 361.8C248.1 350.0 248.1 302.0 250.0 290.2Z" fill="#ff8000" stroke="#ff8000" stroke-width="6.8" stroke-linejoin="round"/><path d="M271.7 400.0C272.0 395.0 274.2 390.3 276.7 386.0C279.2 381.7 282.8 377.6 286.7 374.3C290.6 371.0 295.6 367.7 300.0 366.0C304.4 364.3 308.9 364.3 313.3 364.3C317.8 364.3 322.2 364.9 326.7 366.0C331.1 367.1 336.1 368.8 340.0 371.0C343.9 373.2 347.2 376.2 350.0 379.3C352.8 382.4 355.1 385.9 356.7 389.3C358.3 392.8 359.2 396.6 359.5 400.0C359.8 403.4 359.9 406.5 358.7 410.0C357.5 413.5 355.6 417.3 352.5 421.0C349.4 424.7 344.6 429.1 340.0 432.2C335.4 435.3 330.0 437.9 325.0 439.7C320.0 441.5 314.2 442.8 310.0 443.0C305.8 443.2 304.2 443.0 300.0 441.0C295.8 439.0 289.2 435.2 285.0 431.0C280.8 426.8 277.2 421.2 275.0 416.0C272.8 410.8 271.4 405.0 271.7 400.0Z" fill="#ff8000" stroke="#ff8000" stroke-width="6.4" stroke-linejoin="round"/><path d="M470.0 285.0C476.1 282.7 485.8 285.2 491.7 286.5C497.5 287.8 501.1 290.2 505.0 292.7C508.9 295.1 512.4 297.7 515.0 301.0C517.6 304.3 519.4 309.3 520.3 312.7C521.3 316.0 521.9 317.9 520.8 321.0C519.8 324.1 517.4 327.1 514.2 331.0C511.0 334.9 506.0 340.0 501.7 344.3C497.4 348.6 492.2 353.9 488.3 356.8C484.4 359.8 483.1 361.3 478.3 361.8C473.6 362.4 465.3 360.9 460.0 360.2C454.7 359.5 450.6 359.5 446.7 357.7C442.8 355.9 439.4 352.9 436.7 349.3C433.9 345.7 431.4 340.0 430.0 336.0C428.6 332.0 426.9 328.6 428.3 325.2C429.7 321.7 433.9 319.3 438.3 315.2C442.8 311.0 449.7 305.2 455.0 300.2C460.3 295.1 463.9 287.3 470.0 285.0Z" fill="#ff8000" stroke="#ff8000" stroke-width="6.4" stroke-linejoin="round"/><path d="M520.0 292.7C520.7 290.7 523.1 289.3 525.0 291.0C526.9 292.7 530.1 299.3 531.7 302.7C533.2 306.0 534.7 308.8 534.2 311.0C533.6 313.2 530.1 315.7 528.3 316.0C526.5 316.3 524.6 314.9 523.3 312.7C522.1 310.4 521.4 306.0 520.8 302.7C520.3 299.3 519.3 294.6 520.0 292.7Z" fill="#ff8000"/><ellipse cx="436.2" cy="290.2" rx="24.5" ry="10.0" transform="rotate(-37.9 436.2 290.2)" fill="#ff8000"/><path d="M525.0 379.0C524.0 375.0 524.8 369.1 524.2 366.0C523.7 362.9 523.0 361.8 521.7 360.5C520.4 359.2 517.9 359.1 516.5 358.3C515.1 357.5 513.3 355.5 513.3 355.5C513.3 355.5 513.4 352.8 514.5 351.5C515.6 350.2 517.8 348.8 520.0 347.5C522.2 346.2 525.2 345.2 528.0 344.0C530.8 342.8 534.0 341.2 537.0 340.0C540.0 338.8 543.0 337.5 546.0 336.5C549.0 335.5 551.3 334.4 555.0 334.2C558.7 334.0 563.8 334.2 568.3 335.2C572.8 336.2 577.5 338.1 581.7 340.2C585.9 342.3 589.7 344.8 593.3 347.7C596.9 350.6 600.8 354.1 603.3 357.7C605.8 361.3 607.0 365.7 608.3 369.3C609.5 372.9 610.8 376.0 610.8 379.3C610.8 382.6 610.1 385.9 608.3 389.3C606.5 392.8 603.4 397.1 600.0 400.0C596.6 402.9 592.7 405.3 588.0 407.0C583.3 408.7 577.5 409.8 572.0 410.0C566.5 410.2 560.3 409.5 555.0 408.0C549.7 406.5 544.2 404.0 540.0 401.0C535.8 398.0 532.5 393.7 530.0 390.0C527.5 386.3 526.0 383.0 525.0 379.0Z" fill="#ff8000" stroke="#ff8000" stroke-width="6.4" stroke-linejoin="round"/><path d="M671.7 321.8C673.1 321.3 676.1 323.6 678.3 323.5C680.6 323.4 683.3 320.6 685.0 321.0C686.7 321.4 689.4 324.8 688.3 326.0C687.2 327.2 681.4 328.4 678.3 328.5C675.3 328.6 671.1 327.9 670.0 326.8C668.9 325.7 670.3 322.4 671.7 321.8Z" fill="#ff8000"/><path d="M738.3 304.3C737.3 298.4 734.4 305.7 732.2 306.8C729.9 307.9 726.9 309.5 725.0 311.0C723.1 312.5 721.1 314.3 720.8 316.0C720.6 317.7 722.1 319.3 723.3 321.0C724.6 322.7 727.1 324.1 728.3 326.0C729.6 327.9 730.2 330.2 730.8 332.7C731.5 335.2 730.9 339.3 732.2 341.0C733.4 342.7 737.3 348.8 738.3 342.7C739.4 336.6 739.4 310.3 738.3 304.3Z" fill="#ff8000" stroke="#ff8000" stroke-width="11.6" stroke-linejoin="round"/></g>
<g><path d="M736.7 238.7C735.4 234.4 730.8 240.9 729.2 242.8C727.6 244.8 727.1 247.4 727.0 250.3C726.9 253.2 727.3 257.4 728.3 260.3C729.4 263.2 731.9 266.4 733.3 267.8C734.7 269.2 736.1 273.5 736.7 268.7C737.2 263.8 737.9 243.0 736.7 238.7Z" fill="#00ffff" stroke="#00ffff" stroke-width="6.6" stroke-linejoin="round"/><path d="M434.7 309.2 L461.3 286.8" stroke="#00ffff" stroke-width="11.2" stroke-linecap="round" fill="none"/><path d="M492.7 357.0 L512.3 340.0" stroke="#00ffff" stroke-width="11.0" stroke-linecap="round" fill="none"/><path d="M475.5 369.5L517 369.5Q521 369.7 521.3 374L522.3 399.5Q522.3 405.5 518 405.5L477 405.5Q471.5 405.3 471.3 399.5L470.8 375Q471 369.7 475.5 369.5Z" fill="#00ffff" stroke="#00ffff" stroke-width="10.0" stroke-linejoin="round"/><path d="M623.3 297.7C625.8 297.9 629.7 297.9 633.3 300.2C636.9 302.4 641.9 307.5 645.0 311.0C648.1 314.5 650.7 318.2 651.7 321.0C652.6 323.8 652.5 324.9 650.8 327.7C649.2 330.4 645.1 334.3 641.7 337.7C638.2 341.0 633.1 345.6 630.0 347.7C626.9 349.8 625.6 350.2 623.3 350.2C621.1 350.2 619.7 349.8 616.7 347.7C613.6 345.6 608.3 340.7 605.0 337.7C601.7 334.6 598.3 332.0 596.7 329.3C595.0 326.7 594.4 324.6 595.0 321.8C595.6 319.1 597.2 315.9 600.0 312.7C602.8 309.5 608.6 305.0 611.7 302.7C614.7 300.3 616.4 299.3 618.3 298.5C620.3 297.7 620.8 297.4 623.3 297.7Z" fill="#00ffff" stroke="#00ffff" stroke-width="10.0" stroke-linejoin="round"/><path d="M468.3 265.3C469.2 263.1 470.6 260.5 473.3 258.7C476.1 256.9 480.3 256.0 485.0 254.5C489.7 253.0 496.7 250.6 501.7 249.5C506.7 248.4 511.8 246.9 515.0 247.8C518.2 248.8 519.9 251.6 520.8 255.3C521.8 259.1 521.4 266.2 520.8 270.3C520.3 274.5 519.3 277.7 517.5 280.3C515.7 282.9 514.9 285.1 510.0 286.0C505.1 286.9 494.4 287.2 488.3 286.0C482.2 284.8 476.7 281.0 473.3 278.7C470.0 276.3 469.2 274.2 468.3 272.0C467.5 269.8 467.5 267.6 468.3 265.3Z" fill="#00ffff"/><path d="M471.1 261.6C472.4 261.9 476.3 266.6 477.8 269.3C479.3 272.1 481.1 276.0 480.0 278.2C478.9 280.4 474.1 281.6 471.1 282.7C468.1 283.8 464.4 284.0 462.2 284.9C460.0 285.8 459.3 287.7 457.8 288.2C456.3 288.8 452.6 289.5 453.3 288.2C454.1 286.9 459.6 282.9 462.2 280.4C464.8 278.0 467.6 276.0 468.9 273.8C470.2 271.6 469.6 269.1 470.0 267.1C470.4 265.1 469.8 261.2 471.1 261.6Z" fill="#00ffff"/><path d="M251.7 366.8C253.3 358.5 258.8 367.5 261.3 367.7C263.8 367.8 265.1 366.8 266.7 367.7C268.2 368.5 270.3 370.4 270.8 372.7C271.4 374.9 270.6 377.7 270.0 381.0C269.4 384.3 268.0 389.3 267.0 392.7C266.0 396.0 265.0 398.2 264.2 401.0C263.3 403.8 262.7 406.6 262.0 409.3C261.3 412.1 261.7 416.3 260.0 417.7C258.3 419.1 253.1 426.1 251.7 417.7C250.3 409.2 250.1 375.2 251.7 366.8Z" fill="#00ffff" stroke="#00ffff" stroke-width="10.0" stroke-linejoin="round"/></g><g transform="rotate(180 496.8 387.5)"><path d="M736.7 238.7C735.4 234.4 730.8 240.9 729.2 242.8C727.6 244.8 727.1 247.4 727.0 250.3C726.9 253.2 727.3 257.4 728.3 260.3C729.4 263.2 731.9 266.4 733.3 267.8C734.7 269.2 736.1 273.5 736.7 268.7C737.2 263.8 737.9 243.0 736.7 238.7Z" fill="#00ffff" stroke="#00ffff" stroke-width="6.6" stroke-linejoin="round"/><path d="M434.7 309.2 L461.3 286.8" stroke="#00ffff" stroke-width="11.2" stroke-linecap="round" fill="none"/><path d="M492.7 357.0 L512.3 340.0" stroke="#00ffff" stroke-width="11.0" stroke-linecap="round" fill="none"/><path d="M475.5 369.5L517 369.5Q521 369.7 521.3 374L522.3 399.5Q522.3 405.5 518 405.5L477 405.5Q471.5 405.3 471.3 399.5L470.8 375Q471 369.7 475.5 369.5Z" fill="#00ffff" stroke="#00ffff" stroke-width="10.0" stroke-linejoin="round"/><path d="M623.3 297.7C625.8 297.9 629.7 297.9 633.3 300.2C636.9 302.4 641.9 307.5 645.0 311.0C648.1 314.5 650.7 318.2 651.7 321.0C652.6 323.8 652.5 324.9 650.8 327.7C649.2 330.4 645.1 334.3 641.7 337.7C638.2 341.0 633.1 345.6 630.0 347.7C626.9 349.8 625.6 350.2 623.3 350.2C621.1 350.2 619.7 349.8 616.7 347.7C613.6 345.6 608.3 340.7 605.0 337.7C601.7 334.6 598.3 332.0 596.7 329.3C595.0 326.7 594.4 324.6 595.0 321.8C595.6 319.1 597.2 315.9 600.0 312.7C602.8 309.5 608.6 305.0 611.7 302.7C614.7 300.3 616.4 299.3 618.3 298.5C620.3 297.7 620.8 297.4 623.3 297.7Z" fill="#00ffff" stroke="#00ffff" stroke-width="10.0" stroke-linejoin="round"/><path d="M468.3 265.3C469.2 263.1 470.6 260.5 473.3 258.7C476.1 256.9 480.3 256.0 485.0 254.5C489.7 253.0 496.7 250.6 501.7 249.5C506.7 248.4 511.8 246.9 515.0 247.8C518.2 248.8 519.9 251.6 520.8 255.3C521.8 259.1 521.4 266.2 520.8 270.3C520.3 274.5 519.3 277.7 517.5 280.3C515.7 282.9 514.9 285.1 510.0 286.0C505.1 286.9 494.4 287.2 488.3 286.0C482.2 284.8 476.7 281.0 473.3 278.7C470.0 276.3 469.2 274.2 468.3 272.0C467.5 269.8 467.5 267.6 468.3 265.3Z" fill="#00ffff"/><path d="M471.1 261.6C472.4 261.9 476.3 266.6 477.8 269.3C479.3 272.1 481.1 276.0 480.0 278.2C478.9 280.4 474.1 281.6 471.1 282.7C468.1 283.8 464.4 284.0 462.2 284.9C460.0 285.8 459.3 287.7 457.8 288.2C456.3 288.8 452.6 289.5 453.3 288.2C454.1 286.9 459.6 282.9 462.2 280.4C464.8 278.0 467.6 276.0 468.9 273.8C470.2 271.6 469.6 269.1 470.0 267.1C470.4 265.1 469.8 261.2 471.1 261.6Z" fill="#00ffff"/><path d="M251.7 366.8C253.3 358.5 258.8 367.5 261.3 367.7C263.8 367.8 265.1 366.8 266.7 367.7C268.2 368.5 270.3 370.4 270.8 372.7C271.4 374.9 270.6 377.7 270.0 381.0C269.4 384.3 268.0 389.3 267.0 392.7C266.0 396.0 265.0 398.2 264.2 401.0C263.3 403.8 262.7 406.6 262.0 409.3C261.3 412.1 261.7 416.3 260.0 417.7C258.3 419.1 253.1 426.1 251.7 417.7C250.3 409.2 250.1 375.2 251.7 366.8Z" fill="#00ffff" stroke="#00ffff" stroke-width="10.0" stroke-linejoin="round"/></g>
<g><ellipse cx="710.3" cy="305.6" rx="13.2" ry="4.4" transform="rotate(-40.0 710.3 305.6)" fill="#00ffaa"/></g><g transform="rotate(180 496.8 387.5)"><ellipse cx="710.3" cy="305.6" rx="13.2" ry="4.4" transform="rotate(-40.0 710.3 305.6)" fill="#00ffaa"/></g>
<g><path d="M368.3 180.3C372.5 180.5 377.9 180.9 381.7 182.8C385.4 184.8 388.7 188.2 390.8 192.0C393.0 195.8 394.7 201.2 394.7 205.3C394.7 209.5 393.0 213.7 390.8 217.0C388.7 220.3 385.1 223.5 381.7 225.3C378.2 227.1 374.2 227.8 370.0 227.8C365.8 227.9 360.7 227.2 356.7 225.7C352.6 224.1 348.6 221.6 345.8 218.7C343.1 215.7 340.7 211.7 340.0 207.8C339.3 203.9 340.3 198.8 341.7 195.3C343.1 191.9 345.8 189.2 348.3 187.0C350.8 184.8 353.3 183.1 356.7 182.0C360.0 180.9 364.2 180.2 368.3 180.3Z" fill="#ff0000" stroke="#ff0000" stroke-width="4.4" stroke-linejoin="round"/><path d="M314.2 229.1C317.2 229.2 321.4 229.3 324.2 230.8C327.0 232.3 329.6 235.5 330.9 238.0C332.2 240.5 332.4 243.2 332.2 245.8C332.0 248.4 331.1 251.4 329.8 253.6C328.5 255.8 326.8 257.8 324.2 259.1C321.6 260.4 317.7 261.5 314.2 261.6C310.7 261.7 306.2 261.0 303.1 259.7C300.0 258.4 297.1 255.9 295.3 253.6C293.5 251.3 292.5 248.2 292.2 245.8C291.9 243.4 292.6 241.1 293.7 239.1C294.8 237.1 296.6 235.1 298.7 233.6C300.8 232.1 303.8 230.8 306.4 230.0C309.0 229.2 311.2 229.0 314.2 229.1Z" fill="#ff0000" stroke="#ff0000" stroke-width="9.2" stroke-linejoin="round"/><path d="M250.0 193.7C251.9 190.8 259.0 193.9 261.3 194.5C263.7 195.1 263.5 195.8 264.2 197.0C264.8 198.2 265.4 200.1 265.3 201.7C265.2 203.2 264.3 204.9 263.7 206.2C263.0 207.5 263.6 208.5 261.3 209.5C259.1 210.5 251.9 214.6 250.0 212.0C248.1 209.4 248.1 196.6 250.0 193.7Z" fill="#ff0000" stroke="#ff0000" stroke-width="4.0" stroke-linejoin="round"/><path d="M423.0 225.3C428.0 225.6 434.0 227.2 438.0 229.5C442.0 231.8 445.2 236.1 447.0 239.0C448.8 241.9 449.1 244.3 449.0 247.0C448.9 249.7 449.0 252.2 446.7 255.3C444.4 258.4 439.4 263.1 435.0 265.3C430.6 267.5 424.5 268.7 420.0 268.7C415.5 268.7 411.3 267.3 408.0 265.5C404.7 263.7 401.8 261.1 400.0 258.0C398.2 254.9 397.2 250.7 397.0 247.0C396.8 243.3 397.2 239.2 399.0 236.0C400.8 232.8 404.0 229.8 408.0 228.0C412.0 226.2 418.0 225.1 423.0 225.3Z" fill="#ff0000" stroke="#ff0000" stroke-width="6.4" stroke-linejoin="round"/><path d="M488.3 213.7C491.1 213.6 495.7 213.6 498.3 215.0C501.0 216.4 503.3 219.4 504.2 222.0C505.0 224.6 504.3 227.3 503.3 230.3C502.4 233.4 500.8 238.0 498.3 240.3C495.8 242.7 491.7 244.2 488.3 244.5C485.0 244.8 481.2 243.5 478.3 242.0C475.4 240.5 472.2 237.6 470.8 235.3C469.4 233.1 469.3 231.2 470.0 228.7C470.7 226.2 473.1 222.5 475.0 220.3C476.9 218.2 479.4 216.8 481.7 215.7C483.9 214.6 485.6 213.8 488.3 213.7Z" fill="#ff0000"/><path d="M408.3 172.0C403.8 172.8 407.2 175.6 408.3 177.0C409.4 178.4 412.8 179.8 415.0 180.7C417.2 181.5 419.2 182.0 421.7 182.0C424.2 182.0 427.6 181.5 430.0 180.7C432.4 179.8 434.9 178.4 435.8 177.0C436.8 175.6 440.4 172.8 435.8 172.0C431.2 171.2 412.9 171.2 408.3 172.0Z" fill="#ff0000" stroke="#ff0000" stroke-width="6.0" stroke-linejoin="round"/><path d="M555.0 235.8C551.4 236.6 547.2 239.3 543.3 242.0C539.4 244.7 534.6 248.7 531.7 252.0C528.8 255.3 526.9 258.1 525.8 262.0C524.7 265.9 525.0 271.3 525.0 275.3C525.0 279.3 525.0 282.6 525.5 286.0C526.0 289.4 526.4 292.7 528.3 296.0C530.2 299.3 533.6 303.2 536.7 306.0C539.8 308.8 543.7 311.0 546.7 312.7C549.8 314.4 552.2 315.7 555.0 316.0C557.8 316.3 560.5 314.4 563.3 314.3C566.1 314.2 568.9 314.9 571.7 315.2C574.5 315.5 577.2 316.6 580.0 316.0C582.8 315.4 585.0 313.8 588.3 311.8C591.6 309.9 596.7 306.9 600.0 304.3C603.3 301.7 606.4 299.2 608.3 296.0C610.2 292.8 610.7 288.4 611.5 285.0C612.3 281.6 612.8 278.7 613.2 275.5C613.6 272.3 614.3 268.9 614.0 266.0C613.7 263.1 612.7 260.5 611.5 258.0C610.3 255.5 609.2 253.7 606.7 251.0C604.2 248.3 600.3 244.5 596.7 242.0C593.1 239.5 588.9 237.3 585.0 236.2C581.1 235.1 576.6 235.2 573.3 235.3C570.0 235.4 568.0 236.9 565.0 237.0C562.0 237.1 558.6 235.0 555.0 235.8Z" fill="#ff0000" stroke="#ff0000" stroke-width="3.2" stroke-linejoin="round"/><path d="M625.5 262.0C625.5 262.0 631.0 254.1 634.0 251.0C637.0 247.9 639.8 246.0 643.3 243.7C646.8 241.4 651.9 238.5 655.0 237.0C658.1 235.5 660.1 234.2 661.7 234.5C663.3 234.8 664.5 236.9 664.5 238.7C664.5 240.4 662.9 243.3 662.0 245.0C661.1 246.7 659.2 249.0 659.2 249.0C659.2 249.0 666.8 247.0 671.7 245.3C676.7 243.6 685.4 239.7 688.9 238.6C692.4 237.5 691.5 238.2 693.0 238.8C694.5 239.5 695.7 240.6 698.0 242.5C700.3 244.4 704.1 247.9 706.7 250.4C709.3 252.9 711.8 255.3 713.8 257.6C715.8 259.9 717.9 261.6 719.0 264.0C720.1 266.4 720.1 269.2 720.5 272.0C720.9 274.8 721.5 278.0 721.3 280.7C721.1 283.4 720.5 285.8 719.5 288.0C718.5 290.2 717.4 291.8 715.5 294.0C713.6 296.2 711.7 297.9 708.3 301.0C704.9 304.1 698.9 309.5 695.0 312.7C691.1 315.9 687.8 318.5 685.0 320.2C682.2 321.9 680.5 322.6 678.3 322.7C676.1 322.8 675.0 322.2 671.7 321.0C668.4 319.8 662.5 317.6 658.3 315.2C654.1 312.8 650.3 310.0 646.7 306.8C643.1 303.6 639.1 299.5 636.7 296.0C634.3 292.5 632.9 288.9 632.5 286.0C632.1 283.1 633.4 281.0 634.2 278.7C635.0 276.4 636.5 273.9 637.5 272.0C638.5 270.1 640.0 267.3 640.0 267.3C640.0 267.3 635.7 269.6 633.3 268.7C630.9 267.8 625.5 262.0 625.5 262.0Z" fill="#ff0000" stroke="#ff0000" stroke-width="3.2" stroke-linejoin="round"/><path d="M621.0 258.0C621.8 256.7 626.1 255.2 627.0 256.0C627.9 256.8 626.2 261.2 626.5 263.0C626.8 264.8 627.8 266.4 629.0 267.0C630.2 267.6 632.2 266.7 634.0 266.5C635.8 266.3 638.8 265.7 640.0 266.0C641.2 266.3 642.0 267.9 641.0 268.5C640.0 269.1 636.3 269.2 634.0 269.3C631.7 269.4 628.9 269.7 627.0 268.8C625.1 267.9 623.5 265.8 622.5 264.0C621.5 262.2 620.2 259.3 621.0 258.0Z" fill="#ff0000"/><path d="M696.7 165.0C696.7 165.0 691.5 180.0 690.0 185.3C688.5 190.6 687.4 192.8 687.5 197.0C687.6 201.2 689.0 206.3 690.8 210.3C692.6 214.3 695.1 218.3 698.3 221.2C701.5 224.1 706.1 226.3 710.0 227.8C713.9 229.3 718.0 229.7 721.7 230.3C725.4 230.9 727.3 231.0 732.0 231.2C736.7 231.4 750.0 231.5 750.0 231.5C750.0 231.5 750.0 165.0 750.0 165.0C750.0 165.0 696.7 165.0 696.7 165.0Z" fill="#ff0000" stroke="#ff0000" stroke-width="3.4" stroke-linejoin="round"/><path d="M250.0 290.2C251.9 278.4 257.7 290.4 261.3 291.0C264.9 291.6 267.7 292.2 271.7 293.5C275.6 294.8 280.8 296.1 285.0 298.5C289.2 300.9 293.6 304.2 296.7 307.7C299.7 311.1 302.1 315.7 303.3 319.3C304.6 322.9 304.7 325.4 304.2 329.3C303.6 333.2 301.8 338.5 300.0 342.7C298.2 346.8 295.6 351.8 293.3 354.3C291.1 356.8 289.7 356.8 286.7 357.7C283.6 358.5 279.2 358.8 275.0 359.3C270.8 359.9 265.5 360.6 261.3 361.0C257.2 361.4 251.9 373.6 250.0 361.8C248.1 350.0 248.1 302.0 250.0 290.2Z" fill="#ff0000" stroke="#ff0000" stroke-width="3.4" stroke-linejoin="round"/><path d="M271.7 400.0C272.0 395.0 274.2 390.3 276.7 386.0C279.2 381.7 282.8 377.6 286.7 374.3C290.6 371.0 295.6 367.7 300.0 366.0C304.4 364.3 308.9 364.3 313.3 364.3C317.8 364.3 322.2 364.9 326.7 366.0C331.1 367.1 336.1 368.8 340.0 371.0C343.9 373.2 347.2 376.2 350.0 379.3C352.8 382.4 355.1 385.9 356.7 389.3C358.3 392.8 359.2 396.6 359.5 400.0C359.8 403.4 359.9 406.5 358.7 410.0C357.5 413.5 355.6 417.3 352.5 421.0C349.4 424.7 344.6 429.1 340.0 432.2C335.4 435.3 330.0 437.9 325.0 439.7C320.0 441.5 314.2 442.8 310.0 443.0C305.8 443.2 304.2 443.0 300.0 441.0C295.8 439.0 289.2 435.2 285.0 431.0C280.8 426.8 277.2 421.2 275.0 416.0C272.8 410.8 271.4 405.0 271.7 400.0Z" fill="#ff0000" stroke="#ff0000" stroke-width="3.2" stroke-linejoin="round"/><path d="M470.0 285.0C476.1 282.7 485.8 285.2 491.7 286.5C497.5 287.8 501.1 290.2 505.0 292.7C508.9 295.1 512.4 297.7 515.0 301.0C517.6 304.3 519.4 309.3 520.3 312.7C521.3 316.0 521.9 317.9 520.8 321.0C519.8 324.1 517.4 327.1 514.2 331.0C511.0 334.9 506.0 340.0 501.7 344.3C497.4 348.6 492.2 353.9 488.3 356.8C484.4 359.8 483.1 361.3 478.3 361.8C473.6 362.4 465.3 360.9 460.0 360.2C454.7 359.5 450.6 359.5 446.7 357.7C442.8 355.9 439.4 352.9 436.7 349.3C433.9 345.7 431.4 340.0 430.0 336.0C428.6 332.0 426.9 328.6 428.3 325.2C429.7 321.7 433.9 319.3 438.3 315.2C442.8 311.0 449.7 305.2 455.0 300.2C460.3 295.1 463.9 287.3 470.0 285.0Z" fill="#ff0000" stroke="#ff0000" stroke-width="3.2" stroke-linejoin="round"/><ellipse cx="436.2" cy="290.2" rx="22.5" ry="8.0" transform="rotate(-37.9 436.2 290.2)" fill="#ff0000"/><path d="M525.0 379.0C524.0 375.0 524.8 369.1 524.2 366.0C523.7 362.9 523.0 361.8 521.7 360.5C520.4 359.2 517.9 359.1 516.5 358.3C515.1 357.5 513.3 355.5 513.3 355.5C513.3 355.5 513.4 352.8 514.5 351.5C515.6 350.2 517.8 348.8 520.0 347.5C522.2 346.2 525.2 345.2 528.0 344.0C530.8 342.8 534.0 341.2 537.0 340.0C540.0 338.8 543.0 337.5 546.0 336.5C549.0 335.5 551.3 334.4 555.0 334.2C558.7 334.0 563.8 334.2 568.3 335.2C572.8 336.2 577.5 338.1 581.7 340.2C585.9 342.3 589.7 344.8 593.3 347.7C596.9 350.6 600.8 354.1 603.3 357.7C605.8 361.3 607.0 365.7 608.3 369.3C609.5 372.9 610.8 376.0 610.8 379.3C610.8 382.6 610.1 385.9 608.3 389.3C606.5 392.8 603.4 397.1 600.0 400.0C596.6 402.9 592.7 405.3 588.0 407.0C583.3 408.7 577.5 409.8 572.0 410.0C566.5 410.2 560.3 409.5 555.0 408.0C549.7 406.5 544.2 404.0 540.0 401.0C535.8 398.0 532.5 393.7 530.0 390.0C527.5 386.3 526.0 383.0 525.0 379.0Z" fill="#ff0000" stroke="#ff0000" stroke-width="3.2" stroke-linejoin="round"/><path d="M738.3 304.3C737.3 298.4 734.4 305.7 732.2 306.8C729.9 307.9 726.9 309.5 725.0 311.0C723.1 312.5 721.1 314.3 720.8 316.0C720.6 317.7 722.1 319.3 723.3 321.0C724.6 322.7 727.1 324.1 728.3 326.0C729.6 327.9 730.2 330.2 730.8 332.7C731.5 335.2 730.9 339.3 732.2 341.0C733.4 342.7 737.3 348.8 738.3 342.7C739.4 336.6 739.4 310.3 738.3 304.3Z" fill="#ff0000" stroke="#ff0000" stroke-width="6.6" stroke-linejoin="round"/></g><g transform="rotate(180 494.5 389.0)"><path d="M368.3 180.3C372.5 180.5 377.9 180.9 381.7 182.8C385.4 184.8 388.7 188.2 390.8 192.0C393.0 195.8 394.7 201.2 394.7 205.3C394.7 209.5 393.0 213.7 390.8 217.0C388.7 220.3 385.1 223.5 381.7 225.3C378.2 227.1 374.2 227.8 370.0 227.8C365.8 227.9 360.7 227.2 356.7 225.7C352.6 224.1 348.6 221.6 345.8 218.7C343.1 215.7 340.7 211.7 340.0 207.8C339.3 203.9 340.3 198.8 341.7 195.3C343.1 191.9 345.8 189.2 348.3 187.0C350.8 184.8 353.3 183.1 356.7 182.0C360.0 180.9 364.2 180.2 368.3 180.3Z" fill="#ff0000" stroke="#ff0000" stroke-width="4.4" stroke-linejoin="round"/><path d="M314.2 229.1C317.2 229.2 321.4 229.3 324.2 230.8C327.0 232.3 329.6 235.5 330.9 238.0C332.2 240.5 332.4 243.2 332.2 245.8C332.0 248.4 331.1 251.4 329.8 253.6C328.5 255.8 326.8 257.8 324.2 259.1C321.6 260.4 317.7 261.5 314.2 261.6C310.7 261.7 306.2 261.0 303.1 259.7C300.0 258.4 297.1 255.9 295.3 253.6C293.5 251.3 292.5 248.2 292.2 245.8C291.9 243.4 292.6 241.1 293.7 239.1C294.8 237.1 296.6 235.1 298.7 233.6C300.8 232.1 303.8 230.8 306.4 230.0C309.0 229.2 311.2 229.0 314.2 229.1Z" fill="#ff0000" stroke="#ff0000" stroke-width="9.2" stroke-linejoin="round"/><path d="M250.0 193.7C251.9 190.8 259.0 193.9 261.3 194.5C263.7 195.1 263.5 195.8 264.2 197.0C264.8 198.2 265.4 200.1 265.3 201.7C265.2 203.2 264.3 204.9 263.7 206.2C263.0 207.5 263.6 208.5 261.3 209.5C259.1 210.5 251.9 214.6 250.0 212.0C248.1 209.4 248.1 196.6 250.0 193.7Z" fill="#ff0000" stroke="#ff0000" stroke-width="4.0" stroke-linejoin="round"/><path d="M423.0 225.3C428.0 225.6 434.0 227.2 438.0 229.5C442.0 231.8 445.2 236.1 447.0 239.0C448.8 241.9 449.1 244.3 449.0 247.0C448.9 249.7 449.0 252.2 446.7 255.3C444.4 258.4 439.4 263.1 435.0 265.3C430.6 267.5 424.5 268.7 420.0 268.7C415.5 268.7 411.3 267.3 408.0 265.5C404.7 263.7 401.8 261.1 400.0 258.0C398.2 254.9 397.2 250.7 397.0 247.0C396.8 243.3 397.2 239.2 399.0 236.0C400.8 232.8 404.0 229.8 408.0 228.0C412.0 226.2 418.0 225.1 423.0 225.3Z" fill="#ff0000" stroke="#ff0000" stroke-width="6.4" stroke-linejoin="round"/><path d="M488.3 213.7C491.1 213.6 495.7 213.6 498.3 215.0C501.0 216.4 503.3 219.4 504.2 222.0C505.0 224.6 504.3 227.3 503.3 230.3C502.4 233.4 500.8 238.0 498.3 240.3C495.8 242.7 491.7 244.2 488.3 244.5C485.0 244.8 481.2 243.5 478.3 242.0C475.4 240.5 472.2 237.6 470.8 235.3C469.4 233.1 469.3 231.2 470.0 228.7C470.7 226.2 473.1 222.5 475.0 220.3C476.9 218.2 479.4 216.8 481.7 215.7C483.9 214.6 485.6 213.8 488.3 213.7Z" fill="#ff0000"/><path d="M408.3 172.0C403.8 172.8 407.2 175.6 408.3 177.0C409.4 178.4 412.8 179.8 415.0 180.7C417.2 181.5 419.2 182.0 421.7 182.0C424.2 182.0 427.6 181.5 430.0 180.7C432.4 179.8 434.9 178.4 435.8 177.0C436.8 175.6 440.4 172.8 435.8 172.0C431.2 171.2 412.9 171.2 408.3 172.0Z" fill="#ff0000" stroke="#ff0000" stroke-width="6.0" stroke-linejoin="round"/><path d="M555.0 235.8C551.4 236.6 547.2 239.3 543.3 242.0C539.4 244.7 534.6 248.7 531.7 252.0C528.8 255.3 526.9 258.1 525.8 262.0C524.7 265.9 525.0 271.3 525.0 275.3C525.0 279.3 525.0 282.6 525.5 286.0C526.0 289.4 526.4 292.7 528.3 296.0C530.2 299.3 533.6 303.2 536.7 306.0C539.8 308.8 543.7 311.0 546.7 312.7C549.8 314.4 552.2 315.7 555.0 316.0C557.8 316.3 560.5 314.4 563.3 314.3C566.1 314.2 568.9 314.9 571.7 315.2C574.5 315.5 577.2 316.6 580.0 316.0C582.8 315.4 585.0 313.8 588.3 311.8C591.6 309.9 596.7 306.9 600.0 304.3C603.3 301.7 606.4 299.2 608.3 296.0C610.2 292.8 610.7 288.4 611.5 285.0C612.3 281.6 612.8 278.7 613.2 275.5C613.6 272.3 614.3 268.9 614.0 266.0C613.7 263.1 612.7 260.5 611.5 258.0C610.3 255.5 609.2 253.7 606.7 251.0C604.2 248.3 600.3 244.5 596.7 242.0C593.1 239.5 588.9 237.3 585.0 236.2C581.1 235.1 576.6 235.2 573.3 235.3C570.0 235.4 568.0 236.9 565.0 237.0C562.0 237.1 558.6 235.0 555.0 235.8Z" fill="#ff0000" stroke="#ff0000" stroke-width="3.2" stroke-linejoin="round"/><path d="M625.5 262.0C625.5 262.0 631.0 254.1 634.0 251.0C637.0 247.9 639.8 246.0 643.3 243.7C646.8 241.4 651.9 238.5 655.0 237.0C658.1 235.5 660.1 234.2 661.7 234.5C663.3 234.8 664.5 236.9 664.5 238.7C664.5 240.4 662.9 243.3 662.0 245.0C661.1 246.7 659.2 249.0 659.2 249.0C659.2 249.0 666.8 247.0 671.7 245.3C676.7 243.6 685.4 239.7 688.9 238.6C692.4 237.5 691.5 238.2 693.0 238.8C694.5 239.5 695.7 240.6 698.0 242.5C700.3 244.4 704.1 247.9 706.7 250.4C709.3 252.9 711.8 255.3 713.8 257.6C715.8 259.9 717.9 261.6 719.0 264.0C720.1 266.4 720.1 269.2 720.5 272.0C720.9 274.8 721.5 278.0 721.3 280.7C721.1 283.4 720.5 285.8 719.5 288.0C718.5 290.2 717.4 291.8 715.5 294.0C713.6 296.2 711.7 297.9 708.3 301.0C704.9 304.1 698.9 309.5 695.0 312.7C691.1 315.9 687.8 318.5 685.0 320.2C682.2 321.9 680.5 322.6 678.3 322.7C676.1 322.8 675.0 322.2 671.7 321.0C668.4 319.8 662.5 317.6 658.3 315.2C654.1 312.8 650.3 310.0 646.7 306.8C643.1 303.6 639.1 299.5 636.7 296.0C634.3 292.5 632.9 288.9 632.5 286.0C632.1 283.1 633.4 281.0 634.2 278.7C635.0 276.4 636.5 273.9 637.5 272.0C638.5 270.1 640.0 267.3 640.0 267.3C640.0 267.3 635.7 269.6 633.3 268.7C630.9 267.8 625.5 262.0 625.5 262.0Z" fill="#ff0000" stroke="#ff0000" stroke-width="3.2" stroke-linejoin="round"/><path d="M621.0 258.0C621.8 256.7 626.1 255.2 627.0 256.0C627.9 256.8 626.2 261.2 626.5 263.0C626.8 264.8 627.8 266.4 629.0 267.0C630.2 267.6 632.2 266.7 634.0 266.5C635.8 266.3 638.8 265.7 640.0 266.0C641.2 266.3 642.0 267.9 641.0 268.5C640.0 269.1 636.3 269.2 634.0 269.3C631.7 269.4 628.9 269.7 627.0 268.8C625.1 267.9 623.5 265.8 622.5 264.0C621.5 262.2 620.2 259.3 621.0 258.0Z" fill="#ff0000"/><path d="M696.7 165.0C696.7 165.0 691.5 180.0 690.0 185.3C688.5 190.6 687.4 192.8 687.5 197.0C687.6 201.2 689.0 206.3 690.8 210.3C692.6 214.3 695.1 218.3 698.3 221.2C701.5 224.1 706.1 226.3 710.0 227.8C713.9 229.3 718.0 229.7 721.7 230.3C725.4 230.9 727.3 231.0 732.0 231.2C736.7 231.4 750.0 231.5 750.0 231.5C750.0 231.5 750.0 165.0 750.0 165.0C750.0 165.0 696.7 165.0 696.7 165.0Z" fill="#ff0000" stroke="#ff0000" stroke-width="3.4" stroke-linejoin="round"/><path d="M250.0 290.2C251.9 278.4 257.7 290.4 261.3 291.0C264.9 291.6 267.7 292.2 271.7 293.5C275.6 294.8 280.8 296.1 285.0 298.5C289.2 300.9 293.6 304.2 296.7 307.7C299.7 311.1 302.1 315.7 303.3 319.3C304.6 322.9 304.7 325.4 304.2 329.3C303.6 333.2 301.8 338.5 300.0 342.7C298.2 346.8 295.6 351.8 293.3 354.3C291.1 356.8 289.7 356.8 286.7 357.7C283.6 358.5 279.2 358.8 275.0 359.3C270.8 359.9 265.5 360.6 261.3 361.0C257.2 361.4 251.9 373.6 250.0 361.8C248.1 350.0 248.1 302.0 250.0 290.2Z" fill="#ff0000" stroke="#ff0000" stroke-width="3.4" stroke-linejoin="round"/><path d="M271.7 400.0C272.0 395.0 274.2 390.3 276.7 386.0C279.2 381.7 282.8 377.6 286.7 374.3C290.6 371.0 295.6 367.7 300.0 366.0C304.4 364.3 308.9 364.3 313.3 364.3C317.8 364.3 322.2 364.9 326.7 366.0C331.1 367.1 336.1 368.8 340.0 371.0C343.9 373.2 347.2 376.2 350.0 379.3C352.8 382.4 355.1 385.9 356.7 389.3C358.3 392.8 359.2 396.6 359.5 400.0C359.8 403.4 359.9 406.5 358.7 410.0C357.5 413.5 355.6 417.3 352.5 421.0C349.4 424.7 344.6 429.1 340.0 432.2C335.4 435.3 330.0 437.9 325.0 439.7C320.0 441.5 314.2 442.8 310.0 443.0C305.8 443.2 304.2 443.0 300.0 441.0C295.8 439.0 289.2 435.2 285.0 431.0C280.8 426.8 277.2 421.2 275.0 416.0C272.8 410.8 271.4 405.0 271.7 400.0Z" fill="#ff0000" stroke="#ff0000" stroke-width="3.2" stroke-linejoin="round"/><path d="M470.0 285.0C476.1 282.7 485.8 285.2 491.7 286.5C497.5 287.8 501.1 290.2 505.0 292.7C508.9 295.1 512.4 297.7 515.0 301.0C517.6 304.3 519.4 309.3 520.3 312.7C521.3 316.0 521.9 317.9 520.8 321.0C519.8 324.1 517.4 327.1 514.2 331.0C511.0 334.9 506.0 340.0 501.7 344.3C497.4 348.6 492.2 353.9 488.3 356.8C484.4 359.8 483.1 361.3 478.3 361.8C473.6 362.4 465.3 360.9 460.0 360.2C454.7 359.5 450.6 359.5 446.7 357.7C442.8 355.9 439.4 352.9 436.7 349.3C433.9 345.7 431.4 340.0 430.0 336.0C428.6 332.0 426.9 328.6 428.3 325.2C429.7 321.7 433.9 319.3 438.3 315.2C442.8 311.0 449.7 305.2 455.0 300.2C460.3 295.1 463.9 287.3 470.0 285.0Z" fill="#ff0000" stroke="#ff0000" stroke-width="3.2" stroke-linejoin="round"/><ellipse cx="436.2" cy="290.2" rx="22.5" ry="8.0" transform="rotate(-37.9 436.2 290.2)" fill="#ff0000"/><path d="M525.0 379.0C524.0 375.0 524.8 369.1 524.2 366.0C523.7 362.9 523.0 361.8 521.7 360.5C520.4 359.2 517.9 359.1 516.5 358.3C515.1 357.5 513.3 355.5 513.3 355.5C513.3 355.5 513.4 352.8 514.5 351.5C515.6 350.2 517.8 348.8 520.0 347.5C522.2 346.2 525.2 345.2 528.0 344.0C530.8 342.8 534.0 341.2 537.0 340.0C540.0 338.8 543.0 337.5 546.0 336.5C549.0 335.5 551.3 334.4 555.0 334.2C558.7 334.0 563.8 334.2 568.3 335.2C572.8 336.2 577.5 338.1 581.7 340.2C585.9 342.3 589.7 344.8 593.3 347.7C596.9 350.6 600.8 354.1 603.3 357.7C605.8 361.3 607.0 365.7 608.3 369.3C609.5 372.9 610.8 376.0 610.8 379.3C610.8 382.6 610.1 385.9 608.3 389.3C606.5 392.8 603.4 397.1 600.0 400.0C596.6 402.9 592.7 405.3 588.0 407.0C583.3 408.7 577.5 409.8 572.0 410.0C566.5 410.2 560.3 409.5 555.0 408.0C549.7 406.5 544.2 404.0 540.0 401.0C535.8 398.0 532.5 393.7 530.0 390.0C527.5 386.3 526.0 383.0 525.0 379.0Z" fill="#ff0000" stroke="#ff0000" stroke-width="3.2" stroke-linejoin="round"/><path d="M738.3 304.3C737.3 298.4 734.4 305.7 732.2 306.8C729.9 307.9 726.9 309.5 725.0 311.0C723.1 312.5 721.1 314.3 720.8 316.0C720.6 317.7 722.1 319.3 723.3 321.0C724.6 322.7 727.1 324.1 728.3 326.0C729.6 327.9 730.2 330.2 730.8 332.7C731.5 335.2 730.9 339.3 732.2 341.0C733.4 342.7 737.3 348.8 738.3 342.7C739.4 336.6 739.4 310.3 738.3 304.3Z" fill="#ff0000" stroke="#ff0000" stroke-width="6.6" stroke-linejoin="round"/></g>
<g><path d="M736.7 238.7C735.4 234.4 730.8 240.9 729.2 242.8C727.6 244.8 727.1 247.4 727.0 250.3C726.9 253.2 727.3 257.4 728.3 260.3C729.4 263.2 731.9 266.4 733.3 267.8C734.7 269.2 736.1 273.5 736.7 268.7C737.2 263.8 737.9 243.0 736.7 238.7Z" fill="#0080ff"/><path d="M434.7 309.2 L461.3 286.8" stroke="#0080ff" stroke-width="9.2" stroke-linecap="round" fill="none"/><path d="M492.7 357.0 L512.3 340.0" stroke="#0080ff" stroke-width="9.0" stroke-linecap="round" fill="none"/><path d="M475.5 369.5L517 369.5Q521 369.7 521.3 374L522.3 399.5Q522.3 405.5 518 405.5L477 405.5Q471.5 405.3 471.3 399.5L470.8 375Q471 369.7 475.5 369.5Z" fill="#0080ff" stroke="#0080ff" stroke-width="6.0" stroke-linejoin="round"/><path d="M623.3 297.7C625.8 297.9 629.7 297.9 633.3 300.2C636.9 302.4 641.9 307.5 645.0 311.0C648.1 314.5 650.7 318.2 651.7 321.0C652.6 323.8 652.5 324.9 650.8 327.7C649.2 330.4 645.1 334.3 641.7 337.7C638.2 341.0 633.1 345.6 630.0 347.7C626.9 349.8 625.6 350.2 623.3 350.2C621.1 350.2 619.7 349.8 616.7 347.7C613.6 345.6 608.3 340.7 605.0 337.7C601.7 334.6 598.3 332.0 596.7 329.3C595.0 326.7 594.4 324.6 595.0 321.8C595.6 319.1 597.2 315.9 600.0 312.7C602.8 309.5 608.6 305.0 611.7 302.7C614.7 300.3 616.4 299.3 618.3 298.5C620.3 297.7 620.8 297.4 623.3 297.7Z" fill="#0080ff" stroke="#0080ff" stroke-width="6.0" stroke-linejoin="round"/><path d="M472.5 267.0C473.1 265.2 474.0 262.8 476.7 261.2C479.3 259.5 483.9 258.5 488.3 257.0C492.8 255.5 499.0 252.8 503.3 252.0C507.6 251.2 511.8 250.9 514.2 252.0C516.5 253.1 516.9 255.6 517.5 258.7C518.1 261.7 518.1 267.0 517.5 270.3C516.9 273.7 516.2 276.7 514.2 278.7C512.1 280.6 508.8 281.7 505.0 282.0C501.2 282.3 496.1 281.4 491.7 280.3C487.2 279.2 481.4 276.7 478.3 275.3C475.2 273.9 474.0 273.4 473.0 272.0C472.0 270.6 471.9 268.8 472.5 267.0Z" fill="#0080ff"/><path d="M251.7 366.8C253.3 358.5 258.8 367.5 261.3 367.7C263.8 367.8 265.1 366.8 266.7 367.7C268.2 368.5 270.3 370.4 270.8 372.7C271.4 374.9 270.6 377.7 270.0 381.0C269.4 384.3 268.0 389.3 267.0 392.7C266.0 396.0 265.0 398.2 264.2 401.0C263.3 403.8 262.7 406.6 262.0 409.3C261.3 412.1 261.7 416.3 260.0 417.7C258.3 419.1 253.1 426.1 251.7 417.7C250.3 409.2 250.1 375.2 251.7 366.8Z" fill="#0080ff" stroke="#0080ff" stroke-width="6.0" stroke-linejoin="round"/></g><g transform="rotate(180 496.8 387.5)"><path d="M736.7 238.7C735.4 234.4 730.8 240.9 729.2 242.8C727.6 244.8 727.1 247.4 727.0 250.3C726.9 253.2 727.3 257.4 728.3 260.3C729.4 263.2 731.9 266.4 733.3 267.8C734.7 269.2 736.1 273.5 736.7 268.7C737.2 263.8 737.9 243.0 736.7 238.7Z" fill="#0080ff"/><path d="M434.7 309.2 L461.3 286.8" stroke="#0080ff" stroke-width="9.2" stroke-linecap="round" fill="none"/><path d="M492.7 357.0 L512.3 340.0" stroke="#0080ff" stroke-width="9.0" stroke-linecap="round" fill="none"/><path d="M475.5 369.5L517 369.5Q521 369.7 521.3 374L522.3 399.5Q522.3 405.5 518 405.5L477 405.5Q471.5 405.3 471.3 399.5L470.8 375Q471 369.7 475.5 369.5Z" fill="#0080ff" stroke="#0080ff" stroke-width="6.0" stroke-linejoin="round"/><path d="M623.3 297.7C625.8 297.9 629.7 297.9 633.3 300.2C636.9 302.4 641.9 307.5 645.0 311.0C648.1 314.5 650.7 318.2 651.7 321.0C652.6 323.8 652.5 324.9 650.8 327.7C649.2 330.4 645.1 334.3 641.7 337.7C638.2 341.0 633.1 345.6 630.0 347.7C626.9 349.8 625.6 350.2 623.3 350.2C621.1 350.2 619.7 349.8 616.7 347.7C613.6 345.6 608.3 340.7 605.0 337.7C601.7 334.6 598.3 332.0 596.7 329.3C595.0 326.7 594.4 324.6 595.0 321.8C595.6 319.1 597.2 315.9 600.0 312.7C602.8 309.5 608.6 305.0 611.7 302.7C614.7 300.3 616.4 299.3 618.3 298.5C620.3 297.7 620.8 297.4 623.3 297.7Z" fill="#0080ff" stroke="#0080ff" stroke-width="6.0" stroke-linejoin="round"/><path d="M472.5 267.0C473.1 265.2 474.0 262.8 476.7 261.2C479.3 259.5 483.9 258.5 488.3 257.0C492.8 255.5 499.0 252.8 503.3 252.0C507.6 251.2 511.8 250.9 514.2 252.0C516.5 253.1 516.9 255.6 517.5 258.7C518.1 261.7 518.1 267.0 517.5 270.3C516.9 273.7 516.2 276.7 514.2 278.7C512.1 280.6 508.8 281.7 505.0 282.0C501.2 282.3 496.1 281.4 491.7 280.3C487.2 279.2 481.4 276.7 478.3 275.3C475.2 273.9 474.0 273.4 473.0 272.0C472.0 270.6 471.9 268.8 472.5 267.0Z" fill="#0080ff"/><path d="M251.7 366.8C253.3 358.5 258.8 367.5 261.3 367.7C263.8 367.8 265.1 366.8 266.7 367.7C268.2 368.5 270.3 370.4 270.8 372.7C271.4 374.9 270.6 377.7 270.0 381.0C269.4 384.3 268.0 389.3 267.0 392.7C266.0 396.0 265.0 398.2 264.2 401.0C263.3 403.8 262.7 406.6 262.0 409.3C261.3 412.1 261.7 416.3 260.0 417.7C258.3 419.1 253.1 426.1 251.7 417.7C250.3 409.2 250.1 375.2 251.7 366.8Z" fill="#0080ff" stroke="#0080ff" stroke-width="6.0" stroke-linejoin="round"/></g>
<g><ellipse cx="710.3" cy="305.6" rx="11.0" ry="2.2" transform="rotate(-40.0 710.3 305.6)" fill="#00ffff"/></g><g transform="rotate(180 496.8 387.5)"><ellipse cx="710.3" cy="305.6" rx="11.0" ry="2.2" transform="rotate(-40.0 710.3 305.6)" fill="#00ffff"/></g>
<g><path d="M368.3 180.3C372.5 180.5 377.9 180.9 381.7 182.8C385.4 184.8 388.7 188.2 390.8 192.0C393.0 195.8 394.7 201.2 394.7 205.3C394.7 209.5 393.0 213.7 390.8 217.0C388.7 220.3 385.1 223.5 381.7 225.3C378.2 227.1 374.2 227.8 370.0 227.8C365.8 227.9 360.7 227.2 356.7 225.7C352.6 224.1 348.6 221.6 345.8 218.7C343.1 215.7 340.7 211.7 340.0 207.8C339.3 203.9 340.3 198.8 341.7 195.3C343.1 191.9 345.8 189.2 348.3 187.0C350.8 184.8 353.3 183.1 356.7 182.0C360.0 180.9 364.2 180.2 368.3 180.3Z" fill="#008000"/><path d="M314.2 229.1C317.2 229.2 321.4 229.3 324.2 230.8C327.0 232.3 329.6 235.5 330.9 238.0C332.2 240.5 332.4 243.2 332.2 245.8C332.0 248.4 331.1 251.4 329.8 253.6C328.5 255.8 326.8 257.8 324.2 259.1C321.6 260.4 317.7 261.5 314.2 261.6C310.7 261.7 306.2 261.0 303.1 259.7C300.0 258.4 297.1 255.9 295.3 253.6C293.5 251.3 292.5 248.2 292.2 245.8C291.9 243.4 292.6 241.1 293.7 239.1C294.8 237.1 296.6 235.1 298.7 233.6C300.8 232.1 303.8 230.8 306.4 230.0C309.0 229.2 311.2 229.0 314.2 229.1Z" fill="#008000"/><path d="M250.0 193.7C251.9 190.8 259.0 193.9 261.3 194.5C263.7 195.1 263.5 195.8 264.2 197.0C264.8 198.2 265.4 200.1 265.3 201.7C265.2 203.2 264.3 204.9 263.7 206.2C263.0 207.5 263.6 208.5 261.3 209.5C259.1 210.5 251.9 214.6 250.0 212.0C248.1 209.4 248.1 196.6 250.0 193.7Z" fill="#008000"/><path d="M423.0 225.3C428.0 225.6 434.0 227.2 438.0 229.5C442.0 231.8 445.2 236.1 447.0 239.0C448.8 241.9 449.1 244.3 449.0 247.0C448.9 249.7 449.0 252.2 446.7 255.3C444.4 258.4 439.4 263.1 435.0 265.3C430.6 267.5 424.5 268.7 420.0 268.7C415.5 268.7 411.3 267.3 408.0 265.5C404.7 263.7 401.8 261.1 400.0 258.0C398.2 254.9 397.2 250.7 397.0 247.0C396.8 243.3 397.2 239.2 399.0 236.0C400.8 232.8 404.0 229.8 408.0 228.0C412.0 226.2 418.0 225.1 423.0 225.3Z" fill="#008000"/><path d="M488.3 221.2C490.8 221.4 494.4 223.8 495.8 225.3C497.3 226.9 497.6 228.2 497.2 230.3C496.8 232.4 495.1 236.2 493.3 237.8C491.6 239.5 488.9 240.3 486.7 240.3C484.4 240.3 481.6 239.4 480.0 237.8C478.4 236.3 476.9 233.5 477.0 231.2C477.1 228.9 478.9 225.7 480.8 224.0C482.7 222.3 485.8 220.9 488.3 221.2Z" fill="#008000"/><path d="M408.3 172.0C403.8 172.8 407.2 175.6 408.3 177.0C409.4 178.4 412.8 179.8 415.0 180.7C417.2 181.5 419.2 182.0 421.7 182.0C424.2 182.0 427.6 181.5 430.0 180.7C432.4 179.8 434.9 178.4 435.8 177.0C436.8 175.6 440.4 172.8 435.8 172.0C431.2 171.2 412.9 171.2 408.3 172.0Z" fill="#008000"/><path d="M555.0 235.8C551.4 236.6 547.2 239.3 543.3 242.0C539.4 244.7 534.6 248.7 531.7 252.0C528.8 255.3 526.9 258.1 525.8 262.0C524.7 265.9 525.0 271.3 525.0 275.3C525.0 279.3 525.0 282.6 525.5 286.0C526.0 289.4 526.4 292.7 528.3 296.0C530.2 299.3 533.6 303.2 536.7 306.0C539.8 308.8 543.7 311.0 546.7 312.7C549.8 314.4 552.2 315.7 555.0 316.0C557.8 316.3 560.5 314.4 563.3 314.3C566.1 314.2 568.9 314.9 571.7 315.2C574.5 315.5 577.2 316.6 580.0 316.0C582.8 315.4 585.0 313.8 588.3 311.8C591.6 309.9 596.7 306.9 600.0 304.3C603.3 301.7 606.4 299.2 608.3 296.0C610.2 292.8 610.7 288.4 611.5 285.0C612.3 281.6 612.8 278.7 613.2 275.5C613.6 272.3 614.3 268.9 614.0 266.0C613.7 263.1 612.7 260.5 611.5 258.0C610.3 255.5 609.2 253.7 606.7 251.0C604.2 248.3 600.3 244.5 596.7 242.0C593.1 239.5 588.9 237.3 585.0 236.2C581.1 235.1 576.6 235.2 573.3 235.3C570.0 235.4 568.0 236.9 565.0 237.0C562.0 237.1 558.6 235.0 555.0 235.8Z" fill="#008000"/><path d="M625.5 262.0C625.5 262.0 631.0 254.1 634.0 251.0C637.0 247.9 639.8 246.0 643.3 243.7C646.8 241.4 651.9 238.5 655.0 237.0C658.1 235.5 660.1 234.2 661.7 234.5C663.3 234.8 664.5 236.9 664.5 238.7C664.5 240.4 662.9 243.3 662.0 245.0C661.1 246.7 659.2 249.0 659.2 249.0C659.2 249.0 666.8 247.0 671.7 245.3C676.7 243.6 685.4 239.7 688.9 238.6C692.4 237.5 691.5 238.2 693.0 238.8C694.5 239.5 695.7 240.6 698.0 242.5C700.3 244.4 704.1 247.9 706.7 250.4C709.3 252.9 711.8 255.3 713.8 257.6C715.8 259.9 717.9 261.6 719.0 264.0C720.1 266.4 720.1 269.2 720.5 272.0C720.9 274.8 721.5 278.0 721.3 280.7C721.1 283.4 720.5 285.8 719.5 288.0C718.5 290.2 717.4 291.8 715.5 294.0C713.6 296.2 711.7 297.9 708.3 301.0C704.9 304.1 698.9 309.5 695.0 312.7C691.1 315.9 687.8 318.5 685.0 320.2C682.2 321.9 680.5 322.6 678.3 322.7C676.1 322.8 675.0 322.2 671.7 321.0C668.4 319.8 662.5 317.6 658.3 315.2C654.1 312.8 650.3 310.0 646.7 306.8C643.1 303.6 639.1 299.5 636.7 296.0C634.3 292.5 632.9 288.9 632.5 286.0C632.1 283.1 633.4 281.0 634.2 278.7C635.0 276.4 636.5 273.9 637.5 272.0C638.5 270.1 640.0 267.3 640.0 267.3C640.0 267.3 635.7 269.6 633.3 268.7C630.9 267.8 625.5 262.0 625.5 262.0Z" fill="#008000"/><path d="M696.7 165.0C696.7 165.0 691.5 180.0 690.0 185.3C688.5 190.6 687.4 192.8 687.5 197.0C687.6 201.2 689.0 206.3 690.8 210.3C692.6 214.3 695.1 218.3 698.3 221.2C701.5 224.1 706.1 226.3 710.0 227.8C713.9 229.3 718.0 229.7 721.7 230.3C725.4 230.9 727.3 231.0 732.0 231.2C736.7 231.4 750.0 231.5 750.0 231.5C750.0 231.5 750.0 165.0 750.0 165.0C750.0 165.0 696.7 165.0 696.7 165.0Z" fill="#008000"/><path d="M250.0 290.2C251.9 278.4 257.7 290.4 261.3 291.0C264.9 291.6 267.7 292.2 271.7 293.5C275.6 294.8 280.8 296.1 285.0 298.5C289.2 300.9 293.6 304.2 296.7 307.7C299.7 311.1 302.1 315.7 303.3 319.3C304.6 322.9 304.7 325.4 304.2 329.3C303.6 333.2 301.8 338.5 300.0 342.7C298.2 346.8 295.6 351.8 293.3 354.3C291.1 356.8 289.7 356.8 286.7 357.7C283.6 358.5 279.2 358.8 275.0 359.3C270.8 359.9 265.5 360.6 261.3 361.0C257.2 361.4 251.9 373.6 250.0 361.8C248.1 350.0 248.1 302.0 250.0 290.2Z" fill="#008000"/><path d="M271.7 400.0C272.0 395.0 274.2 390.3 276.7 386.0C279.2 381.7 282.8 377.6 286.7 374.3C290.6 371.0 295.6 367.7 300.0 366.0C304.4 364.3 308.9 364.3 313.3 364.3C317.8 364.3 322.2 364.9 326.7 366.0C331.1 367.1 336.1 368.8 340.0 371.0C343.9 373.2 347.2 376.2 350.0 379.3C352.8 382.4 355.1 385.9 356.7 389.3C358.3 392.8 359.2 396.6 359.5 400.0C359.8 403.4 359.9 406.5 358.7 410.0C357.5 413.5 355.6 417.3 352.5 421.0C349.4 424.7 344.6 429.1 340.0 432.2C335.4 435.3 330.0 437.9 325.0 439.7C320.0 441.5 314.2 442.8 310.0 443.0C305.8 443.2 304.2 443.0 300.0 441.0C295.8 439.0 289.2 435.2 285.0 431.0C280.8 426.8 277.2 421.2 275.0 416.0C272.8 410.8 271.4 405.0 271.7 400.0Z" fill="#008000"/><path d="M470.0 285.0C476.1 282.7 485.8 285.2 491.7 286.5C497.5 287.8 501.1 290.2 505.0 292.7C508.9 295.1 512.4 297.7 515.0 301.0C517.6 304.3 519.4 309.3 520.3 312.7C521.3 316.0 521.9 317.9 520.8 321.0C519.8 324.1 517.4 327.1 514.2 331.0C511.0 334.9 506.0 340.0 501.7 344.3C497.4 348.6 492.2 353.9 488.3 356.8C484.4 359.8 483.1 361.3 478.3 361.8C473.6 362.4 465.3 360.9 460.0 360.2C454.7 359.5 450.6 359.5 446.7 357.7C442.8 355.9 439.4 352.9 436.7 349.3C433.9 345.7 431.4 340.0 430.0 336.0C428.6 332.0 426.9 328.6 428.3 325.2C429.7 321.7 433.9 319.3 438.3 315.2C442.8 311.0 449.7 305.2 455.0 300.2C460.3 295.1 463.9 287.3 470.0 285.0Z" fill="#008000"/><ellipse cx="436.2" cy="290.2" rx="20.0" ry="5.5" transform="rotate(-37.9 436.2 290.2)" fill="#008000"/><path d="M525.0 379.0C524.0 375.0 524.8 369.1 524.2 366.0C523.7 362.9 523.0 361.8 521.7 360.5C520.4 359.2 517.9 359.1 516.5 358.3C515.1 357.5 513.3 355.5 513.3 355.5C513.3 355.5 513.4 352.8 514.5 351.5C515.6 350.2 517.8 348.8 520.0 347.5C522.2 346.2 525.2 345.2 528.0 344.0C530.8 342.8 534.0 341.2 537.0 340.0C540.0 338.8 543.0 337.5 546.0 336.5C549.0 335.5 551.3 334.4 555.0 334.2C558.7 334.0 563.8 334.2 568.3 335.2C572.8 336.2 577.5 338.1 581.7 340.2C585.9 342.3 589.7 344.8 593.3 347.7C596.9 350.6 600.8 354.1 603.3 357.7C605.8 361.3 607.0 365.7 608.3 369.3C609.5 372.9 610.8 376.0 610.8 379.3C610.8 382.6 610.1 385.9 608.3 389.3C606.5 392.8 603.4 397.1 600.0 400.0C596.6 402.9 592.7 405.3 588.0 407.0C583.3 408.7 577.5 409.8 572.0 410.0C566.5 410.2 560.3 409.5 555.0 408.0C549.7 406.5 544.2 404.0 540.0 401.0C535.8 398.0 532.5 393.7 530.0 390.0C527.5 386.3 526.0 383.0 525.0 379.0Z" fill="#008000"/><path d="M738.3 304.3C737.3 298.4 734.4 305.7 732.2 306.8C729.9 307.9 726.9 309.5 725.0 311.0C723.1 312.5 721.1 314.3 720.8 316.0C720.6 317.7 722.1 319.3 723.3 321.0C724.6 322.7 727.1 324.1 728.3 326.0C729.6 327.9 730.2 330.2 730.8 332.7C731.5 335.2 730.9 339.3 732.2 341.0C733.4 342.7 737.3 348.8 738.3 342.7C739.4 336.6 739.4 310.3 738.3 304.3Z" fill="#008000"/></g><g transform="rotate(180 494.5 389.0)"><path d="M368.3 180.3C372.5 180.5 377.9 180.9 381.7 182.8C385.4 184.8 388.7 188.2 390.8 192.0C393.0 195.8 394.7 201.2 394.7 205.3C394.7 209.5 393.0 213.7 390.8 217.0C388.7 220.3 385.1 223.5 381.7 225.3C378.2 227.1 374.2 227.8 370.0 227.8C365.8 227.9 360.7 227.2 356.7 225.7C352.6 224.1 348.6 221.6 345.8 218.7C343.1 215.7 340.7 211.7 340.0 207.8C339.3 203.9 340.3 198.8 341.7 195.3C343.1 191.9 345.8 189.2 348.3 187.0C350.8 184.8 353.3 183.1 356.7 182.0C360.0 180.9 364.2 180.2 368.3 180.3Z" fill="#008000"/><path d="M314.2 229.1C317.2 229.2 321.4 229.3 324.2 230.8C327.0 232.3 329.6 235.5 330.9 238.0C332.2 240.5 332.4 243.2 332.2 245.8C332.0 248.4 331.1 251.4 329.8 253.6C328.5 255.8 326.8 257.8 324.2 259.1C321.6 260.4 317.7 261.5 314.2 261.6C310.7 261.7 306.2 261.0 303.1 259.7C300.0 258.4 297.1 255.9 295.3 253.6C293.5 251.3 292.5 248.2 292.2 245.8C291.9 243.4 292.6 241.1 293.7 239.1C294.8 237.1 296.6 235.1 298.7 233.6C300.8 232.1 303.8 230.8 306.4 230.0C309.0 229.2 311.2 229.0 314.2 229.1Z" fill="#008000"/><path d="M250.0 193.7C251.9 190.8 259.0 193.9 261.3 194.5C263.7 195.1 263.5 195.8 264.2 197.0C264.8 198.2 265.4 200.1 265.3 201.7C265.2 203.2 264.3 204.9 263.7 206.2C263.0 207.5 263.6 208.5 261.3 209.5C259.1 210.5 251.9 214.6 250.0 212.0C248.1 209.4 248.1 196.6 250.0 193.7Z" fill="#008000"/><path d="M423.0 225.3C428.0 225.6 434.0 227.2 438.0 229.5C442.0 231.8 445.2 236.1 447.0 239.0C448.8 241.9 449.1 244.3 449.0 247.0C448.9 249.7 449.0 252.2 446.7 255.3C444.4 258.4 439.4 263.1 435.0 265.3C430.6 267.5 424.5 268.7 420.0 268.7C415.5 268.7 411.3 267.3 408.0 265.5C404.7 263.7 401.8 261.1 400.0 258.0C398.2 254.9 397.2 250.7 397.0 247.0C396.8 243.3 397.2 239.2 399.0 236.0C400.8 232.8 404.0 229.8 408.0 228.0C412.0 226.2 418.0 225.1 423.0 225.3Z" fill="#008000"/><path d="M488.3 221.2C490.8 221.4 494.4 223.8 495.8 225.3C497.3 226.9 497.6 228.2 497.2 230.3C496.8 232.4 495.1 236.2 493.3 237.8C491.6 239.5 488.9 240.3 486.7 240.3C484.4 240.3 481.6 239.4 480.0 237.8C478.4 236.3 476.9 233.5 477.0 231.2C477.1 228.9 478.9 225.7 480.8 224.0C482.7 222.3 485.8 220.9 488.3 221.2Z" fill="#008000"/><path d="M408.3 172.0C403.8 172.8 407.2 175.6 408.3 177.0C409.4 178.4 412.8 179.8 415.0 180.7C417.2 181.5 419.2 182.0 421.7 182.0C424.2 182.0 427.6 181.5 430.0 180.7C432.4 179.8 434.9 178.4 435.8 177.0C436.8 175.6 440.4 172.8 435.8 172.0C431.2 171.2 412.9 171.2 408.3 172.0Z" fill="#008000"/><path d="M555.0 235.8C551.4 236.6 547.2 239.3 543.3 242.0C539.4 244.7 534.6 248.7 531.7 252.0C528.8 255.3 526.9 258.1 525.8 262.0C524.7 265.9 525.0 271.3 525.0 275.3C525.0 279.3 525.0 282.6 525.5 286.0C526.0 289.4 526.4 292.7 528.3 296.0C530.2 299.3 533.6 303.2 536.7 306.0C539.8 308.8 543.7 311.0 546.7 312.7C549.8 314.4 552.2 315.7 555.0 316.0C557.8 316.3 560.5 314.4 563.3 314.3C566.1 314.2 568.9 314.9 571.7 315.2C574.5 315.5 577.2 316.6 580.0 316.0C582.8 315.4 585.0 313.8 588.3 311.8C591.6 309.9 596.7 306.9 600.0 304.3C603.3 301.7 606.4 299.2 608.3 296.0C610.2 292.8 610.7 288.4 611.5 285.0C612.3 281.6 612.8 278.7 613.2 275.5C613.6 272.3 614.3 268.9 614.0 266.0C613.7 263.1 612.7 260.5 611.5 258.0C610.3 255.5 609.2 253.7 606.7 251.0C604.2 248.3 600.3 244.5 596.7 242.0C593.1 239.5 588.9 237.3 585.0 236.2C581.1 235.1 576.6 235.2 573.3 235.3C570.0 235.4 568.0 236.9 565.0 237.0C562.0 237.1 558.6 235.0 555.0 235.8Z" fill="#008000"/><path d="M625.5 262.0C625.5 262.0 631.0 254.1 634.0 251.0C637.0 247.9 639.8 246.0 643.3 243.7C646.8 241.4 651.9 238.5 655.0 237.0C658.1 235.5 660.1 234.2 661.7 234.5C663.3 234.8 664.5 236.9 664.5 238.7C664.5 240.4 662.9 243.3 662.0 245.0C661.1 246.7 659.2 249.0 659.2 249.0C659.2 249.0 666.8 247.0 671.7 245.3C676.7 243.6 685.4 239.7 688.9 238.6C692.4 237.5 691.5 238.2 693.0 238.8C694.5 239.5 695.7 240.6 698.0 242.5C700.3 244.4 704.1 247.9 706.7 250.4C709.3 252.9 711.8 255.3 713.8 257.6C715.8 259.9 717.9 261.6 719.0 264.0C720.1 266.4 720.1 269.2 720.5 272.0C720.9 274.8 721.5 278.0 721.3 280.7C721.1 283.4 720.5 285.8 719.5 288.0C718.5 290.2 717.4 291.8 715.5 294.0C713.6 296.2 711.7 297.9 708.3 301.0C704.9 304.1 698.9 309.5 695.0 312.7C691.1 315.9 687.8 318.5 685.0 320.2C682.2 321.9 680.5 322.6 678.3 322.7C676.1 322.8 675.0 322.2 671.7 321.0C668.4 319.8 662.5 317.6 658.3 315.2C654.1 312.8 650.3 310.0 646.7 306.8C643.1 303.6 639.1 299.5 636.7 296.0C634.3 292.5 632.9 288.9 632.5 286.0C632.1 283.1 633.4 281.0 634.2 278.7C635.0 276.4 636.5 273.9 637.5 272.0C638.5 270.1 640.0 267.3 640.0 267.3C640.0 267.3 635.7 269.6 633.3 268.7C630.9 267.8 625.5 262.0 625.5 262.0Z" fill="#008000"/><path d="M696.7 165.0C696.7 165.0 691.5 180.0 690.0 185.3C688.5 190.6 687.4 192.8 687.5 197.0C687.6 201.2 689.0 206.3 690.8 210.3C692.6 214.3 695.1 218.3 698.3 221.2C701.5 224.1 706.1 226.3 710.0 227.8C713.9 229.3 718.0 229.7 721.7 230.3C725.4 230.9 727.3 231.0 732.0 231.2C736.7 231.4 750.0 231.5 750.0 231.5C750.0 231.5 750.0 165.0 750.0 165.0C750.0 165.0 696.7 165.0 696.7 165.0Z" fill="#008000"/><path d="M250.0 290.2C251.9 278.4 257.7 290.4 261.3 291.0C264.9 291.6 267.7 292.2 271.7 293.5C275.6 294.8 280.8 296.1 285.0 298.5C289.2 300.9 293.6 304.2 296.7 307.7C299.7 311.1 302.1 315.7 303.3 319.3C304.6 322.9 304.7 325.4 304.2 329.3C303.6 333.2 301.8 338.5 300.0 342.7C298.2 346.8 295.6 351.8 293.3 354.3C291.1 356.8 289.7 356.8 286.7 357.7C283.6 358.5 279.2 358.8 275.0 359.3C270.8 359.9 265.5 360.6 261.3 361.0C257.2 361.4 251.9 373.6 250.0 361.8C248.1 350.0 248.1 302.0 250.0 290.2Z" fill="#008000"/><path d="M271.7 400.0C272.0 395.0 274.2 390.3 276.7 386.0C279.2 381.7 282.8 377.6 286.7 374.3C290.6 371.0 295.6 367.7 300.0 366.0C304.4 364.3 308.9 364.3 313.3 364.3C317.8 364.3 322.2 364.9 326.7 366.0C331.1 367.1 336.1 368.8 340.0 371.0C343.9 373.2 347.2 376.2 350.0 379.3C352.8 382.4 355.1 385.9 356.7 389.3C358.3 392.8 359.2 396.6 359.5 400.0C359.8 403.4 359.9 406.5 358.7 410.0C357.5 413.5 355.6 417.3 352.5 421.0C349.4 424.7 344.6 429.1 340.0 432.2C335.4 435.3 330.0 437.9 325.0 439.7C320.0 441.5 314.2 442.8 310.0 443.0C305.8 443.2 304.2 443.0 300.0 441.0C295.8 439.0 289.2 435.2 285.0 431.0C280.8 426.8 277.2 421.2 275.0 416.0C272.8 410.8 271.4 405.0 271.7 400.0Z" fill="#008000"/><path d="M470.0 285.0C476.1 282.7 485.8 285.2 491.7 286.5C497.5 287.8 501.1 290.2 505.0 292.7C508.9 295.1 512.4 297.7 515.0 301.0C517.6 304.3 519.4 309.3 520.3 312.7C521.3 316.0 521.9 317.9 520.8 321.0C519.8 324.1 517.4 327.1 514.2 331.0C511.0 334.9 506.0 340.0 501.7 344.3C497.4 348.6 492.2 353.9 488.3 356.8C484.4 359.8 483.1 361.3 478.3 361.8C473.6 362.4 465.3 360.9 460.0 360.2C454.7 359.5 450.6 359.5 446.7 357.7C442.8 355.9 439.4 352.9 436.7 349.3C433.9 345.7 431.4 340.0 430.0 336.0C428.6 332.0 426.9 328.6 428.3 325.2C429.7 321.7 433.9 319.3 438.3 315.2C442.8 311.0 449.7 305.2 455.0 300.2C460.3 295.1 463.9 287.3 470.0 285.0Z" fill="#008000"/><ellipse cx="436.2" cy="290.2" rx="20.0" ry="5.5" transform="rotate(-37.9 436.2 290.2)" fill="#008000"/><path d="M525.0 379.0C524.0 375.0 524.8 369.1 524.2 366.0C523.7 362.9 523.0 361.8 521.7 360.5C520.4 359.2 517.9 359.1 516.5 358.3C515.1 357.5 513.3 355.5 513.3 355.5C513.3 355.5 513.4 352.8 514.5 351.5C515.6 350.2 517.8 348.8 520.0 347.5C522.2 346.2 525.2 345.2 528.0 344.0C530.8 342.8 534.0 341.2 537.0 340.0C540.0 338.8 543.0 337.5 546.0 336.5C549.0 335.5 551.3 334.4 555.0 334.2C558.7 334.0 563.8 334.2 568.3 335.2C572.8 336.2 577.5 338.1 581.7 340.2C585.9 342.3 589.7 344.8 593.3 347.7C596.9 350.6 600.8 354.1 603.3 357.7C605.8 361.3 607.0 365.7 608.3 369.3C609.5 372.9 610.8 376.0 610.8 379.3C610.8 382.6 610.1 385.9 608.3 389.3C606.5 392.8 603.4 397.1 600.0 400.0C596.6 402.9 592.7 405.3 588.0 407.0C583.3 408.7 577.5 409.8 572.0 410.0C566.5 410.2 560.3 409.5 555.0 408.0C549.7 406.5 544.2 404.0 540.0 401.0C535.8 398.0 532.5 393.7 530.0 390.0C527.5 386.3 526.0 383.0 525.0 379.0Z" fill="#008000"/><path d="M738.3 304.3C737.3 298.4 734.4 305.7 732.2 306.8C729.9 307.9 726.9 309.5 725.0 311.0C723.1 312.5 721.1 314.3 720.8 316.0C720.6 317.7 722.1 319.3 723.3 321.0C724.6 322.7 727.1 324.1 728.3 326.0C729.6 327.9 730.2 330.2 730.8 332.7C731.5 335.2 730.9 339.3 732.2 341.0C733.4 342.7 737.3 348.8 738.3 342.7C739.4 336.6 739.4 310.3 738.3 304.3Z" fill="#008000"/></g>
<g><path d="M434.7 309.2 L461.3 286.8" stroke="#0000ff" stroke-width="7.2" stroke-linecap="round" fill="none"/><path d="M492.7 357.0 L512.3 340.0" stroke="#0000ff" stroke-width="7.0" stroke-linecap="round" fill="none"/><path d="M475.5 369.5L517 369.5Q521 369.7 521.3 374L522.3 399.5Q522.3 405.5 518 405.5L477 405.5Q471.5 405.3 471.3 399.5L470.8 375Q471 369.7 475.5 369.5Z" fill="#0000ff" stroke="#0000ff" stroke-width="3.0" stroke-linejoin="round"/><path d="M623.3 297.7C625.8 297.9 629.7 297.9 633.3 300.2C636.9 302.4 641.9 307.5 645.0 311.0C648.1 314.5 650.7 318.2 651.7 321.0C652.6 323.8 652.5 324.9 650.8 327.7C649.2 330.4 645.1 334.3 641.7 337.7C638.2 341.0 633.1 345.6 630.0 347.7C626.9 349.8 625.6 350.2 623.3 350.2C621.1 350.2 619.7 349.8 616.7 347.7C613.6 345.6 608.3 340.7 605.0 337.7C601.7 334.6 598.3 332.0 596.7 329.3C595.0 326.7 594.4 324.6 595.0 321.8C595.6 319.1 597.2 315.9 600.0 312.7C602.8 309.5 608.6 305.0 611.7 302.7C614.7 300.3 616.4 299.3 618.3 298.5C620.3 297.7 620.8 297.4 623.3 297.7Z" fill="#0000ff" stroke="#0000ff" stroke-width="3.0" stroke-linejoin="round"/><path d="M476.7 267.0C476.9 265.5 480.3 264.2 483.3 262.8C486.4 261.4 490.8 260.1 495.0 258.7C499.2 257.3 505.1 254.8 508.3 254.5C511.5 254.2 513.1 254.6 514.2 257.0C515.3 259.4 515.4 265.5 515.0 268.7C514.6 271.9 513.6 274.4 511.7 276.2C509.7 278.0 506.7 279.4 503.3 279.5C500.0 279.6 495.3 278.2 491.7 277.0C488.1 275.8 484.2 273.7 481.7 272.0C479.2 270.3 476.4 268.5 476.7 267.0Z" fill="#0000ff"/><path d="M251.7 366.8C253.3 358.5 258.8 367.5 261.3 367.7C263.8 367.8 265.1 366.8 266.7 367.7C268.2 368.5 270.3 370.4 270.8 372.7C271.4 374.9 270.6 377.7 270.0 381.0C269.4 384.3 268.0 389.3 267.0 392.7C266.0 396.0 265.0 398.2 264.2 401.0C263.3 403.8 262.7 406.6 262.0 409.3C261.3 412.1 261.7 416.3 260.0 417.7C258.3 419.1 253.1 426.1 251.7 417.7C250.3 409.2 250.1 375.2 251.7 366.8Z" fill="#0000ff" stroke="#0000ff" stroke-width="3.0" stroke-linejoin="round"/></g><g transform="rotate(180 496.8 387.5)"><path d="M434.7 309.2 L461.3 286.8" stroke="#0000ff" stroke-width="7.2" stroke-linecap="round" fill="none"/><path d="M492.7 357.0 L512.3 340.0" stroke="#0000ff" stroke-width="7.0" stroke-linecap="round" fill="none"/><path d="M475.5 369.5L517 369.5Q521 369.7 521.3 374L522.3 399.5Q522.3 405.5 518 405.5L477 405.5Q471.5 405.3 471.3 399.5L470.8 375Q471 369.7 475.5 369.5Z" fill="#0000ff" stroke="#0000ff" stroke-width="3.0" stroke-linejoin="round"/><path d="M623.3 297.7C625.8 297.9 629.7 297.9 633.3 300.2C636.9 302.4 641.9 307.5 645.0 311.0C648.1 314.5 650.7 318.2 651.7 321.0C652.6 323.8 652.5 324.9 650.8 327.7C649.2 330.4 645.1 334.3 641.7 337.7C638.2 341.0 633.1 345.6 630.0 347.7C626.9 349.8 625.6 350.2 623.3 350.2C621.1 350.2 619.7 349.8 616.7 347.7C613.6 345.6 608.3 340.7 605.0 337.7C601.7 334.6 598.3 332.0 596.7 329.3C595.0 326.7 594.4 324.6 595.0 321.8C595.6 319.1 597.2 315.9 600.0 312.7C602.8 309.5 608.6 305.0 611.7 302.7C614.7 300.3 616.4 299.3 618.3 298.5C620.3 297.7 620.8 297.4 623.3 297.7Z" fill="#0000ff" stroke="#0000ff" stroke-width="3.0" stroke-linejoin="round"/><path d="M476.7 267.0C476.9 265.5 480.3 264.2 483.3 262.8C486.4 261.4 490.8 260.1 495.0 258.7C499.2 257.3 505.1 254.8 508.3 254.5C511.5 254.2 513.1 254.6 514.2 257.0C515.3 259.4 515.4 265.5 515.0 268.7C514.6 271.9 513.6 274.4 511.7 276.2C509.7 278.0 506.7 279.4 503.3 279.5C500.0 279.6 495.3 278.2 491.7 277.0C488.1 275.8 484.2 273.7 481.7 272.0C479.2 270.3 476.4 268.5 476.7 267.0Z" fill="#0000ff"/><path d="M251.7 366.8C253.3 358.5 258.8 367.5 261.3 367.7C263.8 367.8 265.1 366.8 266.7 367.7C268.2 368.5 270.3 370.4 270.8 372.7C271.4 374.9 270.6 377.7 270.0 381.0C269.4 384.3 268.0 389.3 267.0 392.7C266.0 396.0 265.0 398.2 264.2 401.0C263.3 403.8 262.7 406.6 262.0 409.3C261.3 412.1 261.7 416.3 260.0 417.7C258.3 419.1 253.1 426.1 251.7 417.7C250.3 409.2 250.1 375.2 251.7 366.8Z" fill="#0000ff" stroke="#0000ff" stroke-width="3.0" stroke-linejoin="round"/></g>
<g><path d="M434.7 309.2 L461.3 286.8" stroke="#8000ff" stroke-width="5.2" stroke-linecap="round" fill="none"/><path d="M492.7 357.0 L512.3 340.0" stroke="#8000ff" stroke-width="5.0" stroke-linecap="round" fill="none"/><path d="M475.5 369.5L517 369.5Q521 369.7 521.3 374L522.3 399.5Q522.3 405.5 518 405.5L477 405.5Q471.5 405.3 471.3 399.5L470.8 375Q471 369.7 475.5 369.5Z" fill="#8000ff"/><path d="M623.3 297.7C625.8 297.9 629.7 297.9 633.3 300.2C636.9 302.4 641.9 307.5 645.0 311.0C648.1 314.5 650.7 318.2 651.7 321.0C652.6 323.8 652.5 324.9 650.8 327.7C649.2 330.4 645.1 334.3 641.7 337.7C638.2 341.0 633.1 345.6 630.0 347.7C626.9 349.8 625.6 350.2 623.3 350.2C621.1 350.2 619.7 349.8 616.7 347.7C613.6 345.6 608.3 340.7 605.0 337.7C601.7 334.6 598.3 332.0 596.7 329.3C595.0 326.7 594.4 324.6 595.0 321.8C595.6 319.1 597.2 315.9 600.0 312.7C602.8 309.5 608.6 305.0 611.7 302.7C614.7 300.3 616.4 299.3 618.3 298.5C620.3 297.7 620.8 297.4 623.3 297.7Z" fill="#8000ff"/><path d="M486.3 267.8C486.6 266.0 491.9 264.4 495.0 262.8C498.1 261.3 502.2 259.2 505.0 258.7C507.8 258.1 510.6 257.8 511.7 259.5C512.8 261.2 512.2 266.2 511.7 268.7C511.1 271.2 510.0 273.2 508.3 274.5C506.7 275.8 504.2 276.3 501.7 276.2C499.2 276.0 495.9 275.1 493.3 273.7C490.8 272.3 486.1 269.6 486.3 267.8Z" fill="#8000ff"/><path d="M251.7 366.8C253.3 358.5 258.8 367.5 261.3 367.7C263.8 367.8 265.1 366.8 266.7 367.7C268.2 368.5 270.3 370.4 270.8 372.7C271.4 374.9 270.6 377.7 270.0 381.0C269.4 384.3 268.0 389.3 267.0 392.7C266.0 396.0 265.0 398.2 264.2 401.0C263.3 403.8 262.7 406.6 262.0 409.3C261.3 412.1 261.7 416.3 260.0 417.7C258.3 419.1 253.1 426.1 251.7 417.7C250.3 409.2 250.1 375.2 251.7 366.8Z" fill="#8000ff"/></g><g transform="rotate(180 496.8 387.5)"><path d="M434.7 309.2 L461.3 286.8" stroke="#8000ff" stroke-width="5.2" stroke-linecap="round" fill="none"/><path d="M492.7 357.0 L512.3 340.0" stroke="#8000ff" stroke-width="5.0" stroke-linecap="round" fill="none"/><path d="M475.5 369.5L517 369.5Q521 369.7 521.3 374L522.3 399.5Q522.3 405.5 518 405.5L477 405.5Q471.5 405.3 471.3 399.5L470.8 375Q471 369.7 475.5 369.5Z" fill="#8000ff"/><path d="M623.3 297.7C625.8 297.9 629.7 297.9 633.3 300.2C636.9 302.4 641.9 307.5 645.0 311.0C648.1 314.5 650.7 318.2 651.7 321.0C652.6 323.8 652.5 324.9 650.8 327.7C649.2 330.4 645.1 334.3 641.7 337.7C638.2 341.0 633.1 345.6 630.0 347.7C626.9 349.8 625.6 350.2 623.3 350.2C621.1 350.2 619.7 349.8 616.7 347.7C613.6 345.6 608.3 340.7 605.0 337.7C601.7 334.6 598.3 332.0 596.7 329.3C595.0 326.7 594.4 324.6 595.0 321.8C595.6 319.1 597.2 315.9 600.0 312.7C602.8 309.5 608.6 305.0 611.7 302.7C614.7 300.3 616.4 299.3 618.3 298.5C620.3 297.7 620.8 297.4 623.3 297.7Z" fill="#8000ff"/><path d="M486.3 267.8C486.6 266.0 491.9 264.4 495.0 262.8C498.1 261.3 502.2 259.2 505.0 258.7C507.8 258.1 510.6 257.8 511.7 259.5C512.8 261.2 512.2 266.2 511.7 268.7C511.1 271.2 510.0 273.2 508.3 274.5C506.7 275.8 504.2 276.3 501.7 276.2C499.2 276.0 495.9 275.1 493.3 273.7C490.8 272.3 486.1 269.6 486.3 267.8Z" fill="#8000ff"/><path d="M251.7 366.8C253.3 358.5 258.8 367.5 261.3 367.7C263.8 367.8 265.1 366.8 266.7 367.7C268.2 368.5 270.3 370.4 270.8 372.7C271.4 374.9 270.6 377.7 270.0 381.0C269.4 384.3 268.0 389.3 267.0 392.7C266.0 396.0 265.0 398.2 264.2 401.0C263.3 403.8 262.7 406.6 262.0 409.3C261.3 412.1 261.7 416.3 260.0 417.7C258.3 419.1 253.1 426.1 251.7 417.7C250.3 409.2 250.1 375.2 251.7 366.8Z" fill="#8000ff"/></g>
</g>
<rect x="259.3" y="176.6" width="2" height="421.2" fill="#000"/>
<rect x="259.3" y="595.8" width="473.8" height="2" fill="#000"/>
<rect x="252" y="176.7" width="8" height="1.4" fill="#000"/>
<text x="245.7" y="181.7" text-anchor="end" class="tk">6</text>
<rect x="256" y="211.7" width="4" height="1.4" fill="#000"/>
<rect x="252" y="246.7" width="8" height="1.4" fill="#000"/>
<text x="245.7" y="251.7" text-anchor="end" class="tk">4</text>
<rect x="256" y="281.7" width="4" height="1.4" fill="#000"/>
<rect x="252" y="316.7" width="8" height="1.4" fill="#000"/>
<text x="245.7" y="321.7" text-anchor="end" class="tk">2</text>
<rect x="256" y="351.7" width="4" height="1.4" fill="#000"/>
<rect x="252" y="386.7" width="8" height="1.4" fill="#000"/>
<text x="245.7" y="391.7" text-anchor="end" class="tk">0</text>
<rect x="256" y="421.7" width="4" height="1.4" fill="#000"/>
<rect x="252" y="456.7" width="8" height="1.4" fill="#000"/>
<text x="245.7" y="461.7" text-anchor="end" class="tk">-2</text>
<rect x="256" y="491.7" width="4" height="1.4" fill="#000"/>
<rect x="252" y="526.7" width="8" height="1.4" fill="#000"/>
<text x="245.7" y="531.7" text-anchor="end" class="tk">-4</text>
<rect x="256" y="561.7" width="4" height="1.4" fill="#000"/>
<rect x="252" y="596.7" width="8" height="1.4" fill="#000"/>
<text x="245.7" y="601.7" text-anchor="end" class="tk">-6</text>
<rect x="259.4" y="597" width="1.6" height="9" fill="#000"/>
<text x="258.2" y="622.3" text-anchor="middle" class="tk">-6</text>
<rect x="298.7" y="597" width="1.6" height="4.5" fill="#000"/>
<rect x="338.1" y="597" width="1.6" height="9" fill="#000"/>
<text x="336.9" y="622.3" text-anchor="middle" class="tk">-4</text>
<rect x="377.4" y="597" width="1.6" height="4.5" fill="#000"/>
<rect x="416.7" y="597" width="1.6" height="9" fill="#000"/>
<text x="415.5" y="622.3" text-anchor="middle" class="tk">-2</text>
<rect x="456.0" y="597" width="1.6" height="4.5" fill="#000"/>
<rect x="495.4" y="597" width="1.6" height="9" fill="#000"/>
<text x="496.2" y="622.3" text-anchor="middle" class="tk">0</text>
<rect x="534.7" y="597" width="1.6" height="4.5" fill="#000"/>
<rect x="574.0" y="597" width="1.6" height="9" fill="#000"/>
<text x="574.8" y="622.3" text-anchor="middle" class="tk">2</text>
<rect x="613.4" y="597" width="1.6" height="4.5" fill="#000"/>
<rect x="652.7" y="597" width="1.6" height="9" fill="#000"/>
<text x="653.5" y="622.3" text-anchor="middle" class="tk">4</text>
<rect x="692.0" y="597" width="1.6" height="4.5" fill="#000"/>
<rect x="731.4" y="597" width="1.6" height="9" fill="#000"/>
<text x="732.2" y="622.3" text-anchor="middle" class="tk">6</text>
<text x="495" y="656" text-anchor="middle" class="ttl">A</text>
<text transform="translate(217.2 400.3) rotate(-90)" text-anchor="middle" class="ttl">B</text>
<rect x="748" y="195.90" width="54.4" height="20.09" fill="#008000"/>
<rect x="748" y="215.69" width="54.4" height="20.09" fill="#ff0000"/>
<rect x="748" y="235.48" width="54.4" height="20.09" fill="#ff8000"/>
<rect x="748" y="255.27" width="54.4" height="20.09" fill="#ffff00"/>
<rect x="748" y="275.06" width="54.4" height="20.09" fill="#80ff00"/>
<rect x="748" y="294.85" width="54.4" height="20.09" fill="#00ff00"/>
<rect x="748" y="314.64" width="54.4" height="20.09" fill="#00ff55"/>
<rect x="748" y="334.43" width="54.4" height="20.09" fill="#00ffaa"/>
<rect x="748" y="354.22" width="54.4" height="20.09" fill="#00ffff"/>
<rect x="748" y="374.01" width="54.4" height="20.09" fill="#0080ff"/>
<rect x="748" y="393.80" width="54.4" height="20.09" fill="#0000ff"/>
<rect x="748" y="413.59" width="54.4" height="20.09" fill="#8000ff"/>
<text x="805.5" y="221.1" class="lg">0.1000</text>
<text x="805.5" y="240.9" class="lg">0.08000</text>
<text x="805.5" y="260.7" class="lg">0.06000</text>
<text x="805.5" y="280.5" class="lg">0.04000</text>
<text x="805.5" y="300.2" class="lg">0.02000</text>
<text x="805.5" y="320.0" class="lg">0</text>
<text x="805.5" y="339.8" class="lg">-0.02000</text>
<text x="805.5" y="359.6" class="lg">-0.04000</text>
<text x="805.5" y="379.4" class="lg">-0.06000</text>
<text x="805.5" y="399.2" class="lg">-0.08000</text>
<text x="805.5" y="419.0" class="lg">-0.1000</text>
</svg>
</body></html>
